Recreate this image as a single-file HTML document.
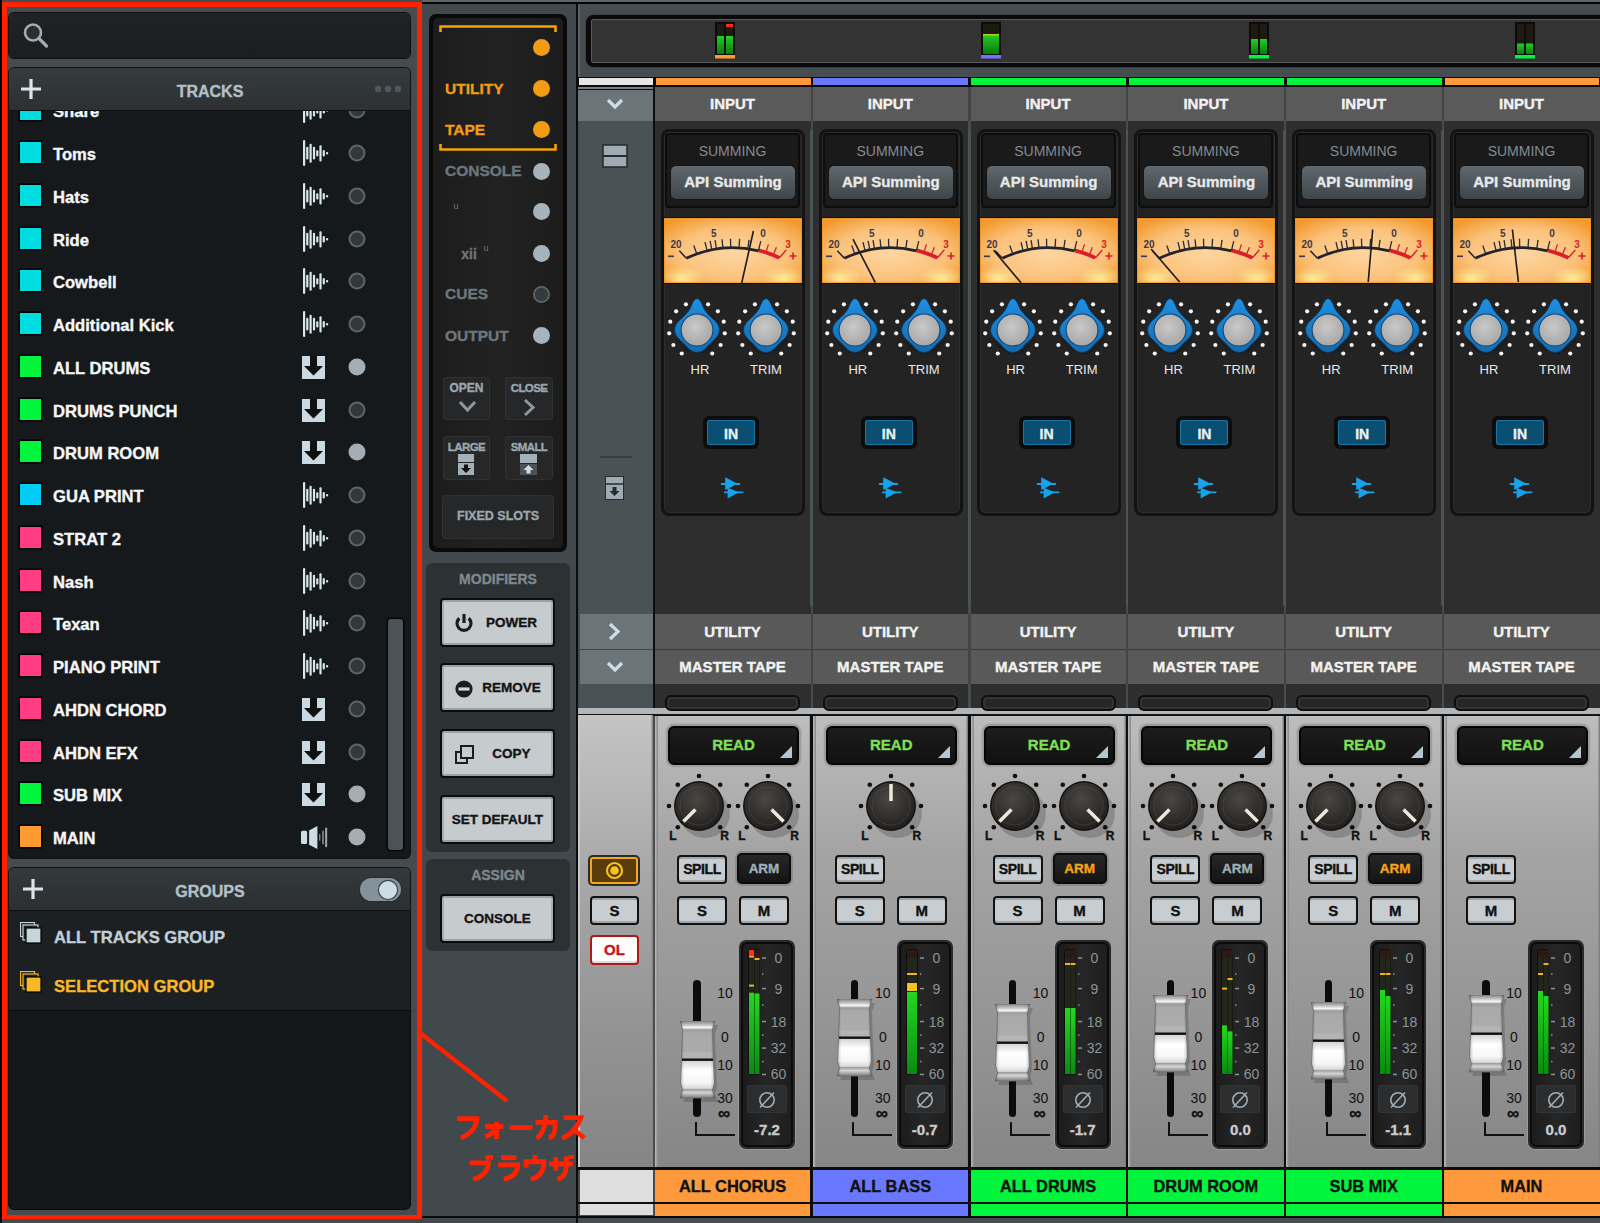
<!DOCTYPE html><html><head><meta charset="utf-8"><style>
*{margin:0;padding:0;box-sizing:border-box}
html,body{width:1600px;height:1223px;overflow:hidden;background:#3d4448;font-family:"Liberation Sans",sans-serif}
.a{position:absolute}
.t{text-align:center;white-space:nowrap}
.b{font-weight:bold}
.t[style*=bold]{-webkit-text-stroke:0.35px currentColor}
</style></head><body>
<div class="a" style="left:0px;top:0px;width:420px;height:1223px;background:#454b4f"></div>
<div class="a" style="left:0px;top:0px;width:2px;height:1223px;background:#000"></div>
<div class="a" style="left:9px;top:13px;width:401px;height:45px;background:linear-gradient(#202326,#1b1e21);border-radius:5px;box-shadow:0 0 0 1px #0d0f10"></div>
<svg class="a" style="left:22px;top:20.5px;" width="28" height="28" viewBox="0 0 28 28"><circle cx="11" cy="11.5" r="8" fill="#2a2e31" stroke="#a3acb2" stroke-width="2.6"/><line x1="17" y1="17.5" x2="24.5" y2="25" stroke="#a3acb2" stroke-width="3.2" stroke-linecap="round"/></svg>
<div class="a" style="left:9px;top:68px;width:401px;height:43px;background:linear-gradient(#363b3e,#2c3033);border-radius:5px 5px 0 0;box-shadow:0 0 0 1px #101214"></div>
<svg class="a" style="left:20px;top:78px;" width="22" height="22" viewBox="0 0 22 22"><path d="M11 1v20M1 11h20" stroke="#dce6ea" stroke-width="3.2"/></svg>
<div class="a t" style="left:150px;top:80.5px;width:120px;height:22px;line-height:22px;font-size:16px;font-weight:bold;color:#b4c0c8">TRACKS</div>
<svg class="a" style="left:372px;top:83px;" width="32" height="12" viewBox="0 0 32 12"><circle cx="6" cy="6" r="3.2" fill="#50585d"/><circle cx="16" cy="6" r="3.2" fill="#50585d"/><circle cx="26" cy="6" r="3.2" fill="#50585d"/></svg>
<div class="a" style="left:9px;top:111px;width:401px;height:747px;background:#16191c;border-radius:0 0 5px 5px;box-shadow:0 0 0 1px #0d0f10;overflow:hidden"></div>
<div class="a" style="left:388px;top:618.5px;width:15px;height:231px;background:#4c5358;border-radius:3px;box-shadow:0 0 0 1.5px #060708"></div>
<div class="a" style="left:9px;top:111px;width:401px;height:747px;overflow:hidden">
<div class="a" style="left:11px;top:-11.75px;width:21px;height:21px;background:#00dde0;box-shadow:0 0 0 1.5px #000"></div>
<div class="a t" style="left:44px;top:-9.75px;width:240px;height:22px;line-height:22px;text-align:left;font-size:16.6px;font-weight:bold;color:#f4f6f7">Share</div>
<svg class="a" style="left:293px;top:-13.75px;" width="27" height="27" viewBox="0 0 27 27"><rect x="1" y="0" width="2.2" height="26" rx="1" fill="#d9e6ea"/><rect x="4.2" y="6.8" width="2.2" height="12.8" rx="1" fill="#d9e6ea"/><rect x="7.5" y="3.7" width="2.2" height="19.0" rx="1" fill="#d9e6ea"/><rect x="10.9" y="6.8" width="2.2" height="12.599999999999998" rx="1" fill="#d9e6ea"/><rect x="14.2" y="10.2" width="2.2" height="6.199999999999999" rx="1" fill="#d9e6ea"/><rect x="17.4" y="5.3" width="2.2" height="16.2" rx="1" fill="#d9e6ea"/><rect x="20.7" y="10" width="2.2" height="6.600000000000001" rx="1" fill="#d9e6ea"/><rect x="24" y="12.1" width="2.2" height="2.5" rx="1" fill="#d9e6ea"/></svg>
<svg class="a" style="left:339px;top:-9.75px;" width="18" height="18" viewBox="0 0 18 18"><circle cx="9" cy="9" r="7.5" fill="#33383b" stroke="#5d6569" stroke-width="2"/></svg>
<div class="a" style="left:11px;top:31.0px;width:21px;height:21px;background:#00dde0;box-shadow:0 0 0 1.5px #000"></div>
<div class="a t" style="left:44px;top:33.0px;width:240px;height:22px;line-height:22px;text-align:left;font-size:16.6px;font-weight:bold;color:#f4f6f7">Toms</div>
<svg class="a" style="left:293px;top:29.0px;" width="27" height="27" viewBox="0 0 27 27"><rect x="1" y="0" width="2.2" height="26" rx="1" fill="#d9e6ea"/><rect x="4.2" y="6.8" width="2.2" height="12.8" rx="1" fill="#d9e6ea"/><rect x="7.5" y="3.7" width="2.2" height="19.0" rx="1" fill="#d9e6ea"/><rect x="10.9" y="6.8" width="2.2" height="12.599999999999998" rx="1" fill="#d9e6ea"/><rect x="14.2" y="10.2" width="2.2" height="6.199999999999999" rx="1" fill="#d9e6ea"/><rect x="17.4" y="5.3" width="2.2" height="16.2" rx="1" fill="#d9e6ea"/><rect x="20.7" y="10" width="2.2" height="6.600000000000001" rx="1" fill="#d9e6ea"/><rect x="24" y="12.1" width="2.2" height="2.5" rx="1" fill="#d9e6ea"/></svg>
<svg class="a" style="left:339px;top:33.0px;" width="18" height="18" viewBox="0 0 18 18"><circle cx="9" cy="9" r="7.5" fill="#33383b" stroke="#5d6569" stroke-width="2"/></svg>
<div class="a" style="left:11px;top:73.75px;width:21px;height:21px;background:#00dde0;box-shadow:0 0 0 1.5px #000"></div>
<div class="a t" style="left:44px;top:75.75px;width:240px;height:22px;line-height:22px;text-align:left;font-size:16.6px;font-weight:bold;color:#f4f6f7">Hats</div>
<svg class="a" style="left:293px;top:71.75px;" width="27" height="27" viewBox="0 0 27 27"><rect x="1" y="0" width="2.2" height="26" rx="1" fill="#d9e6ea"/><rect x="4.2" y="6.8" width="2.2" height="12.8" rx="1" fill="#d9e6ea"/><rect x="7.5" y="3.7" width="2.2" height="19.0" rx="1" fill="#d9e6ea"/><rect x="10.9" y="6.8" width="2.2" height="12.599999999999998" rx="1" fill="#d9e6ea"/><rect x="14.2" y="10.2" width="2.2" height="6.199999999999999" rx="1" fill="#d9e6ea"/><rect x="17.4" y="5.3" width="2.2" height="16.2" rx="1" fill="#d9e6ea"/><rect x="20.7" y="10" width="2.2" height="6.600000000000001" rx="1" fill="#d9e6ea"/><rect x="24" y="12.1" width="2.2" height="2.5" rx="1" fill="#d9e6ea"/></svg>
<svg class="a" style="left:339px;top:75.75px;" width="18" height="18" viewBox="0 0 18 18"><circle cx="9" cy="9" r="7.5" fill="#33383b" stroke="#5d6569" stroke-width="2"/></svg>
<div class="a" style="left:11px;top:116.5px;width:21px;height:21px;background:#00dde0;box-shadow:0 0 0 1.5px #000"></div>
<div class="a t" style="left:44px;top:118.5px;width:240px;height:22px;line-height:22px;text-align:left;font-size:16.6px;font-weight:bold;color:#f4f6f7">Ride</div>
<svg class="a" style="left:293px;top:114.5px;" width="27" height="27" viewBox="0 0 27 27"><rect x="1" y="0" width="2.2" height="26" rx="1" fill="#d9e6ea"/><rect x="4.2" y="6.8" width="2.2" height="12.8" rx="1" fill="#d9e6ea"/><rect x="7.5" y="3.7" width="2.2" height="19.0" rx="1" fill="#d9e6ea"/><rect x="10.9" y="6.8" width="2.2" height="12.599999999999998" rx="1" fill="#d9e6ea"/><rect x="14.2" y="10.2" width="2.2" height="6.199999999999999" rx="1" fill="#d9e6ea"/><rect x="17.4" y="5.3" width="2.2" height="16.2" rx="1" fill="#d9e6ea"/><rect x="20.7" y="10" width="2.2" height="6.600000000000001" rx="1" fill="#d9e6ea"/><rect x="24" y="12.1" width="2.2" height="2.5" rx="1" fill="#d9e6ea"/></svg>
<svg class="a" style="left:339px;top:118.5px;" width="18" height="18" viewBox="0 0 18 18"><circle cx="9" cy="9" r="7.5" fill="#33383b" stroke="#5d6569" stroke-width="2"/></svg>
<div class="a" style="left:11px;top:159.25px;width:21px;height:21px;background:#00dde0;box-shadow:0 0 0 1.5px #000"></div>
<div class="a t" style="left:44px;top:161.25px;width:240px;height:22px;line-height:22px;text-align:left;font-size:16.6px;font-weight:bold;color:#f4f6f7">Cowbell</div>
<svg class="a" style="left:293px;top:157.25px;" width="27" height="27" viewBox="0 0 27 27"><rect x="1" y="0" width="2.2" height="26" rx="1" fill="#d9e6ea"/><rect x="4.2" y="6.8" width="2.2" height="12.8" rx="1" fill="#d9e6ea"/><rect x="7.5" y="3.7" width="2.2" height="19.0" rx="1" fill="#d9e6ea"/><rect x="10.9" y="6.8" width="2.2" height="12.599999999999998" rx="1" fill="#d9e6ea"/><rect x="14.2" y="10.2" width="2.2" height="6.199999999999999" rx="1" fill="#d9e6ea"/><rect x="17.4" y="5.3" width="2.2" height="16.2" rx="1" fill="#d9e6ea"/><rect x="20.7" y="10" width="2.2" height="6.600000000000001" rx="1" fill="#d9e6ea"/><rect x="24" y="12.1" width="2.2" height="2.5" rx="1" fill="#d9e6ea"/></svg>
<svg class="a" style="left:339px;top:161.25px;" width="18" height="18" viewBox="0 0 18 18"><circle cx="9" cy="9" r="7.5" fill="#33383b" stroke="#5d6569" stroke-width="2"/></svg>
<div class="a" style="left:11px;top:202.0px;width:21px;height:21px;background:#00dde0;box-shadow:0 0 0 1.5px #000"></div>
<div class="a t" style="left:44px;top:204.0px;width:240px;height:22px;line-height:22px;text-align:left;font-size:16.6px;font-weight:bold;color:#f4f6f7">Additional Kick</div>
<svg class="a" style="left:293px;top:200.0px;" width="27" height="27" viewBox="0 0 27 27"><rect x="1" y="0" width="2.2" height="26" rx="1" fill="#d9e6ea"/><rect x="4.2" y="6.8" width="2.2" height="12.8" rx="1" fill="#d9e6ea"/><rect x="7.5" y="3.7" width="2.2" height="19.0" rx="1" fill="#d9e6ea"/><rect x="10.9" y="6.8" width="2.2" height="12.599999999999998" rx="1" fill="#d9e6ea"/><rect x="14.2" y="10.2" width="2.2" height="6.199999999999999" rx="1" fill="#d9e6ea"/><rect x="17.4" y="5.3" width="2.2" height="16.2" rx="1" fill="#d9e6ea"/><rect x="20.7" y="10" width="2.2" height="6.600000000000001" rx="1" fill="#d9e6ea"/><rect x="24" y="12.1" width="2.2" height="2.5" rx="1" fill="#d9e6ea"/></svg>
<svg class="a" style="left:339px;top:204.0px;" width="18" height="18" viewBox="0 0 18 18"><circle cx="9" cy="9" r="7.5" fill="#33383b" stroke="#5d6569" stroke-width="2"/></svg>
<div class="a" style="left:11px;top:244.75px;width:21px;height:21px;background:#00f53c;box-shadow:0 0 0 1.5px #000"></div>
<div class="a t" style="left:44px;top:246.75px;width:240px;height:22px;line-height:22px;text-align:left;font-size:16.6px;font-weight:bold;color:#f4f6f7">ALL DRUMS</div>
<svg class="a" style="left:293px;top:244.75px;" width="23" height="23" viewBox="0 0 23 23"><rect x="0" y="0" width="23" height="23" fill="#cbdae2"/><path d="M8 0h7v10h6l-9.5 9.5L2 10h6z" fill="#111"/></svg>
<svg class="a" style="left:339px;top:246.75px;" width="18" height="18" viewBox="0 0 18 18"><circle cx="9" cy="9" r="8.5" fill="#a4adb3"/></svg>
<div class="a" style="left:11px;top:287.5px;width:21px;height:21px;background:#00f53c;box-shadow:0 0 0 1.5px #000"></div>
<div class="a t" style="left:44px;top:289.5px;width:240px;height:22px;line-height:22px;text-align:left;font-size:16.6px;font-weight:bold;color:#f4f6f7">DRUMS PUNCH</div>
<svg class="a" style="left:293px;top:287.5px;" width="23" height="23" viewBox="0 0 23 23"><rect x="0" y="0" width="23" height="23" fill="#cbdae2"/><path d="M8 0h7v10h6l-9.5 9.5L2 10h6z" fill="#111"/></svg>
<svg class="a" style="left:339px;top:289.5px;" width="18" height="18" viewBox="0 0 18 18"><circle cx="9" cy="9" r="7.5" fill="#33383b" stroke="#5d6569" stroke-width="2"/></svg>
<div class="a" style="left:11px;top:330.25px;width:21px;height:21px;background:#00f53c;box-shadow:0 0 0 1.5px #000"></div>
<div class="a t" style="left:44px;top:332.25px;width:240px;height:22px;line-height:22px;text-align:left;font-size:16.6px;font-weight:bold;color:#f4f6f7">DRUM ROOM</div>
<svg class="a" style="left:293px;top:330.25px;" width="23" height="23" viewBox="0 0 23 23"><rect x="0" y="0" width="23" height="23" fill="#cbdae2"/><path d="M8 0h7v10h6l-9.5 9.5L2 10h6z" fill="#111"/></svg>
<svg class="a" style="left:339px;top:332.25px;" width="18" height="18" viewBox="0 0 18 18"><circle cx="9" cy="9" r="8.5" fill="#a4adb3"/></svg>
<div class="a" style="left:11px;top:373.0px;width:21px;height:21px;background:#00ccf5;box-shadow:0 0 0 1.5px #000"></div>
<div class="a t" style="left:44px;top:375.0px;width:240px;height:22px;line-height:22px;text-align:left;font-size:16.6px;font-weight:bold;color:#f4f6f7">GUA PRINT</div>
<svg class="a" style="left:293px;top:371.0px;" width="27" height="27" viewBox="0 0 27 27"><rect x="1" y="0" width="2.2" height="26" rx="1" fill="#d9e6ea"/><rect x="4.2" y="6.8" width="2.2" height="12.8" rx="1" fill="#d9e6ea"/><rect x="7.5" y="3.7" width="2.2" height="19.0" rx="1" fill="#d9e6ea"/><rect x="10.9" y="6.8" width="2.2" height="12.599999999999998" rx="1" fill="#d9e6ea"/><rect x="14.2" y="10.2" width="2.2" height="6.199999999999999" rx="1" fill="#d9e6ea"/><rect x="17.4" y="5.3" width="2.2" height="16.2" rx="1" fill="#d9e6ea"/><rect x="20.7" y="10" width="2.2" height="6.600000000000001" rx="1" fill="#d9e6ea"/><rect x="24" y="12.1" width="2.2" height="2.5" rx="1" fill="#d9e6ea"/></svg>
<svg class="a" style="left:339px;top:375.0px;" width="18" height="18" viewBox="0 0 18 18"><circle cx="9" cy="9" r="7.5" fill="#33383b" stroke="#5d6569" stroke-width="2"/></svg>
<div class="a" style="left:11px;top:415.75px;width:21px;height:21px;background:#ff3d85;box-shadow:0 0 0 1.5px #000"></div>
<div class="a t" style="left:44px;top:417.75px;width:240px;height:22px;line-height:22px;text-align:left;font-size:16.6px;font-weight:bold;color:#f4f6f7">STRAT 2</div>
<svg class="a" style="left:293px;top:413.75px;" width="27" height="27" viewBox="0 0 27 27"><rect x="1" y="0" width="2.2" height="26" rx="1" fill="#d9e6ea"/><rect x="4.2" y="6.8" width="2.2" height="12.8" rx="1" fill="#d9e6ea"/><rect x="7.5" y="3.7" width="2.2" height="19.0" rx="1" fill="#d9e6ea"/><rect x="10.9" y="6.8" width="2.2" height="12.599999999999998" rx="1" fill="#d9e6ea"/><rect x="14.2" y="10.2" width="2.2" height="6.199999999999999" rx="1" fill="#d9e6ea"/><rect x="17.4" y="5.3" width="2.2" height="16.2" rx="1" fill="#d9e6ea"/><rect x="20.7" y="10" width="2.2" height="6.600000000000001" rx="1" fill="#d9e6ea"/><rect x="24" y="12.1" width="2.2" height="2.5" rx="1" fill="#d9e6ea"/></svg>
<svg class="a" style="left:339px;top:417.75px;" width="18" height="18" viewBox="0 0 18 18"><circle cx="9" cy="9" r="7.5" fill="#33383b" stroke="#5d6569" stroke-width="2"/></svg>
<div class="a" style="left:11px;top:458.5px;width:21px;height:21px;background:#ff3d85;box-shadow:0 0 0 1.5px #000"></div>
<div class="a t" style="left:44px;top:460.5px;width:240px;height:22px;line-height:22px;text-align:left;font-size:16.6px;font-weight:bold;color:#f4f6f7">Nash</div>
<svg class="a" style="left:293px;top:456.5px;" width="27" height="27" viewBox="0 0 27 27"><rect x="1" y="0" width="2.2" height="26" rx="1" fill="#d9e6ea"/><rect x="4.2" y="6.8" width="2.2" height="12.8" rx="1" fill="#d9e6ea"/><rect x="7.5" y="3.7" width="2.2" height="19.0" rx="1" fill="#d9e6ea"/><rect x="10.9" y="6.8" width="2.2" height="12.599999999999998" rx="1" fill="#d9e6ea"/><rect x="14.2" y="10.2" width="2.2" height="6.199999999999999" rx="1" fill="#d9e6ea"/><rect x="17.4" y="5.3" width="2.2" height="16.2" rx="1" fill="#d9e6ea"/><rect x="20.7" y="10" width="2.2" height="6.600000000000001" rx="1" fill="#d9e6ea"/><rect x="24" y="12.1" width="2.2" height="2.5" rx="1" fill="#d9e6ea"/></svg>
<svg class="a" style="left:339px;top:460.5px;" width="18" height="18" viewBox="0 0 18 18"><circle cx="9" cy="9" r="7.5" fill="#33383b" stroke="#5d6569" stroke-width="2"/></svg>
<div class="a" style="left:11px;top:501.25px;width:21px;height:21px;background:#ff3d85;box-shadow:0 0 0 1.5px #000"></div>
<div class="a t" style="left:44px;top:503.25px;width:240px;height:22px;line-height:22px;text-align:left;font-size:16.6px;font-weight:bold;color:#f4f6f7">Texan</div>
<svg class="a" style="left:293px;top:499.25px;" width="27" height="27" viewBox="0 0 27 27"><rect x="1" y="0" width="2.2" height="26" rx="1" fill="#d9e6ea"/><rect x="4.2" y="6.8" width="2.2" height="12.8" rx="1" fill="#d9e6ea"/><rect x="7.5" y="3.7" width="2.2" height="19.0" rx="1" fill="#d9e6ea"/><rect x="10.9" y="6.8" width="2.2" height="12.599999999999998" rx="1" fill="#d9e6ea"/><rect x="14.2" y="10.2" width="2.2" height="6.199999999999999" rx="1" fill="#d9e6ea"/><rect x="17.4" y="5.3" width="2.2" height="16.2" rx="1" fill="#d9e6ea"/><rect x="20.7" y="10" width="2.2" height="6.600000000000001" rx="1" fill="#d9e6ea"/><rect x="24" y="12.1" width="2.2" height="2.5" rx="1" fill="#d9e6ea"/></svg>
<svg class="a" style="left:339px;top:503.25px;" width="18" height="18" viewBox="0 0 18 18"><circle cx="9" cy="9" r="7.5" fill="#33383b" stroke="#5d6569" stroke-width="2"/></svg>
<div class="a" style="left:11px;top:544.0px;width:21px;height:21px;background:#ff3d85;box-shadow:0 0 0 1.5px #000"></div>
<div class="a t" style="left:44px;top:546.0px;width:240px;height:22px;line-height:22px;text-align:left;font-size:16.6px;font-weight:bold;color:#f4f6f7">PIANO PRINT</div>
<svg class="a" style="left:293px;top:542.0px;" width="27" height="27" viewBox="0 0 27 27"><rect x="1" y="0" width="2.2" height="26" rx="1" fill="#d9e6ea"/><rect x="4.2" y="6.8" width="2.2" height="12.8" rx="1" fill="#d9e6ea"/><rect x="7.5" y="3.7" width="2.2" height="19.0" rx="1" fill="#d9e6ea"/><rect x="10.9" y="6.8" width="2.2" height="12.599999999999998" rx="1" fill="#d9e6ea"/><rect x="14.2" y="10.2" width="2.2" height="6.199999999999999" rx="1" fill="#d9e6ea"/><rect x="17.4" y="5.3" width="2.2" height="16.2" rx="1" fill="#d9e6ea"/><rect x="20.7" y="10" width="2.2" height="6.600000000000001" rx="1" fill="#d9e6ea"/><rect x="24" y="12.1" width="2.2" height="2.5" rx="1" fill="#d9e6ea"/></svg>
<svg class="a" style="left:339px;top:546.0px;" width="18" height="18" viewBox="0 0 18 18"><circle cx="9" cy="9" r="7.5" fill="#33383b" stroke="#5d6569" stroke-width="2"/></svg>
<div class="a" style="left:11px;top:586.75px;width:21px;height:21px;background:#ff3d85;box-shadow:0 0 0 1.5px #000"></div>
<div class="a t" style="left:44px;top:588.75px;width:240px;height:22px;line-height:22px;text-align:left;font-size:16.6px;font-weight:bold;color:#f4f6f7">AHDN CHORD</div>
<svg class="a" style="left:293px;top:586.75px;" width="23" height="23" viewBox="0 0 23 23"><rect x="0" y="0" width="23" height="23" fill="#cbdae2"/><path d="M8 0h7v10h6l-9.5 9.5L2 10h6z" fill="#111"/></svg>
<svg class="a" style="left:339px;top:588.75px;" width="18" height="18" viewBox="0 0 18 18"><circle cx="9" cy="9" r="7.5" fill="#33383b" stroke="#5d6569" stroke-width="2"/></svg>
<div class="a" style="left:11px;top:629.5px;width:21px;height:21px;background:#ff3d85;box-shadow:0 0 0 1.5px #000"></div>
<div class="a t" style="left:44px;top:631.5px;width:240px;height:22px;line-height:22px;text-align:left;font-size:16.6px;font-weight:bold;color:#f4f6f7">AHDN EFX</div>
<svg class="a" style="left:293px;top:629.5px;" width="23" height="23" viewBox="0 0 23 23"><rect x="0" y="0" width="23" height="23" fill="#cbdae2"/><path d="M8 0h7v10h6l-9.5 9.5L2 10h6z" fill="#111"/></svg>
<svg class="a" style="left:339px;top:631.5px;" width="18" height="18" viewBox="0 0 18 18"><circle cx="9" cy="9" r="7.5" fill="#33383b" stroke="#5d6569" stroke-width="2"/></svg>
<div class="a" style="left:11px;top:672.25px;width:21px;height:21px;background:#00f53c;box-shadow:0 0 0 1.5px #000"></div>
<div class="a t" style="left:44px;top:674.25px;width:240px;height:22px;line-height:22px;text-align:left;font-size:16.6px;font-weight:bold;color:#f4f6f7">SUB MIX</div>
<svg class="a" style="left:293px;top:672.25px;" width="23" height="23" viewBox="0 0 23 23"><rect x="0" y="0" width="23" height="23" fill="#cbdae2"/><path d="M8 0h7v10h6l-9.5 9.5L2 10h6z" fill="#111"/></svg>
<svg class="a" style="left:339px;top:674.25px;" width="18" height="18" viewBox="0 0 18 18"><circle cx="9" cy="9" r="8.5" fill="#a4adb3"/></svg>
<div class="a" style="left:11px;top:715.0px;width:21px;height:21px;background:#ff9a30;box-shadow:0 0 0 1.5px #000"></div>
<div class="a t" style="left:44px;top:717.0px;width:240px;height:22px;line-height:22px;text-align:left;font-size:16.6px;font-weight:bold;color:#f4f6f7">MAIN</div>
<svg class="a" style="left:282px;top:713.0px;" width="38" height="27" viewBox="0 0 38 27"><rect x="10" y="6.7" width="6.1" height="13.2" rx="1.5" fill="#cddde4"/><path d="M18.1 6.4L26.4 1.9V24.9L18.1 20.7Z" fill="#cddde4"/><rect x="28" y="10" width="1.4" height="6.6" fill="#787e82"/><rect x="31" y="6.7" width="2" height="13.6" fill="#6d7378"/><rect x="34.1" y="3.4" width="2.1" height="19.9" rx="1" fill="#9ca2a6"/></svg>
<svg class="a" style="left:339px;top:717.0px;" width="18" height="18" viewBox="0 0 18 18"><circle cx="9" cy="9" r="8.5" fill="#a4adb3"/></svg>
</div>
<div class="a" style="left:9px;top:868px;width:401px;height:43px;background:linear-gradient(#34393c,#2b2f32);border-radius:5px 5px 0 0;box-shadow:0 0 0 1px #101214"></div>
<svg class="a" style="left:22px;top:878px;" width="22" height="22" viewBox="0 0 22 22"><path d="M11 1v20M1 11h20" stroke="#dce6ea" stroke-width="3.2"/></svg>
<div class="a t" style="left:150px;top:881px;width:120px;height:22px;line-height:22px;font-size:16px;font-weight:bold;color:#b4c0c8">GROUPS</div>
<div class="a" style="left:360px;top:878px;width:41px;height:23px;background:#85929a;border-radius:12px;box-shadow:0 0 0 1px #262c30"></div>
<svg class="a" style="left:377px;top:879px;" width="22" height="22" viewBox="0 0 22 22"><circle cx="11" cy="11" r="9.6" fill="#cbdde6" stroke="#3c464b" stroke-width="1.2"/></svg>
<div class="a" style="left:9px;top:911px;width:401px;height:100px;background:#1c2023;box-shadow:0 0 0 1px #0d0f10"></div>
<svg class="a" style="left:20px;top:922px;" width="22" height="22" viewBox="0 0 22 22"><rect x="0.5" y="0.5" width="14" height="14" fill="none" stroke="#c6d4dc" stroke-width="1.2"/><rect x="3" y="3" width="15" height="15" fill="#1c2023" stroke="#c6d4dc" stroke-width="1.2"/><rect x="6" y="6" width="15" height="15" fill="#c6d4dc" stroke="#000" stroke-width="1.2"/></svg>
<div class="a t" style="left:54px;top:927px;width:250px;height:22px;line-height:22px;text-align:left;font-size:16.6px;font-weight:bold;color:#c2ced6">ALL TRACKS GROUP</div>
<svg class="a" style="left:20px;top:971px;" width="22" height="22" viewBox="0 0 22 22"><rect x="0.5" y="0.5" width="14" height="14" fill="none" stroke="#f7b82a" stroke-width="1.2"/><rect x="3" y="3" width="15" height="15" fill="#1c2023" stroke="#f7b82a" stroke-width="1.2"/><rect x="6" y="6" width="15" height="15" fill="#f7b82a" stroke="#000" stroke-width="1.2"/></svg>
<div class="a t" style="left:54px;top:976px;width:250px;height:22px;line-height:22px;text-align:left;font-size:16.6px;font-weight:bold;color:#f7b82a">SELECTION GROUP</div>
<div class="a" style="left:9px;top:1011px;width:401px;height:198px;background:#15181b;border-radius:0 0 5px 5px;box-shadow:0 0 0 1px #0a0b0c"></div>
<div class="a" style="left:422px;top:0px;width:156px;height:1223px;background:#42494c"></div>
<div class="a" style="left:576px;top:0px;width:2px;height:1223px;background:#0b0c0d"></div>
<div class="a" style="left:429px;top:14px;width:138px;height:538px;background:#0a0a0a;border-radius:7px"></div>
<div class="a" style="left:433px;top:18px;width:130px;height:530px;background:linear-gradient(90deg,#1c1c1c,#222 50%,#1c1c1c);border-radius:5px"></div>
<svg class="a" style="left:439px;top:24px;" width="118" height="128" viewBox="0 0 118 128"><path d="M1.5 8V2.5H116.5V8" fill="none" stroke="#f5a300" stroke-width="2.6"/><path d="M1.5 120V125.5H116.5V120" fill="none" stroke="#f5a300" stroke-width="2.6"/></svg>
<svg class="a" style="left:532px;top:38px;" width="19" height="19" viewBox="0 0 19 19"><circle cx="9.5" cy="9.5" r="8.5" fill="#f29b14"/></svg>
<div class="a t" style="left:445px;top:78.7px;width:100px;height:20px;line-height:20px;text-align:left;font-size:15.5px;font-weight:bold;color:#f29b14">UTILITY</div>
<svg class="a" style="left:532px;top:79px;" width="19" height="19" viewBox="0 0 19 19"><circle cx="9.5" cy="9.5" r="8.5" fill="#f29b14"/></svg>
<div class="a t" style="left:445px;top:120px;width:100px;height:20px;line-height:20px;text-align:left;font-size:15.5px;font-weight:bold;color:#f29b14">TAPE</div>
<svg class="a" style="left:532px;top:120px;" width="19" height="19" viewBox="0 0 19 19"><circle cx="9.5" cy="9.5" r="8.5" fill="#f29b14"/></svg>
<div class="a t" style="left:445px;top:161px;width:100px;height:20px;line-height:20px;text-align:left;font-size:15.5px;font-weight:bold;color:#6d777d">CONSOLE</div>
<svg class="a" style="left:532px;top:162px;" width="19" height="19" viewBox="0 0 19 19"><circle cx="9.5" cy="9.5" r="8.5" fill="#a7b3ba"/></svg>
<svg class="a" style="left:532px;top:202px;" width="19" height="19" viewBox="0 0 19 19"><circle cx="9.5" cy="9.5" r="8.5" fill="#a7b3ba"/></svg>
<svg class="a" style="left:532px;top:244px;" width="19" height="19" viewBox="0 0 19 19"><circle cx="9.5" cy="9.5" r="8.5" fill="#a7b3ba"/></svg>
<div class="a t" style="left:445px;top:284.4px;width:100px;height:20px;line-height:20px;text-align:left;font-size:15.5px;font-weight:bold;color:#6d777d">CUES</div>
<svg class="a" style="left:532px;top:285px;" width="19" height="19" viewBox="0 0 19 19"><circle cx="9.5" cy="9.5" r="7.6" fill="#363a3c" stroke="#5f676b" stroke-width="1.6"/></svg>
<div class="a t" style="left:445px;top:325.6px;width:100px;height:20px;line-height:20px;text-align:left;font-size:15.5px;font-weight:bold;color:#6d777d">OUTPUT</div>
<svg class="a" style="left:532px;top:326px;" width="19" height="19" viewBox="0 0 19 19"><circle cx="9.5" cy="9.5" r="8.5" fill="#a7b3ba"/></svg>
<div class="a t" style="left:450px;top:199px;width:12px;height:14px;line-height:14px;font-size:9px;color:#6d777d">u</div>
<div class="a t" style="left:457px;top:245px;width:24px;height:18px;line-height:18px;font-size:14px;font-weight:bold;color:#6d777d">xii</div>
<div class="a t" style="left:480px;top:241px;width:12px;height:14px;line-height:14px;font-size:9px;color:#6d777d">u</div>
<div class="a" style="left:443px;top:377px;width:47px;height:43px;background:#262729;border-radius:4px;box-shadow:inset 0 0 0 1px #2f3133"></div>
<div class="a t" style="left:443px;top:380px;width:47px;height:16px;line-height:16px;font-size:12px;font-weight:bold;color:#9ca7ad;letter-spacing:0px">OPEN</div>
<svg class="a" style="left:458px;top:400px;" width="19" height="13" viewBox="0 0 19 13"><path d="M2 2l7.5 8 7.5-8" fill="none" stroke="#8d989e" stroke-width="3"/></svg>
<div class="a" style="left:505px;top:377px;width:48px;height:43px;background:#262729;border-radius:4px;box-shadow:inset 0 0 0 1px #2f3133"></div>
<div class="a t" style="left:505px;top:380px;width:48px;height:16px;line-height:16px;font-size:11.5px;font-weight:bold;color:#9ca7ad;letter-spacing:-0.6px">CLOSE</div>
<svg class="a" style="left:522px;top:398px;" width="14" height="19" viewBox="0 0 14 19"><path d="M3 2l8 7.5-8 7.5" fill="none" stroke="#8d989e" stroke-width="3"/></svg>
<div class="a" style="left:443px;top:436px;width:47px;height:44px;background:#262729;border-radius:4px;box-shadow:inset 0 0 0 1px #2f3133"></div>
<div class="a t" style="left:443px;top:439px;width:47px;height:16px;line-height:16px;font-size:11.5px;font-weight:bold;color:#9ca7ad;letter-spacing:-0.6px">LARGE</div>
<svg class="a" style="left:458px;top:454px;" width="16" height="21" viewBox="0 0 16 21"><rect x="0" y="0" width="16" height="8" fill="#a4b0b7"/><rect x="0" y="9" width="16" height="12" fill="#a4b0b7"/><path d="M6 10.5h4v3.5h3l-5 5-5-5h3z" fill="#111"/></svg>
<div class="a" style="left:505px;top:436px;width:48px;height:44px;background:#262729;border-radius:4px;box-shadow:inset 0 0 0 1px #2f3133"></div>
<div class="a t" style="left:505px;top:439px;width:48px;height:16px;line-height:16px;font-size:11.5px;font-weight:bold;color:#9ca7ad;letter-spacing:-0.6px">SMALL</div>
<svg class="a" style="left:520px;top:454px;" width="17" height="21" viewBox="0 0 17 21"><rect x="0" y="0" width="17" height="9" fill="#a4b0b7"/><rect x="0" y="10" width="17" height="11" fill="#4b5358"/><path d="M8.5 11l5 5h-3v3.5h-4V16h-3z" fill="#d5dde2"/></svg>
<div class="a" style="left:442px;top:495px;width:112px;height:44px;background:#262729;border-radius:4px;box-shadow:inset 0 0 0 1px #2f3133"></div>
<div class="a t" style="left:442px;top:505px;width:112px;height:22px;line-height:22px;font-size:12.5px;font-weight:bold;color:#9ca7ad">FIXED SLOTS</div>
<div class="a" style="left:426px;top:563px;width:144px;height:289px;background:#2c3134;border-radius:6px"></div>
<div class="a t" style="left:426px;top:569px;width:144px;height:20px;line-height:20px;font-size:14px;font-weight:bold;color:#7f888d">MODIFIERS</div>
<div class="a" style="left:440px;top:598px;width:115px;height:49px;background:#c6cbce;border:2px solid #0c0c0c;border-radius:4px;box-shadow:inset 0 2px 0 #9aa0a3,inset 0 -2px 0 #9aa0a3,inset 2px 0 0 #a8aeb1,inset -2px 0 0 #a8aeb1"></div>
<div class="a t" style="left:468px;top:598px;width:87px;height:49px;line-height:49px;font-size:13.5px;font-weight:bold;color:#141414">POWER</div>
<svg class="a" style="left:454px;top:613px;" width="20" height="20" viewBox="0 0 20 20"><path d="M5.3 5.2A7 7 0 1 0 14.7 5.2" fill="none" stroke="#1c1c1c" stroke-width="3.2"/><rect x="8.4" y="1" width="3.2" height="9" fill="#1c1c1c"/></svg>
<div class="a" style="left:440px;top:663px;width:115px;height:49px;background:#c6cbce;border:2px solid #0c0c0c;border-radius:4px;box-shadow:inset 0 2px 0 #9aa0a3,inset 0 -2px 0 #9aa0a3,inset 2px 0 0 #a8aeb1,inset -2px 0 0 #a8aeb1"></div>
<div class="a t" style="left:468px;top:663px;width:87px;height:49px;line-height:49px;font-size:13.5px;font-weight:bold;color:#141414">REMOVE</div>
<svg class="a" style="left:455px;top:680px;" width="18" height="18" viewBox="0 0 18 18"><circle cx="9" cy="9" r="8.6" fill="#1c1c1c"/><rect x="3.5" y="7.4" width="11" height="3.2" fill="#d0d4d6"/></svg>
<div class="a" style="left:440px;top:729px;width:115px;height:49px;background:#c6cbce;border:2px solid #0c0c0c;border-radius:4px;box-shadow:inset 0 2px 0 #9aa0a3,inset 0 -2px 0 #9aa0a3,inset 2px 0 0 #a8aeb1,inset -2px 0 0 #a8aeb1"></div>
<div class="a t" style="left:468px;top:729px;width:87px;height:49px;line-height:49px;font-size:13.5px;font-weight:bold;color:#141414">COPY</div>
<svg class="a" style="left:455px;top:745px;" width="19" height="19" viewBox="0 0 19 19"><rect x="6" y="1" width="12" height="12" fill="none" stroke="#1c1c1c" stroke-width="2"/><path d="M6 7H1v11h11v-5" fill="none" stroke="#1c1c1c" stroke-width="2"/></svg>
<div class="a" style="left:440px;top:795px;width:115px;height:49px;background:#c6cbce;border:2px solid #0c0c0c;border-radius:4px;box-shadow:inset 0 2px 0 #9aa0a3,inset 0 -2px 0 #9aa0a3,inset 2px 0 0 #a8aeb1,inset -2px 0 0 #a8aeb1"></div>
<div class="a t" style="left:440px;top:795px;width:115px;height:49px;line-height:49px;font-size:13.5px;font-weight:bold;color:#141414">SET DEFAULT</div>
<div class="a" style="left:426px;top:859px;width:144px;height:92px;background:#2c3134;border-radius:6px"></div>
<div class="a t" style="left:426px;top:865px;width:144px;height:20px;line-height:20px;font-size:14px;font-weight:bold;color:#7f888d">ASSIGN</div>
<div class="a" style="left:440px;top:894px;width:115px;height:49px;background:#c6cbce;border:2px solid #0c0c0c;border-radius:4px;box-shadow:inset 0 2px 0 #9aa0a3,inset 0 -2px 0 #9aa0a3,inset 2px 0 0 #a8aeb1,inset -2px 0 0 #a8aeb1"></div>
<div class="a t" style="left:440px;top:894px;width:115px;height:49px;line-height:49px;font-size:13.5px;font-weight:bold;color:#141414">CONSOLE</div>
<div class="a" style="left:578px;top:0px;width:1022px;height:1223px;background:#454d51"></div>
<div class="a" style="left:422px;top:0px;width:1178px;height:2px;background:#5c6468"></div>
<div class="a" style="left:422px;top:2px;width:1178px;height:2px;background:#050505"></div>
<div class="a" style="left:578px;top:4px;width:2px;height:74px;background:#5a6266"></div>
<div class="a" style="left:586px;top:14.5px;width:1030px;height:52px;background:#0a0a0a;border-radius:8px;box-shadow:0 0 0 1px #3a4044"></div>
<div class="a" style="left:591px;top:18.5px;width:1030px;height:44px;background:#333;border:1px solid #5a5a5a;border-radius:2px"></div>
<svg width="0" height="0" style="position:absolute"><defs><linearGradient id="mg" x1="0" y1="0" x2="0" y2="1"><stop offset="0" stop-color="#22d022"/><stop offset="1" stop-color="#0a7a10"/></linearGradient><linearGradient id="bg" x1="0" y1="0" x2="0" y2="1"><stop offset="0" stop-color="#23d81f"/><stop offset="1" stop-color="#0a8a12"/></linearGradient><radialGradient id="vug" cx="0.5" cy="0.55" r="0.65"><stop offset="0" stop-color="#fdd6a0"/><stop offset="0.6" stop-color="#fbc27c"/><stop offset="1" stop-color="#f29a2e"/></radialGradient><radialGradient id="vuy" cx="0.5" cy="0.5" r="0.5"><stop offset="0" stop-color="#fff3a0" stop-opacity="0.9"/><stop offset="1" stop-color="#fff3a0" stop-opacity="0"/></radialGradient><radialGradient id="kg" cx="0.45" cy="0.4" r="0.6"><stop offset="0" stop-color="#c9c9c9"/><stop offset="1" stop-color="#a8a8a8"/></radialGradient><linearGradient id="kb" x1="0" y1="0" x2="0" y2="1"><stop offset="0" stop-color="#1f8fe0"/><stop offset="1" stop-color="#136bb0"/></linearGradient><radialGradient id="pk" cx="0.45" cy="0.35" r="0.7"><stop offset="0" stop-color="#4a4744"/><stop offset="0.7" stop-color="#2c2a28"/><stop offset="1" stop-color="#1e1c1b"/></radialGradient><linearGradient id="fc" x1="0" y1="0" x2="0" y2="1"><stop offset="0" stop-color="#8a8a8a"/><stop offset="0.04" stop-color="#b4b4b4"/><stop offset="0.085" stop-color="#f6f6f6"/><stop offset="0.115" stop-color="#9c9c9c"/><stop offset="0.16" stop-color="#a9a9a9"/><stop offset="0.40" stop-color="#acacac"/><stop offset="0.42" stop-color="#b6b6b6"/><stop offset="0.49" stop-color="#b2b2b2"/><stop offset="0.52" stop-color="#d4d4d4"/><stop offset="0.64" stop-color="#ffffff"/><stop offset="0.80" stop-color="#f6f6f6"/><stop offset="0.875" stop-color="#dadada"/><stop offset="0.885" stop-color="#9a9a9a"/><stop offset="0.93" stop-color="#d4d4d4"/><stop offset="1" stop-color="#7a7a7a"/></linearGradient><linearGradient id="fcx" x1="0" y1="0" x2="1" y2="0"><stop offset="0" stop-color="#000" stop-opacity="0.25"/><stop offset="0.12" stop-color="#000" stop-opacity="0"/><stop offset="0.88" stop-color="#000" stop-opacity="0"/><stop offset="1" stop-color="#000" stop-opacity="0.25"/></linearGradient></defs></svg>
<svg class="a" style="left:715px;top:22px;" width="20" height="37" viewBox="0 0 20 37"><rect x="0" y="0" width="20" height="33" fill="#0c0c0c"/><rect x="2" y="2" width="7" height="30" fill="#1e1a12"/><rect x="11" y="2" width="7" height="30" fill="#1e1a12"/><rect x="2" y="14" width="7" height="18" fill="url(#mg)"/><rect x="11" y="14" width="7" height="18" fill="url(#mg)"/><rect x="11" y="2" width="7" height="3" fill="#ff2a1a"/><rect x="0" y="33" width="20" height="3.5" fill="#ff9a30"/></svg>
<svg class="a" style="left:981px;top:22px;" width="20" height="37" viewBox="0 0 20 37"><rect x="0" y="0" width="20" height="33" fill="#0c0c0c"/><rect x="2" y="2" width="16" height="30" fill="#1e1a12"/><rect x="2" y="12" width="16" height="20" fill="url(#mg)"/><rect x="2" y="12" width="16" height="1.5" fill="#b8d020"/><rect x="0" y="33" width="20" height="3.5" fill="#6a78ff"/></svg>
<svg class="a" style="left:1249px;top:22px;" width="20" height="37" viewBox="0 0 20 37"><rect x="0" y="0" width="20" height="33" fill="#0c0c0c"/><rect x="2" y="2" width="7" height="30" fill="#1e1a12"/><rect x="11" y="2" width="7" height="30" fill="#1e1a12"/><rect x="2" y="17" width="7" height="15" fill="url(#mg)"/><rect x="11" y="17" width="7" height="15" fill="url(#mg)"/><rect x="0" y="33" width="20" height="3.5" fill="#00f53c"/></svg>
<svg class="a" style="left:1515px;top:22px;" width="20" height="37" viewBox="0 0 20 37"><rect x="0" y="0" width="20" height="33" fill="#0c0c0c"/><rect x="2" y="2" width="7" height="30" fill="#1e1a12"/><rect x="11" y="2" width="7" height="30" fill="#1e1a12"/><rect x="2" y="21.5" width="7" height="10.5" fill="url(#mg)"/><rect x="11" y="21.5" width="7" height="10.5" fill="url(#mg)"/><rect x="0" y="33" width="20" height="3.5" fill="#00f53c"/></svg>
<div class="a" style="left:578px;top:77px;width:1022px;height:9.5px;background:#0c0c0c"></div>
<div class="a" style="left:579px;top:78px;width:73.5px;height:6.5px;background:#e6e6e6"></div>
<div class="a" style="left:578px;top:86.5px;width:75px;height:2px;background:#7b8286"></div>
<div class="a" style="left:578px;top:88.5px;width:75px;height:1px;background:#0c0c0c"></div>
<div class="a" style="left:578px;top:89.5px;width:75px;height:31.5px;background:#6b7479"></div>
<svg class="a" style="left:606px;top:98px;" width="18" height="12" viewBox="0 0 18 12"><path d="M2 2l7 7 7-7" fill="none" stroke="#cddde5" stroke-width="3.2"/></svg>
<div class="a" style="left:580px;top:121px;width:73px;height:493px;background:#495356"></div>
<svg class="a" style="left:602px;top:144px;" width="26" height="24" viewBox="0 0 26 24"><rect x="1" y="1" width="24" height="22" fill="#9eabb2" stroke="#252b2e" stroke-width="1.5"/><line x1="1" y1="12" x2="25" y2="12" stroke="#252b2e" stroke-width="2"/></svg>
<div class="a" style="left:600px;top:456px;width:32px;height:2px;background:#373d40"></div>
<svg class="a" style="left:605px;top:476px;" width="19" height="24" viewBox="0 0 19 24"><rect x="0.5" y="0.5" width="18" height="23" fill="#9eabb2" stroke="#252b2e" stroke-width="1"/><line x1="0" y1="8" x2="19" y2="8" stroke="#252b2e" stroke-width="1.5"/><path d="M7.5 11h4v4h3l-5 5-5-5h3z" fill="#252b2e"/></svg>
<div class="a" style="left:580px;top:614px;width:73px;height:35px;background:#6b7479"></div>
<svg class="a" style="left:608px;top:622px;" width="13" height="19" viewBox="0 0 13 19"><path d="M2 2l8 7.5-8 7.5" fill="none" stroke="#cddde5" stroke-width="3.2"/></svg>
<div class="a" style="left:580px;top:650px;width:73px;height:34px;background:#6b7479"></div>
<div class="a" style="left:580px;top:649px;width:73px;height:1px;background:#3f474b"></div>
<svg class="a" style="left:606px;top:661px;" width="18" height="12" viewBox="0 0 18 12"><path d="M2 2l7 7 7-7" fill="none" stroke="#cddde5" stroke-width="3.2"/></svg>
<div class="a" style="left:580px;top:684px;width:73px;height:24px;background:#495356"></div>
<div class="a" style="left:653px;top:78px;width:2px;height:637px;background:#0e0e0e"></div>
<div class="a" style="left:578px;top:707.5px;width:1022px;height:6.5px;background:#b2b6b8"></div>
<div class="a" style="left:578px;top:714px;width:1022px;height:2px;background:#111"></div>
<div class="a" style="left:578px;top:715px;width:75px;height:452px;background:linear-gradient(#c4c4c4,#a8a8a8 35%,#939393 70%,#858585);box-shadow:inset 2px 0 0 #c8c8c8,inset -1.5px 0 0 #8a8a8a"></div>
<div class="a" style="left:590px;top:857px;width:48px;height:27px;background:#5a3c0c;border:2px solid #f2a818;border-radius:3px;box-shadow:0 0 0 2px #2a2a2a"></div>
<svg class="a" style="left:604px;top:860px;" width="21" height="21" viewBox="0 0 21 21"><circle cx="10.5" cy="10.5" r="7.5" fill="none" stroke="#f7c21a" stroke-width="2.2"/><circle cx="10.5" cy="10.5" r="4.3" fill="#f7c21a"/></svg>
<div class="a" style="left:590px;top:896px;width:49px;height:29px;background:#c7cdd0;border:2px solid #111;border-radius:4px;box-shadow:inset 0 2px 0 #a0a6a9,inset 0 -2px 0 #a0a6a9"></div>
<div class="a t" style="left:590px;top:896px;width:49px;height:29px;line-height:29px;font-size:15px;font-weight:bold;color:#111">S</div>
<div class="a" style="left:590px;top:935px;width:49px;height:30px;background:#fdfdfd;border:2px solid #b01818;border-radius:4px;box-shadow:inset 0 -2px 0 #ddd"></div>
<div class="a t" style="left:590px;top:935px;width:49px;height:30px;line-height:30px;font-size:15px;font-weight:bold;color:#c8141a">OL</div>
<div class="a" style="left:580px;top:1169px;width:73px;height:33px;background:#dedede"></div>
<div class="a" style="left:580px;top:1204px;width:73px;height:11px;background:#dedede"></div>
<div class="a" style="left:578px;top:1167px;width:1022px;height:2.5px;background:#0d0d0d"></div>
<div class="a" style="left:578px;top:1202px;width:1022px;height:2px;background:#0d0d0d"></div>
<div class="a" style="left:578px;top:1215.5px;width:1022px;height:8px;background:#454d51"></div>
<div class="a" style="left:655.5px;top:78px;width:155.0px;height:6.5px;background:#ff9a3c"></div>
<div class="a" style="left:655.0px;top:87px;width:155.5px;height:34px;background:#5a5a5a"></div>
<div class="a t" style="left:655.0px;top:94px;width:155px;height:20px;line-height:20px;font-size:15px;font-weight:bold;color:#f2f2f2">INPUT</div>
<div class="a" style="left:655.0px;top:121px;width:155.5px;height:493px;background:#2e2e2e"></div>
<div class="a" style="left:810.5px;top:87px;width:2.3px;height:34px;background:#444"></div>
<div class="a" style="left:810.0px;top:130px;width:4px;height:476px;background:#4d5458;border-radius:2px"></div>
<div class="a" style="left:810.5px;top:614px;width:2.3px;height:70px;background:#444"></div>
<div class="a" style="left:661.0px;top:129px;width:144px;height:387px;background:#232323;border:3px solid #131313;border-radius:8px;box-shadow:inset 0 0 0 1px #2c2c2c"></div>
<div class="a" style="left:665.0px;top:133px;width:135px;height:75px;background:#1a1a1a;border:2px solid #0c0c0c;border-radius:4px"></div>
<div class="a t" style="left:665.0px;top:141px;width:135px;height:20px;line-height:20px;font-size:14px;color:#838b90">SUMMING</div>
<div class="a" style="left:671.0px;top:166px;width:124px;height:33px;background:linear-gradient(#61686d,#3f464a);border-radius:5px;box-shadow:0 0 0 1px #151515"></div>
<div class="a t" style="left:671.0px;top:171px;width:124px;height:22px;line-height:22px;font-size:15px;font-weight:bold;color:#e6e9eb">API Summing</div>
<div class="a" style="left:663.0px;top:217px;width:140px;height:67px;background:#111"></div>
<svg class="a" style="left:664.0px;top:218px;" width="138" height="65" viewBox="0 0 138 65"><rect width="138" height="65" fill="url(#vug)"/><ellipse cx="18" cy="60" rx="22" ry="12" fill="url(#vuy)"/><ellipse cx="120" cy="60" rx="22" ry="12" fill="url(#vuy)"/><rect width="138" height="65" fill="none" stroke="#e88a20" stroke-width="1.5" opacity="0.7"/><path d="M22.35 40.33A106.6 106.6 0 0 1 94.54 32.87" fill="none" stroke="#23232e" stroke-width="2.8"/><path d="M94.66 32.38A107.1 107.1 0 0 1 115.36 39.88" fill="none" stroke="#d8202a" stroke-width="3.8"/><line x1="32.82" y1="35.94" x2="29.78" y2="27.47" stroke="#2a2a36" stroke-width="1.3"/><line x1="43.14" y1="32.82" x2="40.98" y2="24.09" stroke="#2a2a36" stroke-width="1.3"/><line x1="47.86" y1="31.77" x2="46.10" y2="22.94" stroke="#2a2a36" stroke-width="1.3"/><line x1="52.44" y1="30.95" x2="51.06" y2="22.06" stroke="#2a2a36" stroke-width="1.3"/><line x1="58.90" y1="30.16" x2="58.07" y2="21.19" stroke="#2a2a36" stroke-width="1.3"/><line x1="66.70" y1="29.72" x2="66.53" y2="20.72" stroke="#2a2a36" stroke-width="1.3"/><line x1="75.07" y1="29.89" x2="75.61" y2="20.90" stroke="#2a2a36" stroke-width="1.3"/><line x1="83.77" y1="30.76" x2="85.04" y2="21.85" stroke="#2a2a36" stroke-width="1.3"/><line x1="94.36" y1="32.82" x2="96.76" y2="23.11" stroke="#2a2a36" stroke-width="1.3"/><line x1="101.69" y1="34.92" x2="104.47" y2="26.36" stroke="#d8202a" stroke-width="1.3"/><line x1="109.03" y1="37.60" x2="112.43" y2="29.27" stroke="#d8202a" stroke-width="1.3"/><line x1="22.35" y1="40.33" x2="15.35" y2="32.83" stroke="#23232e" stroke-width="1.5"/><line x1="115.36" y1="39.88" x2="122.36" y2="31.88" stroke="#d8202a" stroke-width="1.5"/><text x="12" y="29.5" font-size="10" font-family="Liberation Sans" font-weight="bold" fill="#3a3a4a" text-anchor="middle">20</text><text x="49.7" y="19" font-size="10" font-family="Liberation Sans" font-weight="bold" fill="#3a3a4a" text-anchor="middle">5</text><text x="99" y="19" font-size="10" font-family="Liberation Sans" font-weight="bold" fill="#3a3a4a" text-anchor="middle">0</text><text x="124" y="29.5" font-size="10" font-family="Liberation Sans" font-weight="bold" fill="#d8202a" text-anchor="middle">3</text><rect x="4" y="37.5" width="6" height="1.6" fill="#3a3a4a"/><path d="M125.5 38h7M129 34.5v7" stroke="#d8202a" stroke-width="1.6"/><line x1="77.7" y1="65" x2="89.4" y2="13" stroke="#1a1a1a" stroke-width="1.6"/></svg>
<svg class="a" style="left:665.0px;top:298px;" width="64" height="64" viewBox="0 0 64 64"><circle cx="43.08" cy="6.28" r="2.1" fill="#f4f4f4"/><circle cx="20.92" cy="6.28" r="2.1" fill="#f4f4f4"/><circle cx="52.87" cy="13.34" r="2.1" fill="#f4f4f4"/><circle cx="11.13" cy="13.34" r="2.1" fill="#f4f4f4"/><circle cx="58.72" cy="23.63" r="2.1" fill="#f4f4f4"/><circle cx="5.28" cy="23.63" r="2.1" fill="#f4f4f4"/><circle cx="59.80" cy="35.36" r="2.1" fill="#f4f4f4"/><circle cx="4.20" cy="35.36" r="2.1" fill="#f4f4f4"/><circle cx="55.64" cy="47.00" r="2.1" fill="#f4f4f4"/><circle cx="8.36" cy="47.00" r="2.1" fill="#f4f4f4"/><circle cx="47.25" cy="55.48" r="2.1" fill="#f4f4f4"/><circle cx="16.75" cy="55.48" r="2.1" fill="#f4f4f4"/><circle cx="33" cy="34" r="22" fill="#1a1a1a" opacity="0.6"/><path d="M32.00 0.70L33.61 1.25L35.08 2.73L36.31 4.79L37.32 6.98L38.17 8.98L38.94 10.65L39.68 11.98L40.43 13.07L41.17 14.01L41.90 14.86L42.61 15.67L43.30 16.44L43.99 17.20L44.67 17.93L45.36 18.64L46.07 19.33L46.80 20.01L47.55 20.70L48.32 21.40L49.10 22.12L49.89 22.89L50.66 23.69L51.40 24.55L52.09 25.47L52.72 26.45L53.26 27.48L53.70 28.56L54.03 29.68L54.23 30.83L54.30 32.00L54.23 33.17L54.03 34.32L53.70 35.44L53.26 36.52L52.72 37.55L52.09 38.53L51.40 39.45L50.66 40.31L49.89 41.11L49.10 41.88L48.32 42.60L47.55 43.30L46.80 43.99L46.07 44.67L45.36 45.36L44.67 46.07L43.99 46.80L43.30 47.55L42.60 48.32L41.88 49.10L41.11 49.89L40.31 50.66L39.45 51.40L38.53 52.09L37.55 52.72L36.52 53.26L35.44 53.70L34.32 54.03L33.17 54.23L32.00 54.30L30.83 54.23L29.68 54.03L28.56 53.70L27.48 53.26L26.45 52.72L25.47 52.09L24.55 51.40L23.69 50.66L22.89 49.89L22.13 49.10L21.40 48.32L20.70 47.55L20.01 46.80L19.33 46.07L18.64 45.36L17.93 44.67L17.20 43.99L16.45 43.30L15.68 42.60L14.90 41.88L14.11 41.11L13.34 40.31L12.60 39.45L11.91 38.53L11.28 37.55L10.74 36.52L10.30 35.44L9.97 34.32L9.77 33.17L9.70 32.00L9.77 30.83L9.97 29.68L10.30 28.56L10.74 27.48L11.28 26.45L11.91 25.47L12.60 24.55L13.34 23.69L14.11 22.89L14.90 22.12L15.68 21.40L16.45 20.70L17.20 20.01L17.93 19.33L18.64 18.64L19.33 17.93L20.01 17.20L20.70 16.44L21.39 15.67L22.10 14.86L22.83 14.01L23.57 13.07L24.32 11.98L25.06 10.65L25.83 8.98L26.68 6.98L27.69 4.79L28.92 2.73L30.39 1.25Z" fill="url(#kb)" stroke="#0a3f70" stroke-width="0.8"/><circle cx="32" cy="32" r="16.4" fill="#0c3f6e"/><circle cx="32" cy="32" r="15.4" fill="url(#kg)"/></svg>
<svg class="a" style="left:734.0px;top:298px;" width="64" height="64" viewBox="0 0 64 64"><circle cx="43.08" cy="6.28" r="2.1" fill="#f4f4f4"/><circle cx="20.92" cy="6.28" r="2.1" fill="#f4f4f4"/><circle cx="52.87" cy="13.34" r="2.1" fill="#f4f4f4"/><circle cx="11.13" cy="13.34" r="2.1" fill="#f4f4f4"/><circle cx="58.72" cy="23.63" r="2.1" fill="#f4f4f4"/><circle cx="5.28" cy="23.63" r="2.1" fill="#f4f4f4"/><circle cx="59.80" cy="35.36" r="2.1" fill="#f4f4f4"/><circle cx="4.20" cy="35.36" r="2.1" fill="#f4f4f4"/><circle cx="55.64" cy="47.00" r="2.1" fill="#f4f4f4"/><circle cx="8.36" cy="47.00" r="2.1" fill="#f4f4f4"/><circle cx="47.25" cy="55.48" r="2.1" fill="#f4f4f4"/><circle cx="16.75" cy="55.48" r="2.1" fill="#f4f4f4"/><circle cx="33" cy="34" r="22" fill="#1a1a1a" opacity="0.6"/><path d="M32.00 0.70L33.61 1.25L35.08 2.73L36.31 4.79L37.32 6.98L38.17 8.98L38.94 10.65L39.68 11.98L40.43 13.07L41.17 14.01L41.90 14.86L42.61 15.67L43.30 16.44L43.99 17.20L44.67 17.93L45.36 18.64L46.07 19.33L46.80 20.01L47.55 20.70L48.32 21.40L49.10 22.12L49.89 22.89L50.66 23.69L51.40 24.55L52.09 25.47L52.72 26.45L53.26 27.48L53.70 28.56L54.03 29.68L54.23 30.83L54.30 32.00L54.23 33.17L54.03 34.32L53.70 35.44L53.26 36.52L52.72 37.55L52.09 38.53L51.40 39.45L50.66 40.31L49.89 41.11L49.10 41.88L48.32 42.60L47.55 43.30L46.80 43.99L46.07 44.67L45.36 45.36L44.67 46.07L43.99 46.80L43.30 47.55L42.60 48.32L41.88 49.10L41.11 49.89L40.31 50.66L39.45 51.40L38.53 52.09L37.55 52.72L36.52 53.26L35.44 53.70L34.32 54.03L33.17 54.23L32.00 54.30L30.83 54.23L29.68 54.03L28.56 53.70L27.48 53.26L26.45 52.72L25.47 52.09L24.55 51.40L23.69 50.66L22.89 49.89L22.13 49.10L21.40 48.32L20.70 47.55L20.01 46.80L19.33 46.07L18.64 45.36L17.93 44.67L17.20 43.99L16.45 43.30L15.68 42.60L14.90 41.88L14.11 41.11L13.34 40.31L12.60 39.45L11.91 38.53L11.28 37.55L10.74 36.52L10.30 35.44L9.97 34.32L9.77 33.17L9.70 32.00L9.77 30.83L9.97 29.68L10.30 28.56L10.74 27.48L11.28 26.45L11.91 25.47L12.60 24.55L13.34 23.69L14.11 22.89L14.90 22.12L15.68 21.40L16.45 20.70L17.20 20.01L17.93 19.33L18.64 18.64L19.33 17.93L20.01 17.20L20.70 16.44L21.39 15.67L22.10 14.86L22.83 14.01L23.57 13.07L24.32 11.98L25.06 10.65L25.83 8.98L26.68 6.98L27.69 4.79L28.92 2.73L30.39 1.25Z" fill="url(#kb)" stroke="#0a3f70" stroke-width="0.8"/><circle cx="32" cy="32" r="16.4" fill="#0c3f6e"/><circle cx="32" cy="32" r="15.4" fill="url(#kg)"/></svg>
<div class="a t" style="left:680.0px;top:361px;width:40px;height:18px;line-height:18px;font-size:13px;color:#e8e8e8">HR</div>
<div class="a t" style="left:746.0px;top:361px;width:40px;height:18px;line-height:18px;font-size:13px;color:#e8e8e8">TRIM</div>
<div class="a" style="left:703.0px;top:416px;width:56px;height:33px;background:#0c0c0c;border-radius:6px"></div>
<div class="a" style="left:707.0px;top:420px;width:48px;height:25px;background:#0a4e71;border-radius:3px;box-shadow:inset 0 0 0 1px #1a76a6"></div>
<div class="a t" style="left:707.0px;top:421.5px;width:48px;height:25px;line-height:25px;font-size:14px;font-weight:bold;color:#eaf2f6">IN</div>
<svg class="a" style="left:720.0px;top:474px;" width="26" height="27" viewBox="0 0 26 27"><path d="M5.2 3.2L17.6 9.7L5.2 16Z" fill="#17a2ea"/><path d="M1.6 10H19.3" stroke="#17a2ea" stroke-width="1.8" stroke-linecap="round"/><path d="M7.6 13.8L19 18.3L7.6 24.6Z" fill="#17a2ea"/><path d="M4.8 18.3H22.7" stroke="#17a2ea" stroke-width="1.8" stroke-linecap="round"/></svg>
<div class="a" style="left:655.0px;top:614px;width:155.5px;height:35px;background:#595959"></div>
<div class="a t" style="left:655.0px;top:621px;width:155px;height:22px;line-height:22px;font-size:15px;font-weight:bold;color:#f2f2f2">UTILITY</div>
<div class="a" style="left:655.0px;top:649px;width:155.5px;height:1px;background:#3a3a3a"></div>
<div class="a" style="left:655.0px;top:650px;width:155.5px;height:34px;background:#595959"></div>
<div class="a t" style="left:655.0px;top:656px;width:155px;height:22px;line-height:22px;font-size:15px;font-weight:bold;color:#f2f2f2">MASTER TAPE</div>
<div class="a" style="left:655.0px;top:684px;width:155.5px;height:24px;background:#2e2e2e"></div>
<div class="a" style="left:665.0px;top:695px;width:135px;height:16px;background:#262626;border:2px solid #0e0e0e;border-radius:6px;box-shadow:inset 0 0 0 2px #333"></div>
<div class="a" style="left:655.0px;top:715.5px;width:155.5px;height:451.5px;background:linear-gradient(#bdbdbd,#a4a4a4 30%,#969696 65%,#868686);box-shadow:inset 1.5px 0 0 #b4b4b4,inset 3px 0 0 #8f8f8f,inset -1.5px 0 0 #808080"></div>
<div class="a" style="left:810.3px;top:715.5px;width:2.7px;height:452px;background:#0d0d0d"></div>
<div class="a" style="left:666.0px;top:724px;width:135px;height:43px;background:#9c9c9c;border-radius:8px;box-shadow:0 0 0 1px #b0b0b0"></div>
<div class="a" style="left:668.0px;top:726px;width:131px;height:39px;background:linear-gradient(#1c1c1c,#111);border:2px solid #050505;border-radius:6px"></div>
<div class="a t" style="left:668.0px;top:734px;width:131px;height:22px;line-height:22px;font-size:15px;font-weight:bold;color:#7ddf55">READ</div>
<svg class="a" style="left:779.0px;top:745px;" width="14" height="14" viewBox="0 0 14 14"><path d="M1 13L13 1V13Z" fill="#b4c6d0"/></svg>
<svg class="a" style="left:664.3px;top:770.7px;" width="70" height="70" viewBox="0 0 70 70"><circle cx="35.00" cy="5.00" r="2.3" fill="#111"/><circle cx="56.21" cy="13.79" r="2.3" fill="#111"/><circle cx="65.00" cy="35.00" r="2.3" fill="#111"/><circle cx="56.21" cy="56.21" r="2.3" fill="#111"/><circle cx="13.79" cy="13.79" r="2.3" fill="#111"/><circle cx="5.00" cy="35.00" r="2.3" fill="#111"/><circle cx="13.79" cy="56.21" r="2.3" fill="#111"/><ellipse cx="41" cy="43" rx="25" ry="24" fill="#000" opacity="0.18"/><circle cx="35" cy="35" r="25" fill="#141312"/><circle cx="35" cy="35" r="23.5" fill="url(#pk)"/><circle cx="35" cy="35" r="19" fill="none" stroke="#55524e" stroke-width="0.8" opacity="0.6"/><line x1="31.46" y1="38.54" x2="19.44" y2="50.56" stroke="#ece8dc" stroke-width="3.5"/></svg>
<svg class="a" style="left:733.3px;top:770.7px;" width="70" height="70" viewBox="0 0 70 70"><circle cx="35.00" cy="5.00" r="2.3" fill="#111"/><circle cx="56.21" cy="13.79" r="2.3" fill="#111"/><circle cx="65.00" cy="35.00" r="2.3" fill="#111"/><circle cx="56.21" cy="56.21" r="2.3" fill="#111"/><circle cx="13.79" cy="13.79" r="2.3" fill="#111"/><circle cx="5.00" cy="35.00" r="2.3" fill="#111"/><circle cx="13.79" cy="56.21" r="2.3" fill="#111"/><ellipse cx="41" cy="43" rx="25" ry="24" fill="#000" opacity="0.18"/><circle cx="35" cy="35" r="25" fill="#141312"/><circle cx="35" cy="35" r="23.5" fill="url(#pk)"/><circle cx="35" cy="35" r="19" fill="none" stroke="#55524e" stroke-width="0.8" opacity="0.6"/><line x1="38.54" y1="38.54" x2="50.56" y2="50.56" stroke="#ece8dc" stroke-width="3.5"/></svg>
<div class="a t" style="left:667.0px;top:828px;width:12px;height:16px;line-height:16px;font-size:12px;font-weight:bold;color:#111">L</div>
<div class="a t" style="left:718.5px;top:828px;width:12px;height:16px;line-height:16px;font-size:12px;font-weight:bold;color:#111">R</div>
<div class="a t" style="left:736.0px;top:828px;width:12px;height:16px;line-height:16px;font-size:12px;font-weight:bold;color:#111">L</div>
<div class="a t" style="left:788.5px;top:828px;width:12px;height:16px;line-height:16px;font-size:12px;font-weight:bold;color:#111">R</div>
<div class="a" style="left:677.0px;top:855px;width:50px;height:29px;background:#c7cdd0;border:2px solid #111;border-radius:4px;box-shadow:inset 0 2px 0 #a0a6a9,inset 0 -2px 0 #a0a6a9"></div>
<div class="a t" style="left:677.0px;top:855px;width:50px;height:29px;line-height:29px;font-size:14px;letter-spacing:-0.4px;font-weight:bold;color:#111">SPILL</div>
<div class="a" style="left:737.0px;top:853px;width:54px;height:31px;background:#0b0b0b;border-radius:5px;box-shadow:0 0 0 2px #8a8a8a"></div>
<div class="a" style="left:739.0px;top:855px;width:50px;height:27px;background:linear-gradient(#262626,#151515);border-radius:3px"></div>
<div class="a t" style="left:739.0px;top:855px;width:50px;height:27px;line-height:27px;font-size:13.5px;font-weight:bold;color:#9fb0b8">ARM</div>
<div class="a" style="left:677.0px;top:896px;width:50px;height:29px;background:#c7cdd0;border:2px solid #111;border-radius:4px;box-shadow:inset 0 2px 0 #a0a6a9,inset 0 -2px 0 #a0a6a9"></div>
<div class="a t" style="left:677.0px;top:896px;width:50px;height:29px;line-height:29px;font-size:15px;font-weight:bold;color:#111">S</div>
<div class="a" style="left:739.0px;top:896px;width:50px;height:29px;background:#c7cdd0;border:2px solid #111;border-radius:4px;box-shadow:inset 0 2px 0 #a0a6a9,inset 0 -2px 0 #a0a6a9"></div>
<div class="a t" style="left:739.0px;top:896px;width:50px;height:29px;line-height:29px;font-size:15px;font-weight:bold;color:#111">M</div>
<div class="a" style="left:693.3px;top:980px;width:7.4px;height:137px;background:#0c0c0c;border-radius:4px"></div>
<div class="a t" style="left:711.0px;top:983.7px;width:28px;height:18px;line-height:18px;font-size:14px;color:#111">10</div>
<div class="a t" style="left:711.0px;top:1027.6px;width:28px;height:18px;line-height:18px;font-size:14px;color:#111">0</div>
<div class="a t" style="left:711.0px;top:1056.3px;width:28px;height:18px;line-height:18px;font-size:14px;color:#111">10</div>
<div class="a t" style="left:711.0px;top:1088.6px;width:28px;height:18px;line-height:18px;font-size:14px;color:#111">30</div>
<div class="a t" style="left:710.0px;top:1105px;width:28px;height:18px;line-height:18px;font-size:17px;font-weight:bold;color:#111">&#8734;</div>
<div class="a" style="left:694.5px;top:1121.5px;width:2px;height:14.5px;background:#111"></div>
<div class="a" style="left:694.5px;top:1134px;width:40px;height:2px;background:#111"></div>
<svg class="a" style="left:679.5px;top:1020.5px;" width="40" height="82" viewBox="0 0 40 82"><path d="M3 4H38L35 13Q36 44 37 66L35 73L38 81H3L6 73L4 66Q5 44 6 13Z" fill="#000" opacity="0.16"/><path d="M0 0H35L32.5 8.5Q33.5 40 34.5 62L32.5 69L35 77H0L2.5 69L0.5 62Q1.5 40 2.5 8.5Z" fill="url(#fc)" stroke="#707070" stroke-width="0.8"/><path d="M0 0H35L32.5 8.5Q33.5 40 34.5 62L32.5 69L35 77H0L2.5 69L0.5 62Q1.5 40 2.5 8.5Z" fill="url(#fcx)"/><rect x="2" y="37.5" width="31" height="2.4" fill="#111"/></svg>
<div class="a" style="left:739.0px;top:940px;width:56px;height:209px;background:#2a2a2a;border-radius:7px;box-shadow:0 0 0 1px #9a9a9a"></div>
<div class="a" style="left:741.0px;top:942px;width:52px;height:205px;background:linear-gradient(90deg,#1c1c1c,#262626 50%,#1e1e1e);border:2px solid #0b0b0b;border-radius:6px"></div>
<svg class="a" style="left:739.0px;top:940px;" width="56" height="209" viewBox="0 0 56 209"><rect x="9" y="9" width="12" height="126" rx="3" fill="#0e0e0e"/><rect x="10" y="10" width="5" height="124" fill="#23261a"/><rect x="10" y="10" width="5" height="8" fill="#2e1a14"/><rect x="10" y="52.7" width="5" height="81.3" fill="url(#bg)"/><rect x="10" y="44.6" width="5" height="2" fill="#f5b020"/><rect x="15.5" y="10" width="5" height="124" fill="#23261a"/><rect x="15.5" y="10" width="5" height="8" fill="#2e1a14"/><rect x="15.5" y="53.5" width="5" height="80.5" fill="url(#bg)"/><rect x="15.5" y="18" width="5" height="2" fill="#f5b020"/><rect x="10" y="10" width="5" height="6" fill="#ff3020"/><rect x="10" y="16" width="5" height="1.5" fill="#ffb020"/><rect x="23" y="17.3" width="4" height="1.5" fill="#8a9296"/><text x="39.5" y="23" font-size="14" font-family="Liberation Sans" fill="#8c9498" text-anchor="middle">0</text><rect x="23" y="47.8" width="4" height="1.5" fill="#8a9296"/><text x="39.5" y="53.5" font-size="14" font-family="Liberation Sans" fill="#8c9498" text-anchor="middle">9</text><rect x="23" y="80.8" width="4" height="1.5" fill="#8a9296"/><text x="39.5" y="86.5" font-size="14" font-family="Liberation Sans" fill="#8c9498" text-anchor="middle">18</text><rect x="23" y="107.3" width="4" height="1.5" fill="#8a9296"/><text x="39.5" y="113" font-size="14" font-family="Liberation Sans" fill="#8c9498" text-anchor="middle">32</text><rect x="23" y="133.70000000000002" width="4" height="1.5" fill="#8a9296"/><text x="39.5" y="139.4" font-size="14" font-family="Liberation Sans" fill="#8c9498" text-anchor="middle">60</text><rect x="23" y="33.3" width="1.5" height="1.5" fill="#8a9296"/><rect x="23" y="64.3" width="1.5" height="1.5" fill="#8a9296"/><rect x="23" y="94.3" width="1.5" height="1.5" fill="#8a9296"/><rect x="23" y="120.8" width="1.5" height="1.5" fill="#8a9296"/></svg>
<div class="a" style="left:747.0px;top:1085px;width:40px;height:28px;background:#2b2d2f;border-radius:3px;box-shadow:inset 0 0 0 1px #323436"></div>
<svg class="a" style="left:756.0px;top:1089px;" width="22" height="22" viewBox="0 0 22 22"><circle cx="11" cy="11" r="7.2" fill="none" stroke="#a5adb2" stroke-width="1.6"/><line x1="4" y1="18.5" x2="18" y2="3.5" stroke="#a5adb2" stroke-width="1.6"/></svg>
<div class="a t" style="left:739.0px;top:1120px;width:56px;height:20px;line-height:20px;font-size:15px;font-weight:bold;color:#c9cbcd">-7.2</div>
<div class="a" style="left:655.0px;top:1169.5px;width:155.5px;height:32.5px;background:#ff9a3c"></div>
<div class="a t" style="left:655.0px;top:1175px;width:155px;height:22px;line-height:22px;font-size:16.4px;font-weight:bold;color:#111">ALL CHORUS</div>
<div class="a" style="left:655.0px;top:1204px;width:155.5px;height:11.5px;background:#ff9a3c"></div>
<div class="a" style="left:810.3px;top:1167px;width:2.7px;height:49px;background:#0d0d0d"></div>
<div class="a" style="left:813.3px;top:78px;width:155.0px;height:6.5px;background:#6a78ff"></div>
<div class="a" style="left:812.8px;top:87px;width:155.5px;height:34px;background:#5a5a5a"></div>
<div class="a t" style="left:812.8px;top:94px;width:155px;height:20px;line-height:20px;font-size:15px;font-weight:bold;color:#f2f2f2">INPUT</div>
<div class="a" style="left:812.8px;top:121px;width:155.5px;height:493px;background:#2e2e2e"></div>
<div class="a" style="left:968.3px;top:87px;width:2.3px;height:34px;background:#444"></div>
<div class="a" style="left:967.8px;top:130px;width:4px;height:476px;background:#4d5458;border-radius:2px"></div>
<div class="a" style="left:968.3px;top:614px;width:2.3px;height:70px;background:#444"></div>
<div class="a" style="left:818.8px;top:129px;width:144px;height:387px;background:#232323;border:3px solid #131313;border-radius:8px;box-shadow:inset 0 0 0 1px #2c2c2c"></div>
<div class="a" style="left:822.8px;top:133px;width:135px;height:75px;background:#1a1a1a;border:2px solid #0c0c0c;border-radius:4px"></div>
<div class="a t" style="left:822.8px;top:141px;width:135px;height:20px;line-height:20px;font-size:14px;color:#838b90">SUMMING</div>
<div class="a" style="left:828.8px;top:166px;width:124px;height:33px;background:linear-gradient(#61686d,#3f464a);border-radius:5px;box-shadow:0 0 0 1px #151515"></div>
<div class="a t" style="left:828.8px;top:171px;width:124px;height:22px;line-height:22px;font-size:15px;font-weight:bold;color:#e6e9eb">API Summing</div>
<div class="a" style="left:820.8px;top:217px;width:140px;height:67px;background:#111"></div>
<svg class="a" style="left:821.8px;top:218px;" width="138" height="65" viewBox="0 0 138 65"><rect width="138" height="65" fill="url(#vug)"/><ellipse cx="18" cy="60" rx="22" ry="12" fill="url(#vuy)"/><ellipse cx="120" cy="60" rx="22" ry="12" fill="url(#vuy)"/><rect width="138" height="65" fill="none" stroke="#e88a20" stroke-width="1.5" opacity="0.7"/><path d="M22.35 40.33A106.6 106.6 0 0 1 94.54 32.87" fill="none" stroke="#23232e" stroke-width="2.8"/><path d="M94.66 32.38A107.1 107.1 0 0 1 115.36 39.88" fill="none" stroke="#d8202a" stroke-width="3.8"/><line x1="32.82" y1="35.94" x2="29.78" y2="27.47" stroke="#2a2a36" stroke-width="1.3"/><line x1="43.14" y1="32.82" x2="40.98" y2="24.09" stroke="#2a2a36" stroke-width="1.3"/><line x1="47.86" y1="31.77" x2="46.10" y2="22.94" stroke="#2a2a36" stroke-width="1.3"/><line x1="52.44" y1="30.95" x2="51.06" y2="22.06" stroke="#2a2a36" stroke-width="1.3"/><line x1="58.90" y1="30.16" x2="58.07" y2="21.19" stroke="#2a2a36" stroke-width="1.3"/><line x1="66.70" y1="29.72" x2="66.53" y2="20.72" stroke="#2a2a36" stroke-width="1.3"/><line x1="75.07" y1="29.89" x2="75.61" y2="20.90" stroke="#2a2a36" stroke-width="1.3"/><line x1="83.77" y1="30.76" x2="85.04" y2="21.85" stroke="#2a2a36" stroke-width="1.3"/><line x1="94.36" y1="32.82" x2="96.76" y2="23.11" stroke="#2a2a36" stroke-width="1.3"/><line x1="101.69" y1="34.92" x2="104.47" y2="26.36" stroke="#d8202a" stroke-width="1.3"/><line x1="109.03" y1="37.60" x2="112.43" y2="29.27" stroke="#d8202a" stroke-width="1.3"/><line x1="22.35" y1="40.33" x2="15.35" y2="32.83" stroke="#23232e" stroke-width="1.5"/><line x1="115.36" y1="39.88" x2="122.36" y2="31.88" stroke="#d8202a" stroke-width="1.5"/><text x="12" y="29.5" font-size="10" font-family="Liberation Sans" font-weight="bold" fill="#3a3a4a" text-anchor="middle">20</text><text x="49.7" y="19" font-size="10" font-family="Liberation Sans" font-weight="bold" fill="#3a3a4a" text-anchor="middle">5</text><text x="99" y="19" font-size="10" font-family="Liberation Sans" font-weight="bold" fill="#3a3a4a" text-anchor="middle">0</text><text x="124" y="29.5" font-size="10" font-family="Liberation Sans" font-weight="bold" fill="#d8202a" text-anchor="middle">3</text><rect x="4" y="37.5" width="6" height="1.6" fill="#3a3a4a"/><path d="M125.5 38h7M129 34.5v7" stroke="#d8202a" stroke-width="1.6"/><line x1="53.2" y1="64.4" x2="31" y2="21.2" stroke="#1a1a1a" stroke-width="1.6"/></svg>
<svg class="a" style="left:822.8px;top:298px;" width="64" height="64" viewBox="0 0 64 64"><circle cx="43.08" cy="6.28" r="2.1" fill="#f4f4f4"/><circle cx="20.92" cy="6.28" r="2.1" fill="#f4f4f4"/><circle cx="52.87" cy="13.34" r="2.1" fill="#f4f4f4"/><circle cx="11.13" cy="13.34" r="2.1" fill="#f4f4f4"/><circle cx="58.72" cy="23.63" r="2.1" fill="#f4f4f4"/><circle cx="5.28" cy="23.63" r="2.1" fill="#f4f4f4"/><circle cx="59.80" cy="35.36" r="2.1" fill="#f4f4f4"/><circle cx="4.20" cy="35.36" r="2.1" fill="#f4f4f4"/><circle cx="55.64" cy="47.00" r="2.1" fill="#f4f4f4"/><circle cx="8.36" cy="47.00" r="2.1" fill="#f4f4f4"/><circle cx="47.25" cy="55.48" r="2.1" fill="#f4f4f4"/><circle cx="16.75" cy="55.48" r="2.1" fill="#f4f4f4"/><circle cx="33" cy="34" r="22" fill="#1a1a1a" opacity="0.6"/><path d="M32.00 0.70L33.61 1.25L35.08 2.73L36.31 4.79L37.32 6.98L38.17 8.98L38.94 10.65L39.68 11.98L40.43 13.07L41.17 14.01L41.90 14.86L42.61 15.67L43.30 16.44L43.99 17.20L44.67 17.93L45.36 18.64L46.07 19.33L46.80 20.01L47.55 20.70L48.32 21.40L49.10 22.12L49.89 22.89L50.66 23.69L51.40 24.55L52.09 25.47L52.72 26.45L53.26 27.48L53.70 28.56L54.03 29.68L54.23 30.83L54.30 32.00L54.23 33.17L54.03 34.32L53.70 35.44L53.26 36.52L52.72 37.55L52.09 38.53L51.40 39.45L50.66 40.31L49.89 41.11L49.10 41.88L48.32 42.60L47.55 43.30L46.80 43.99L46.07 44.67L45.36 45.36L44.67 46.07L43.99 46.80L43.30 47.55L42.60 48.32L41.88 49.10L41.11 49.89L40.31 50.66L39.45 51.40L38.53 52.09L37.55 52.72L36.52 53.26L35.44 53.70L34.32 54.03L33.17 54.23L32.00 54.30L30.83 54.23L29.68 54.03L28.56 53.70L27.48 53.26L26.45 52.72L25.47 52.09L24.55 51.40L23.69 50.66L22.89 49.89L22.13 49.10L21.40 48.32L20.70 47.55L20.01 46.80L19.33 46.07L18.64 45.36L17.93 44.67L17.20 43.99L16.45 43.30L15.68 42.60L14.90 41.88L14.11 41.11L13.34 40.31L12.60 39.45L11.91 38.53L11.28 37.55L10.74 36.52L10.30 35.44L9.97 34.32L9.77 33.17L9.70 32.00L9.77 30.83L9.97 29.68L10.30 28.56L10.74 27.48L11.28 26.45L11.91 25.47L12.60 24.55L13.34 23.69L14.11 22.89L14.90 22.12L15.68 21.40L16.45 20.70L17.20 20.01L17.93 19.33L18.64 18.64L19.33 17.93L20.01 17.20L20.70 16.44L21.39 15.67L22.10 14.86L22.83 14.01L23.57 13.07L24.32 11.98L25.06 10.65L25.83 8.98L26.68 6.98L27.69 4.79L28.92 2.73L30.39 1.25Z" fill="url(#kb)" stroke="#0a3f70" stroke-width="0.8"/><circle cx="32" cy="32" r="16.4" fill="#0c3f6e"/><circle cx="32" cy="32" r="15.4" fill="url(#kg)"/></svg>
<svg class="a" style="left:891.8px;top:298px;" width="64" height="64" viewBox="0 0 64 64"><circle cx="43.08" cy="6.28" r="2.1" fill="#f4f4f4"/><circle cx="20.92" cy="6.28" r="2.1" fill="#f4f4f4"/><circle cx="52.87" cy="13.34" r="2.1" fill="#f4f4f4"/><circle cx="11.13" cy="13.34" r="2.1" fill="#f4f4f4"/><circle cx="58.72" cy="23.63" r="2.1" fill="#f4f4f4"/><circle cx="5.28" cy="23.63" r="2.1" fill="#f4f4f4"/><circle cx="59.80" cy="35.36" r="2.1" fill="#f4f4f4"/><circle cx="4.20" cy="35.36" r="2.1" fill="#f4f4f4"/><circle cx="55.64" cy="47.00" r="2.1" fill="#f4f4f4"/><circle cx="8.36" cy="47.00" r="2.1" fill="#f4f4f4"/><circle cx="47.25" cy="55.48" r="2.1" fill="#f4f4f4"/><circle cx="16.75" cy="55.48" r="2.1" fill="#f4f4f4"/><circle cx="33" cy="34" r="22" fill="#1a1a1a" opacity="0.6"/><path d="M32.00 0.70L33.61 1.25L35.08 2.73L36.31 4.79L37.32 6.98L38.17 8.98L38.94 10.65L39.68 11.98L40.43 13.07L41.17 14.01L41.90 14.86L42.61 15.67L43.30 16.44L43.99 17.20L44.67 17.93L45.36 18.64L46.07 19.33L46.80 20.01L47.55 20.70L48.32 21.40L49.10 22.12L49.89 22.89L50.66 23.69L51.40 24.55L52.09 25.47L52.72 26.45L53.26 27.48L53.70 28.56L54.03 29.68L54.23 30.83L54.30 32.00L54.23 33.17L54.03 34.32L53.70 35.44L53.26 36.52L52.72 37.55L52.09 38.53L51.40 39.45L50.66 40.31L49.89 41.11L49.10 41.88L48.32 42.60L47.55 43.30L46.80 43.99L46.07 44.67L45.36 45.36L44.67 46.07L43.99 46.80L43.30 47.55L42.60 48.32L41.88 49.10L41.11 49.89L40.31 50.66L39.45 51.40L38.53 52.09L37.55 52.72L36.52 53.26L35.44 53.70L34.32 54.03L33.17 54.23L32.00 54.30L30.83 54.23L29.68 54.03L28.56 53.70L27.48 53.26L26.45 52.72L25.47 52.09L24.55 51.40L23.69 50.66L22.89 49.89L22.13 49.10L21.40 48.32L20.70 47.55L20.01 46.80L19.33 46.07L18.64 45.36L17.93 44.67L17.20 43.99L16.45 43.30L15.68 42.60L14.90 41.88L14.11 41.11L13.34 40.31L12.60 39.45L11.91 38.53L11.28 37.55L10.74 36.52L10.30 35.44L9.97 34.32L9.77 33.17L9.70 32.00L9.77 30.83L9.97 29.68L10.30 28.56L10.74 27.48L11.28 26.45L11.91 25.47L12.60 24.55L13.34 23.69L14.11 22.89L14.90 22.12L15.68 21.40L16.45 20.70L17.20 20.01L17.93 19.33L18.64 18.64L19.33 17.93L20.01 17.20L20.70 16.44L21.39 15.67L22.10 14.86L22.83 14.01L23.57 13.07L24.32 11.98L25.06 10.65L25.83 8.98L26.68 6.98L27.69 4.79L28.92 2.73L30.39 1.25Z" fill="url(#kb)" stroke="#0a3f70" stroke-width="0.8"/><circle cx="32" cy="32" r="16.4" fill="#0c3f6e"/><circle cx="32" cy="32" r="15.4" fill="url(#kg)"/></svg>
<div class="a t" style="left:837.8px;top:361px;width:40px;height:18px;line-height:18px;font-size:13px;color:#e8e8e8">HR</div>
<div class="a t" style="left:903.8px;top:361px;width:40px;height:18px;line-height:18px;font-size:13px;color:#e8e8e8">TRIM</div>
<div class="a" style="left:860.8px;top:416px;width:56px;height:33px;background:#0c0c0c;border-radius:6px"></div>
<div class="a" style="left:864.8px;top:420px;width:48px;height:25px;background:#0a4e71;border-radius:3px;box-shadow:inset 0 0 0 1px #1a76a6"></div>
<div class="a t" style="left:864.8px;top:421.5px;width:48px;height:25px;line-height:25px;font-size:14px;font-weight:bold;color:#eaf2f6">IN</div>
<svg class="a" style="left:877.8px;top:474px;" width="26" height="27" viewBox="0 0 26 27"><path d="M5.2 3.2L17.6 9.7L5.2 16Z" fill="#17a2ea"/><path d="M1.6 10H19.3" stroke="#17a2ea" stroke-width="1.8" stroke-linecap="round"/><path d="M7.6 13.8L19 18.3L7.6 24.6Z" fill="#17a2ea"/><path d="M4.8 18.3H22.7" stroke="#17a2ea" stroke-width="1.8" stroke-linecap="round"/></svg>
<div class="a" style="left:812.8px;top:614px;width:155.5px;height:35px;background:#595959"></div>
<div class="a t" style="left:812.8px;top:621px;width:155px;height:22px;line-height:22px;font-size:15px;font-weight:bold;color:#f2f2f2">UTILITY</div>
<div class="a" style="left:812.8px;top:649px;width:155.5px;height:1px;background:#3a3a3a"></div>
<div class="a" style="left:812.8px;top:650px;width:155.5px;height:34px;background:#595959"></div>
<div class="a t" style="left:812.8px;top:656px;width:155px;height:22px;line-height:22px;font-size:15px;font-weight:bold;color:#f2f2f2">MASTER TAPE</div>
<div class="a" style="left:812.8px;top:684px;width:155.5px;height:24px;background:#2e2e2e"></div>
<div class="a" style="left:822.8px;top:695px;width:135px;height:16px;background:#262626;border:2px solid #0e0e0e;border-radius:6px;box-shadow:inset 0 0 0 2px #333"></div>
<div class="a" style="left:812.8px;top:715.5px;width:155.5px;height:451.5px;background:linear-gradient(#bdbdbd,#a4a4a4 30%,#969696 65%,#868686);box-shadow:inset 1.5px 0 0 #b4b4b4,inset 3px 0 0 #8f8f8f,inset -1.5px 0 0 #808080"></div>
<div class="a" style="left:968.0999999999999px;top:715.5px;width:2.7px;height:452px;background:#0d0d0d"></div>
<div class="a" style="left:823.8px;top:724px;width:135px;height:43px;background:#9c9c9c;border-radius:8px;box-shadow:0 0 0 1px #b0b0b0"></div>
<div class="a" style="left:825.8px;top:726px;width:131px;height:39px;background:linear-gradient(#1c1c1c,#111);border:2px solid #050505;border-radius:6px"></div>
<div class="a t" style="left:825.8px;top:734px;width:131px;height:22px;line-height:22px;font-size:15px;font-weight:bold;color:#7ddf55">READ</div>
<svg class="a" style="left:936.8px;top:745px;" width="14" height="14" viewBox="0 0 14 14"><path d="M1 13L13 1V13Z" fill="#b4c6d0"/></svg>
<svg class="a" style="left:855.8px;top:770.7px;" width="70" height="70" viewBox="0 0 70 70"><circle cx="35.00" cy="5.00" r="2.3" fill="#111"/><circle cx="56.21" cy="13.79" r="2.3" fill="#111"/><circle cx="65.00" cy="35.00" r="2.3" fill="#111"/><circle cx="56.21" cy="56.21" r="2.3" fill="#111"/><circle cx="13.79" cy="13.79" r="2.3" fill="#111"/><circle cx="5.00" cy="35.00" r="2.3" fill="#111"/><circle cx="13.79" cy="56.21" r="2.3" fill="#111"/><ellipse cx="41" cy="43" rx="25" ry="24" fill="#000" opacity="0.18"/><circle cx="35" cy="35" r="25" fill="#141312"/><circle cx="35" cy="35" r="23.5" fill="url(#pk)"/><circle cx="35" cy="35" r="19" fill="none" stroke="#55524e" stroke-width="0.8" opacity="0.6"/><line x1="35.00" y1="30.00" x2="35.00" y2="13.00" stroke="#ece8dc" stroke-width="3.5"/></svg>
<div class="a t" style="left:858.8px;top:828px;width:12px;height:16px;line-height:16px;font-size:12px;font-weight:bold;color:#111">L</div>
<div class="a t" style="left:910.8px;top:828px;width:12px;height:16px;line-height:16px;font-size:12px;font-weight:bold;color:#111">R</div>
<div class="a" style="left:834.8px;top:855px;width:50px;height:29px;background:#c7cdd0;border:2px solid #111;border-radius:4px;box-shadow:inset 0 2px 0 #a0a6a9,inset 0 -2px 0 #a0a6a9"></div>
<div class="a t" style="left:834.8px;top:855px;width:50px;height:29px;line-height:29px;font-size:14px;letter-spacing:-0.4px;font-weight:bold;color:#111">SPILL</div>
<div class="a" style="left:834.8px;top:896px;width:50px;height:29px;background:#c7cdd0;border:2px solid #111;border-radius:4px;box-shadow:inset 0 2px 0 #a0a6a9,inset 0 -2px 0 #a0a6a9"></div>
<div class="a t" style="left:834.8px;top:896px;width:50px;height:29px;line-height:29px;font-size:15px;font-weight:bold;color:#111">S</div>
<div class="a" style="left:896.8px;top:896px;width:50px;height:29px;background:#c7cdd0;border:2px solid #111;border-radius:4px;box-shadow:inset 0 2px 0 #a0a6a9,inset 0 -2px 0 #a0a6a9"></div>
<div class="a t" style="left:896.8px;top:896px;width:50px;height:29px;line-height:29px;font-size:15px;font-weight:bold;color:#111">M</div>
<div class="a" style="left:851.0999999999999px;top:980px;width:7.4px;height:137px;background:#0c0c0c;border-radius:4px"></div>
<div class="a t" style="left:868.8px;top:983.7px;width:28px;height:18px;line-height:18px;font-size:14px;color:#111">10</div>
<div class="a t" style="left:868.8px;top:1027.6px;width:28px;height:18px;line-height:18px;font-size:14px;color:#111">0</div>
<div class="a t" style="left:868.8px;top:1056.3px;width:28px;height:18px;line-height:18px;font-size:14px;color:#111">10</div>
<div class="a t" style="left:868.8px;top:1088.6px;width:28px;height:18px;line-height:18px;font-size:14px;color:#111">30</div>
<div class="a t" style="left:867.8px;top:1105px;width:28px;height:18px;line-height:18px;font-size:17px;font-weight:bold;color:#111">&#8734;</div>
<div class="a" style="left:852.3px;top:1121.5px;width:2px;height:14.5px;background:#111"></div>
<div class="a" style="left:852.3px;top:1134px;width:40px;height:2px;background:#111"></div>
<svg class="a" style="left:837.3px;top:999px;" width="40" height="82" viewBox="0 0 40 82"><path d="M3 4H38L35 13Q36 44 37 66L35 73L38 81H3L6 73L4 66Q5 44 6 13Z" fill="#000" opacity="0.16"/><path d="M0 0H35L32.5 8.5Q33.5 40 34.5 62L32.5 69L35 77H0L2.5 69L0.5 62Q1.5 40 2.5 8.5Z" fill="url(#fc)" stroke="#707070" stroke-width="0.8"/><path d="M0 0H35L32.5 8.5Q33.5 40 34.5 62L32.5 69L35 77H0L2.5 69L0.5 62Q1.5 40 2.5 8.5Z" fill="url(#fcx)"/><rect x="2" y="37.5" width="31" height="2.4" fill="#111"/></svg>
<div class="a" style="left:896.8px;top:940px;width:56px;height:209px;background:#2a2a2a;border-radius:7px;box-shadow:0 0 0 1px #9a9a9a"></div>
<div class="a" style="left:898.8px;top:942px;width:52px;height:205px;background:linear-gradient(90deg,#1c1c1c,#262626 50%,#1e1e1e);border:2px solid #0b0b0b;border-radius:6px"></div>
<svg class="a" style="left:896.8px;top:940px;" width="56" height="209" viewBox="0 0 56 209"><rect x="9" y="9" width="12" height="126" rx="3" fill="#0e0e0e"/><rect x="10" y="10" width="10" height="124" fill="#23261a"/><rect x="10" y="10" width="10" height="8" fill="#2e1a14"/><rect x="10" y="52" width="10" height="82" fill="url(#bg)"/><rect x="10" y="43" width="10" height="8" fill="#f5c020"/><rect x="10" y="33" width="10" height="2" fill="#f5b020"/><rect x="23" y="17.3" width="4" height="1.5" fill="#8a9296"/><text x="39.5" y="23" font-size="14" font-family="Liberation Sans" fill="#8c9498" text-anchor="middle">0</text><rect x="23" y="47.8" width="4" height="1.5" fill="#8a9296"/><text x="39.5" y="53.5" font-size="14" font-family="Liberation Sans" fill="#8c9498" text-anchor="middle">9</text><rect x="23" y="80.8" width="4" height="1.5" fill="#8a9296"/><text x="39.5" y="86.5" font-size="14" font-family="Liberation Sans" fill="#8c9498" text-anchor="middle">18</text><rect x="23" y="107.3" width="4" height="1.5" fill="#8a9296"/><text x="39.5" y="113" font-size="14" font-family="Liberation Sans" fill="#8c9498" text-anchor="middle">32</text><rect x="23" y="133.70000000000002" width="4" height="1.5" fill="#8a9296"/><text x="39.5" y="139.4" font-size="14" font-family="Liberation Sans" fill="#8c9498" text-anchor="middle">60</text><rect x="23" y="33.3" width="1.5" height="1.5" fill="#8a9296"/><rect x="23" y="64.3" width="1.5" height="1.5" fill="#8a9296"/><rect x="23" y="94.3" width="1.5" height="1.5" fill="#8a9296"/><rect x="23" y="120.8" width="1.5" height="1.5" fill="#8a9296"/></svg>
<div class="a" style="left:904.8px;top:1085px;width:40px;height:28px;background:#2b2d2f;border-radius:3px;box-shadow:inset 0 0 0 1px #323436"></div>
<svg class="a" style="left:913.8px;top:1089px;" width="22" height="22" viewBox="0 0 22 22"><circle cx="11" cy="11" r="7.2" fill="none" stroke="#a5adb2" stroke-width="1.6"/><line x1="4" y1="18.5" x2="18" y2="3.5" stroke="#a5adb2" stroke-width="1.6"/></svg>
<div class="a t" style="left:896.8px;top:1120px;width:56px;height:20px;line-height:20px;font-size:15px;font-weight:bold;color:#c9cbcd">-0.7</div>
<div class="a" style="left:812.8px;top:1169.5px;width:155.5px;height:32.5px;background:#6a78ff"></div>
<div class="a t" style="left:812.8px;top:1175px;width:155px;height:22px;line-height:22px;font-size:16.4px;font-weight:bold;color:#111">ALL BASS</div>
<div class="a" style="left:812.8px;top:1204px;width:155.5px;height:11.5px;background:#6a78ff"></div>
<div class="a" style="left:968.0999999999999px;top:1167px;width:2.7px;height:49px;background:#0d0d0d"></div>
<div class="a" style="left:971.1px;top:78px;width:155.0px;height:6.5px;background:#00f53c"></div>
<div class="a" style="left:970.6px;top:87px;width:155.5px;height:34px;background:#5a5a5a"></div>
<div class="a t" style="left:970.6px;top:94px;width:155px;height:20px;line-height:20px;font-size:15px;font-weight:bold;color:#f2f2f2">INPUT</div>
<div class="a" style="left:970.6px;top:121px;width:155.5px;height:493px;background:#2e2e2e"></div>
<div class="a" style="left:1126.1px;top:87px;width:2.3px;height:34px;background:#444"></div>
<div class="a" style="left:1125.6px;top:130px;width:4px;height:476px;background:#4d5458;border-radius:2px"></div>
<div class="a" style="left:1126.1px;top:614px;width:2.3px;height:70px;background:#444"></div>
<div class="a" style="left:976.6px;top:129px;width:144px;height:387px;background:#232323;border:3px solid #131313;border-radius:8px;box-shadow:inset 0 0 0 1px #2c2c2c"></div>
<div class="a" style="left:980.6px;top:133px;width:135px;height:75px;background:#1a1a1a;border:2px solid #0c0c0c;border-radius:4px"></div>
<div class="a t" style="left:980.6px;top:141px;width:135px;height:20px;line-height:20px;font-size:14px;color:#838b90">SUMMING</div>
<div class="a" style="left:986.6px;top:166px;width:124px;height:33px;background:linear-gradient(#61686d,#3f464a);border-radius:5px;box-shadow:0 0 0 1px #151515"></div>
<div class="a t" style="left:986.6px;top:171px;width:124px;height:22px;line-height:22px;font-size:15px;font-weight:bold;color:#e6e9eb">API Summing</div>
<div class="a" style="left:978.6px;top:217px;width:140px;height:67px;background:#111"></div>
<svg class="a" style="left:979.6px;top:218px;" width="138" height="65" viewBox="0 0 138 65"><rect width="138" height="65" fill="url(#vug)"/><ellipse cx="18" cy="60" rx="22" ry="12" fill="url(#vuy)"/><ellipse cx="120" cy="60" rx="22" ry="12" fill="url(#vuy)"/><rect width="138" height="65" fill="none" stroke="#e88a20" stroke-width="1.5" opacity="0.7"/><path d="M22.35 40.33A106.6 106.6 0 0 1 94.54 32.87" fill="none" stroke="#23232e" stroke-width="2.8"/><path d="M94.66 32.38A107.1 107.1 0 0 1 115.36 39.88" fill="none" stroke="#d8202a" stroke-width="3.8"/><line x1="32.82" y1="35.94" x2="29.78" y2="27.47" stroke="#2a2a36" stroke-width="1.3"/><line x1="43.14" y1="32.82" x2="40.98" y2="24.09" stroke="#2a2a36" stroke-width="1.3"/><line x1="47.86" y1="31.77" x2="46.10" y2="22.94" stroke="#2a2a36" stroke-width="1.3"/><line x1="52.44" y1="30.95" x2="51.06" y2="22.06" stroke="#2a2a36" stroke-width="1.3"/><line x1="58.90" y1="30.16" x2="58.07" y2="21.19" stroke="#2a2a36" stroke-width="1.3"/><line x1="66.70" y1="29.72" x2="66.53" y2="20.72" stroke="#2a2a36" stroke-width="1.3"/><line x1="75.07" y1="29.89" x2="75.61" y2="20.90" stroke="#2a2a36" stroke-width="1.3"/><line x1="83.77" y1="30.76" x2="85.04" y2="21.85" stroke="#2a2a36" stroke-width="1.3"/><line x1="94.36" y1="32.82" x2="96.76" y2="23.11" stroke="#2a2a36" stroke-width="1.3"/><line x1="101.69" y1="34.92" x2="104.47" y2="26.36" stroke="#d8202a" stroke-width="1.3"/><line x1="109.03" y1="37.60" x2="112.43" y2="29.27" stroke="#d8202a" stroke-width="1.3"/><line x1="22.35" y1="40.33" x2="15.35" y2="32.83" stroke="#23232e" stroke-width="1.5"/><line x1="115.36" y1="39.88" x2="122.36" y2="31.88" stroke="#d8202a" stroke-width="1.5"/><text x="12" y="29.5" font-size="10" font-family="Liberation Sans" font-weight="bold" fill="#3a3a4a" text-anchor="middle">20</text><text x="49.7" y="19" font-size="10" font-family="Liberation Sans" font-weight="bold" fill="#3a3a4a" text-anchor="middle">5</text><text x="99" y="19" font-size="10" font-family="Liberation Sans" font-weight="bold" fill="#3a3a4a" text-anchor="middle">0</text><text x="124" y="29.5" font-size="10" font-family="Liberation Sans" font-weight="bold" fill="#d8202a" text-anchor="middle">3</text><rect x="4" y="37.5" width="6" height="1.6" fill="#3a3a4a"/><path d="M125.5 38h7M129 34.5v7" stroke="#d8202a" stroke-width="1.6"/><line x1="41.2" y1="65" x2="13.6" y2="32.2" stroke="#1a1a1a" stroke-width="1.6"/></svg>
<svg class="a" style="left:980.6px;top:298px;" width="64" height="64" viewBox="0 0 64 64"><circle cx="43.08" cy="6.28" r="2.1" fill="#f4f4f4"/><circle cx="20.92" cy="6.28" r="2.1" fill="#f4f4f4"/><circle cx="52.87" cy="13.34" r="2.1" fill="#f4f4f4"/><circle cx="11.13" cy="13.34" r="2.1" fill="#f4f4f4"/><circle cx="58.72" cy="23.63" r="2.1" fill="#f4f4f4"/><circle cx="5.28" cy="23.63" r="2.1" fill="#f4f4f4"/><circle cx="59.80" cy="35.36" r="2.1" fill="#f4f4f4"/><circle cx="4.20" cy="35.36" r="2.1" fill="#f4f4f4"/><circle cx="55.64" cy="47.00" r="2.1" fill="#f4f4f4"/><circle cx="8.36" cy="47.00" r="2.1" fill="#f4f4f4"/><circle cx="47.25" cy="55.48" r="2.1" fill="#f4f4f4"/><circle cx="16.75" cy="55.48" r="2.1" fill="#f4f4f4"/><circle cx="33" cy="34" r="22" fill="#1a1a1a" opacity="0.6"/><path d="M32.00 0.70L33.61 1.25L35.08 2.73L36.31 4.79L37.32 6.98L38.17 8.98L38.94 10.65L39.68 11.98L40.43 13.07L41.17 14.01L41.90 14.86L42.61 15.67L43.30 16.44L43.99 17.20L44.67 17.93L45.36 18.64L46.07 19.33L46.80 20.01L47.55 20.70L48.32 21.40L49.10 22.12L49.89 22.89L50.66 23.69L51.40 24.55L52.09 25.47L52.72 26.45L53.26 27.48L53.70 28.56L54.03 29.68L54.23 30.83L54.30 32.00L54.23 33.17L54.03 34.32L53.70 35.44L53.26 36.52L52.72 37.55L52.09 38.53L51.40 39.45L50.66 40.31L49.89 41.11L49.10 41.88L48.32 42.60L47.55 43.30L46.80 43.99L46.07 44.67L45.36 45.36L44.67 46.07L43.99 46.80L43.30 47.55L42.60 48.32L41.88 49.10L41.11 49.89L40.31 50.66L39.45 51.40L38.53 52.09L37.55 52.72L36.52 53.26L35.44 53.70L34.32 54.03L33.17 54.23L32.00 54.30L30.83 54.23L29.68 54.03L28.56 53.70L27.48 53.26L26.45 52.72L25.47 52.09L24.55 51.40L23.69 50.66L22.89 49.89L22.13 49.10L21.40 48.32L20.70 47.55L20.01 46.80L19.33 46.07L18.64 45.36L17.93 44.67L17.20 43.99L16.45 43.30L15.68 42.60L14.90 41.88L14.11 41.11L13.34 40.31L12.60 39.45L11.91 38.53L11.28 37.55L10.74 36.52L10.30 35.44L9.97 34.32L9.77 33.17L9.70 32.00L9.77 30.83L9.97 29.68L10.30 28.56L10.74 27.48L11.28 26.45L11.91 25.47L12.60 24.55L13.34 23.69L14.11 22.89L14.90 22.12L15.68 21.40L16.45 20.70L17.20 20.01L17.93 19.33L18.64 18.64L19.33 17.93L20.01 17.20L20.70 16.44L21.39 15.67L22.10 14.86L22.83 14.01L23.57 13.07L24.32 11.98L25.06 10.65L25.83 8.98L26.68 6.98L27.69 4.79L28.92 2.73L30.39 1.25Z" fill="url(#kb)" stroke="#0a3f70" stroke-width="0.8"/><circle cx="32" cy="32" r="16.4" fill="#0c3f6e"/><circle cx="32" cy="32" r="15.4" fill="url(#kg)"/></svg>
<svg class="a" style="left:1049.6px;top:298px;" width="64" height="64" viewBox="0 0 64 64"><circle cx="43.08" cy="6.28" r="2.1" fill="#f4f4f4"/><circle cx="20.92" cy="6.28" r="2.1" fill="#f4f4f4"/><circle cx="52.87" cy="13.34" r="2.1" fill="#f4f4f4"/><circle cx="11.13" cy="13.34" r="2.1" fill="#f4f4f4"/><circle cx="58.72" cy="23.63" r="2.1" fill="#f4f4f4"/><circle cx="5.28" cy="23.63" r="2.1" fill="#f4f4f4"/><circle cx="59.80" cy="35.36" r="2.1" fill="#f4f4f4"/><circle cx="4.20" cy="35.36" r="2.1" fill="#f4f4f4"/><circle cx="55.64" cy="47.00" r="2.1" fill="#f4f4f4"/><circle cx="8.36" cy="47.00" r="2.1" fill="#f4f4f4"/><circle cx="47.25" cy="55.48" r="2.1" fill="#f4f4f4"/><circle cx="16.75" cy="55.48" r="2.1" fill="#f4f4f4"/><circle cx="33" cy="34" r="22" fill="#1a1a1a" opacity="0.6"/><path d="M32.00 0.70L33.61 1.25L35.08 2.73L36.31 4.79L37.32 6.98L38.17 8.98L38.94 10.65L39.68 11.98L40.43 13.07L41.17 14.01L41.90 14.86L42.61 15.67L43.30 16.44L43.99 17.20L44.67 17.93L45.36 18.64L46.07 19.33L46.80 20.01L47.55 20.70L48.32 21.40L49.10 22.12L49.89 22.89L50.66 23.69L51.40 24.55L52.09 25.47L52.72 26.45L53.26 27.48L53.70 28.56L54.03 29.68L54.23 30.83L54.30 32.00L54.23 33.17L54.03 34.32L53.70 35.44L53.26 36.52L52.72 37.55L52.09 38.53L51.40 39.45L50.66 40.31L49.89 41.11L49.10 41.88L48.32 42.60L47.55 43.30L46.80 43.99L46.07 44.67L45.36 45.36L44.67 46.07L43.99 46.80L43.30 47.55L42.60 48.32L41.88 49.10L41.11 49.89L40.31 50.66L39.45 51.40L38.53 52.09L37.55 52.72L36.52 53.26L35.44 53.70L34.32 54.03L33.17 54.23L32.00 54.30L30.83 54.23L29.68 54.03L28.56 53.70L27.48 53.26L26.45 52.72L25.47 52.09L24.55 51.40L23.69 50.66L22.89 49.89L22.13 49.10L21.40 48.32L20.70 47.55L20.01 46.80L19.33 46.07L18.64 45.36L17.93 44.67L17.20 43.99L16.45 43.30L15.68 42.60L14.90 41.88L14.11 41.11L13.34 40.31L12.60 39.45L11.91 38.53L11.28 37.55L10.74 36.52L10.30 35.44L9.97 34.32L9.77 33.17L9.70 32.00L9.77 30.83L9.97 29.68L10.30 28.56L10.74 27.48L11.28 26.45L11.91 25.47L12.60 24.55L13.34 23.69L14.11 22.89L14.90 22.12L15.68 21.40L16.45 20.70L17.20 20.01L17.93 19.33L18.64 18.64L19.33 17.93L20.01 17.20L20.70 16.44L21.39 15.67L22.10 14.86L22.83 14.01L23.57 13.07L24.32 11.98L25.06 10.65L25.83 8.98L26.68 6.98L27.69 4.79L28.92 2.73L30.39 1.25Z" fill="url(#kb)" stroke="#0a3f70" stroke-width="0.8"/><circle cx="32" cy="32" r="16.4" fill="#0c3f6e"/><circle cx="32" cy="32" r="15.4" fill="url(#kg)"/></svg>
<div class="a t" style="left:995.6px;top:361px;width:40px;height:18px;line-height:18px;font-size:13px;color:#e8e8e8">HR</div>
<div class="a t" style="left:1061.6px;top:361px;width:40px;height:18px;line-height:18px;font-size:13px;color:#e8e8e8">TRIM</div>
<div class="a" style="left:1018.6px;top:416px;width:56px;height:33px;background:#0c0c0c;border-radius:6px"></div>
<div class="a" style="left:1022.6px;top:420px;width:48px;height:25px;background:#0a4e71;border-radius:3px;box-shadow:inset 0 0 0 1px #1a76a6"></div>
<div class="a t" style="left:1022.6px;top:421.5px;width:48px;height:25px;line-height:25px;font-size:14px;font-weight:bold;color:#eaf2f6">IN</div>
<svg class="a" style="left:1035.6px;top:474px;" width="26" height="27" viewBox="0 0 26 27"><path d="M5.2 3.2L17.6 9.7L5.2 16Z" fill="#17a2ea"/><path d="M1.6 10H19.3" stroke="#17a2ea" stroke-width="1.8" stroke-linecap="round"/><path d="M7.6 13.8L19 18.3L7.6 24.6Z" fill="#17a2ea"/><path d="M4.8 18.3H22.7" stroke="#17a2ea" stroke-width="1.8" stroke-linecap="round"/></svg>
<div class="a" style="left:970.6px;top:614px;width:155.5px;height:35px;background:#595959"></div>
<div class="a t" style="left:970.6px;top:621px;width:155px;height:22px;line-height:22px;font-size:15px;font-weight:bold;color:#f2f2f2">UTILITY</div>
<div class="a" style="left:970.6px;top:649px;width:155.5px;height:1px;background:#3a3a3a"></div>
<div class="a" style="left:970.6px;top:650px;width:155.5px;height:34px;background:#595959"></div>
<div class="a t" style="left:970.6px;top:656px;width:155px;height:22px;line-height:22px;font-size:15px;font-weight:bold;color:#f2f2f2">MASTER TAPE</div>
<div class="a" style="left:970.6px;top:684px;width:155.5px;height:24px;background:#2e2e2e"></div>
<div class="a" style="left:980.6px;top:695px;width:135px;height:16px;background:#262626;border:2px solid #0e0e0e;border-radius:6px;box-shadow:inset 0 0 0 2px #333"></div>
<div class="a" style="left:970.6px;top:715.5px;width:155.5px;height:451.5px;background:linear-gradient(#bdbdbd,#a4a4a4 30%,#969696 65%,#868686);box-shadow:inset 1.5px 0 0 #b4b4b4,inset 3px 0 0 #8f8f8f,inset -1.5px 0 0 #808080"></div>
<div class="a" style="left:1125.9px;top:715.5px;width:2.7px;height:452px;background:#0d0d0d"></div>
<div class="a" style="left:981.6px;top:724px;width:135px;height:43px;background:#9c9c9c;border-radius:8px;box-shadow:0 0 0 1px #b0b0b0"></div>
<div class="a" style="left:983.6px;top:726px;width:131px;height:39px;background:linear-gradient(#1c1c1c,#111);border:2px solid #050505;border-radius:6px"></div>
<div class="a t" style="left:983.6px;top:734px;width:131px;height:22px;line-height:22px;font-size:15px;font-weight:bold;color:#7ddf55">READ</div>
<svg class="a" style="left:1094.6px;top:745px;" width="14" height="14" viewBox="0 0 14 14"><path d="M1 13L13 1V13Z" fill="#b4c6d0"/></svg>
<svg class="a" style="left:979.9px;top:770.7px;" width="70" height="70" viewBox="0 0 70 70"><circle cx="35.00" cy="5.00" r="2.3" fill="#111"/><circle cx="56.21" cy="13.79" r="2.3" fill="#111"/><circle cx="65.00" cy="35.00" r="2.3" fill="#111"/><circle cx="56.21" cy="56.21" r="2.3" fill="#111"/><circle cx="13.79" cy="13.79" r="2.3" fill="#111"/><circle cx="5.00" cy="35.00" r="2.3" fill="#111"/><circle cx="13.79" cy="56.21" r="2.3" fill="#111"/><ellipse cx="41" cy="43" rx="25" ry="24" fill="#000" opacity="0.18"/><circle cx="35" cy="35" r="25" fill="#141312"/><circle cx="35" cy="35" r="23.5" fill="url(#pk)"/><circle cx="35" cy="35" r="19" fill="none" stroke="#55524e" stroke-width="0.8" opacity="0.6"/><line x1="31.46" y1="38.54" x2="19.44" y2="50.56" stroke="#ece8dc" stroke-width="3.5"/></svg>
<svg class="a" style="left:1048.9px;top:770.7px;" width="70" height="70" viewBox="0 0 70 70"><circle cx="35.00" cy="5.00" r="2.3" fill="#111"/><circle cx="56.21" cy="13.79" r="2.3" fill="#111"/><circle cx="65.00" cy="35.00" r="2.3" fill="#111"/><circle cx="56.21" cy="56.21" r="2.3" fill="#111"/><circle cx="13.79" cy="13.79" r="2.3" fill="#111"/><circle cx="5.00" cy="35.00" r="2.3" fill="#111"/><circle cx="13.79" cy="56.21" r="2.3" fill="#111"/><ellipse cx="41" cy="43" rx="25" ry="24" fill="#000" opacity="0.18"/><circle cx="35" cy="35" r="25" fill="#141312"/><circle cx="35" cy="35" r="23.5" fill="url(#pk)"/><circle cx="35" cy="35" r="19" fill="none" stroke="#55524e" stroke-width="0.8" opacity="0.6"/><line x1="38.54" y1="38.54" x2="50.56" y2="50.56" stroke="#ece8dc" stroke-width="3.5"/></svg>
<div class="a t" style="left:982.6px;top:828px;width:12px;height:16px;line-height:16px;font-size:12px;font-weight:bold;color:#111">L</div>
<div class="a t" style="left:1034.1px;top:828px;width:12px;height:16px;line-height:16px;font-size:12px;font-weight:bold;color:#111">R</div>
<div class="a t" style="left:1051.6px;top:828px;width:12px;height:16px;line-height:16px;font-size:12px;font-weight:bold;color:#111">L</div>
<div class="a t" style="left:1104.1px;top:828px;width:12px;height:16px;line-height:16px;font-size:12px;font-weight:bold;color:#111">R</div>
<div class="a" style="left:992.6px;top:855px;width:50px;height:29px;background:#c7cdd0;border:2px solid #111;border-radius:4px;box-shadow:inset 0 2px 0 #a0a6a9,inset 0 -2px 0 #a0a6a9"></div>
<div class="a t" style="left:992.6px;top:855px;width:50px;height:29px;line-height:29px;font-size:14px;letter-spacing:-0.4px;font-weight:bold;color:#111">SPILL</div>
<div class="a" style="left:1052.6px;top:853px;width:54px;height:31px;background:#0b0b0b;border-radius:5px;box-shadow:0 0 0 2px #8a8a8a"></div>
<div class="a" style="left:1054.6px;top:855px;width:50px;height:27px;background:linear-gradient(#262626,#151515);border-radius:3px"></div>
<div class="a t" style="left:1054.6px;top:855px;width:50px;height:27px;line-height:27px;font-size:13.5px;font-weight:bold;color:#f5a31a">ARM</div>
<div class="a" style="left:992.6px;top:896px;width:50px;height:29px;background:#c7cdd0;border:2px solid #111;border-radius:4px;box-shadow:inset 0 2px 0 #a0a6a9,inset 0 -2px 0 #a0a6a9"></div>
<div class="a t" style="left:992.6px;top:896px;width:50px;height:29px;line-height:29px;font-size:15px;font-weight:bold;color:#111">S</div>
<div class="a" style="left:1054.6px;top:896px;width:50px;height:29px;background:#c7cdd0;border:2px solid #111;border-radius:4px;box-shadow:inset 0 2px 0 #a0a6a9,inset 0 -2px 0 #a0a6a9"></div>
<div class="a t" style="left:1054.6px;top:896px;width:50px;height:29px;line-height:29px;font-size:15px;font-weight:bold;color:#111">M</div>
<div class="a" style="left:1008.9px;top:980px;width:7.4px;height:137px;background:#0c0c0c;border-radius:4px"></div>
<div class="a t" style="left:1026.6px;top:983.7px;width:28px;height:18px;line-height:18px;font-size:14px;color:#111">10</div>
<div class="a t" style="left:1026.6px;top:1027.6px;width:28px;height:18px;line-height:18px;font-size:14px;color:#111">0</div>
<div class="a t" style="left:1026.6px;top:1056.3px;width:28px;height:18px;line-height:18px;font-size:14px;color:#111">10</div>
<div class="a t" style="left:1026.6px;top:1088.6px;width:28px;height:18px;line-height:18px;font-size:14px;color:#111">30</div>
<div class="a t" style="left:1025.6px;top:1105px;width:28px;height:18px;line-height:18px;font-size:17px;font-weight:bold;color:#111">&#8734;</div>
<div class="a" style="left:1010.1px;top:1121.5px;width:2px;height:14.5px;background:#111"></div>
<div class="a" style="left:1010.1px;top:1134px;width:40px;height:2px;background:#111"></div>
<svg class="a" style="left:995.1px;top:1004px;" width="40" height="82" viewBox="0 0 40 82"><path d="M3 4H38L35 13Q36 44 37 66L35 73L38 81H3L6 73L4 66Q5 44 6 13Z" fill="#000" opacity="0.16"/><path d="M0 0H35L32.5 8.5Q33.5 40 34.5 62L32.5 69L35 77H0L2.5 69L0.5 62Q1.5 40 2.5 8.5Z" fill="url(#fc)" stroke="#707070" stroke-width="0.8"/><path d="M0 0H35L32.5 8.5Q33.5 40 34.5 62L32.5 69L35 77H0L2.5 69L0.5 62Q1.5 40 2.5 8.5Z" fill="url(#fcx)"/><rect x="2" y="37.5" width="31" height="2.4" fill="#111"/></svg>
<div class="a" style="left:1054.6px;top:940px;width:56px;height:209px;background:#2a2a2a;border-radius:7px;box-shadow:0 0 0 1px #9a9a9a"></div>
<div class="a" style="left:1056.6px;top:942px;width:52px;height:205px;background:linear-gradient(90deg,#1c1c1c,#262626 50%,#1e1e1e);border:2px solid #0b0b0b;border-radius:6px"></div>
<svg class="a" style="left:1054.6px;top:940px;" width="56" height="209" viewBox="0 0 56 209"><rect x="9" y="9" width="12" height="126" rx="3" fill="#0e0e0e"/><rect x="10" y="10" width="5" height="124" fill="#23261a"/><rect x="10" y="10" width="5" height="8" fill="#2e1a14"/><rect x="10" y="68" width="5" height="66" fill="url(#bg)"/><rect x="10" y="23" width="5" height="2" fill="#f5b020"/><rect x="15.5" y="10" width="5" height="124" fill="#23261a"/><rect x="15.5" y="10" width="5" height="8" fill="#2e1a14"/><rect x="15.5" y="68" width="5" height="66" fill="url(#bg)"/><rect x="15.5" y="23" width="5" height="2" fill="#f5b020"/><rect x="23" y="17.3" width="4" height="1.5" fill="#8a9296"/><text x="39.5" y="23" font-size="14" font-family="Liberation Sans" fill="#8c9498" text-anchor="middle">0</text><rect x="23" y="47.8" width="4" height="1.5" fill="#8a9296"/><text x="39.5" y="53.5" font-size="14" font-family="Liberation Sans" fill="#8c9498" text-anchor="middle">9</text><rect x="23" y="80.8" width="4" height="1.5" fill="#8a9296"/><text x="39.5" y="86.5" font-size="14" font-family="Liberation Sans" fill="#8c9498" text-anchor="middle">18</text><rect x="23" y="107.3" width="4" height="1.5" fill="#8a9296"/><text x="39.5" y="113" font-size="14" font-family="Liberation Sans" fill="#8c9498" text-anchor="middle">32</text><rect x="23" y="133.70000000000002" width="4" height="1.5" fill="#8a9296"/><text x="39.5" y="139.4" font-size="14" font-family="Liberation Sans" fill="#8c9498" text-anchor="middle">60</text><rect x="23" y="33.3" width="1.5" height="1.5" fill="#8a9296"/><rect x="23" y="64.3" width="1.5" height="1.5" fill="#8a9296"/><rect x="23" y="94.3" width="1.5" height="1.5" fill="#8a9296"/><rect x="23" y="120.8" width="1.5" height="1.5" fill="#8a9296"/></svg>
<div class="a" style="left:1062.6px;top:1085px;width:40px;height:28px;background:#2b2d2f;border-radius:3px;box-shadow:inset 0 0 0 1px #323436"></div>
<svg class="a" style="left:1071.6px;top:1089px;" width="22" height="22" viewBox="0 0 22 22"><circle cx="11" cy="11" r="7.2" fill="none" stroke="#a5adb2" stroke-width="1.6"/><line x1="4" y1="18.5" x2="18" y2="3.5" stroke="#a5adb2" stroke-width="1.6"/></svg>
<div class="a t" style="left:1054.6px;top:1120px;width:56px;height:20px;line-height:20px;font-size:15px;font-weight:bold;color:#c9cbcd">-1.7</div>
<div class="a" style="left:970.6px;top:1169.5px;width:155.5px;height:32.5px;background:#00f53c"></div>
<div class="a t" style="left:970.6px;top:1175px;width:155px;height:22px;line-height:22px;font-size:16.4px;font-weight:bold;color:#111">ALL DRUMS</div>
<div class="a" style="left:970.6px;top:1204px;width:155.5px;height:11.5px;background:#00f53c"></div>
<div class="a" style="left:1125.9px;top:1167px;width:2.7px;height:49px;background:#0d0d0d"></div>
<div class="a" style="left:1128.9px;top:78px;width:155.0px;height:6.5px;background:#00f53c"></div>
<div class="a" style="left:1128.4px;top:87px;width:155.5px;height:34px;background:#5a5a5a"></div>
<div class="a t" style="left:1128.4px;top:94px;width:155px;height:20px;line-height:20px;font-size:15px;font-weight:bold;color:#f2f2f2">INPUT</div>
<div class="a" style="left:1128.4px;top:121px;width:155.5px;height:493px;background:#2e2e2e"></div>
<div class="a" style="left:1283.9px;top:87px;width:2.3px;height:34px;background:#444"></div>
<div class="a" style="left:1283.4px;top:130px;width:4px;height:476px;background:#4d5458;border-radius:2px"></div>
<div class="a" style="left:1283.9px;top:614px;width:2.3px;height:70px;background:#444"></div>
<div class="a" style="left:1134.4px;top:129px;width:144px;height:387px;background:#232323;border:3px solid #131313;border-radius:8px;box-shadow:inset 0 0 0 1px #2c2c2c"></div>
<div class="a" style="left:1138.4px;top:133px;width:135px;height:75px;background:#1a1a1a;border:2px solid #0c0c0c;border-radius:4px"></div>
<div class="a t" style="left:1138.4px;top:141px;width:135px;height:20px;line-height:20px;font-size:14px;color:#838b90">SUMMING</div>
<div class="a" style="left:1144.4px;top:166px;width:124px;height:33px;background:linear-gradient(#61686d,#3f464a);border-radius:5px;box-shadow:0 0 0 1px #151515"></div>
<div class="a t" style="left:1144.4px;top:171px;width:124px;height:22px;line-height:22px;font-size:15px;font-weight:bold;color:#e6e9eb">API Summing</div>
<div class="a" style="left:1136.4px;top:217px;width:140px;height:67px;background:#111"></div>
<svg class="a" style="left:1137.4px;top:218px;" width="138" height="65" viewBox="0 0 138 65"><rect width="138" height="65" fill="url(#vug)"/><ellipse cx="18" cy="60" rx="22" ry="12" fill="url(#vuy)"/><ellipse cx="120" cy="60" rx="22" ry="12" fill="url(#vuy)"/><rect width="138" height="65" fill="none" stroke="#e88a20" stroke-width="1.5" opacity="0.7"/><path d="M22.35 40.33A106.6 106.6 0 0 1 94.54 32.87" fill="none" stroke="#23232e" stroke-width="2.8"/><path d="M94.66 32.38A107.1 107.1 0 0 1 115.36 39.88" fill="none" stroke="#d8202a" stroke-width="3.8"/><line x1="32.82" y1="35.94" x2="29.78" y2="27.47" stroke="#2a2a36" stroke-width="1.3"/><line x1="43.14" y1="32.82" x2="40.98" y2="24.09" stroke="#2a2a36" stroke-width="1.3"/><line x1="47.86" y1="31.77" x2="46.10" y2="22.94" stroke="#2a2a36" stroke-width="1.3"/><line x1="52.44" y1="30.95" x2="51.06" y2="22.06" stroke="#2a2a36" stroke-width="1.3"/><line x1="58.90" y1="30.16" x2="58.07" y2="21.19" stroke="#2a2a36" stroke-width="1.3"/><line x1="66.70" y1="29.72" x2="66.53" y2="20.72" stroke="#2a2a36" stroke-width="1.3"/><line x1="75.07" y1="29.89" x2="75.61" y2="20.90" stroke="#2a2a36" stroke-width="1.3"/><line x1="83.77" y1="30.76" x2="85.04" y2="21.85" stroke="#2a2a36" stroke-width="1.3"/><line x1="94.36" y1="32.82" x2="96.76" y2="23.11" stroke="#2a2a36" stroke-width="1.3"/><line x1="101.69" y1="34.92" x2="104.47" y2="26.36" stroke="#d8202a" stroke-width="1.3"/><line x1="109.03" y1="37.60" x2="112.43" y2="29.27" stroke="#d8202a" stroke-width="1.3"/><line x1="22.35" y1="40.33" x2="15.35" y2="32.83" stroke="#23232e" stroke-width="1.5"/><line x1="115.36" y1="39.88" x2="122.36" y2="31.88" stroke="#d8202a" stroke-width="1.5"/><text x="12" y="29.5" font-size="10" font-family="Liberation Sans" font-weight="bold" fill="#3a3a4a" text-anchor="middle">20</text><text x="49.7" y="19" font-size="10" font-family="Liberation Sans" font-weight="bold" fill="#3a3a4a" text-anchor="middle">5</text><text x="99" y="19" font-size="10" font-family="Liberation Sans" font-weight="bold" fill="#3a3a4a" text-anchor="middle">0</text><text x="124" y="29.5" font-size="10" font-family="Liberation Sans" font-weight="bold" fill="#d8202a" text-anchor="middle">3</text><rect x="4" y="37.5" width="6" height="1.6" fill="#3a3a4a"/><path d="M125.5 38h7M129 34.5v7" stroke="#d8202a" stroke-width="1.6"/><line x1="42.6" y1="64" x2="14.1" y2="31" stroke="#1a1a1a" stroke-width="1.6"/></svg>
<svg class="a" style="left:1138.4px;top:298px;" width="64" height="64" viewBox="0 0 64 64"><circle cx="43.08" cy="6.28" r="2.1" fill="#f4f4f4"/><circle cx="20.92" cy="6.28" r="2.1" fill="#f4f4f4"/><circle cx="52.87" cy="13.34" r="2.1" fill="#f4f4f4"/><circle cx="11.13" cy="13.34" r="2.1" fill="#f4f4f4"/><circle cx="58.72" cy="23.63" r="2.1" fill="#f4f4f4"/><circle cx="5.28" cy="23.63" r="2.1" fill="#f4f4f4"/><circle cx="59.80" cy="35.36" r="2.1" fill="#f4f4f4"/><circle cx="4.20" cy="35.36" r="2.1" fill="#f4f4f4"/><circle cx="55.64" cy="47.00" r="2.1" fill="#f4f4f4"/><circle cx="8.36" cy="47.00" r="2.1" fill="#f4f4f4"/><circle cx="47.25" cy="55.48" r="2.1" fill="#f4f4f4"/><circle cx="16.75" cy="55.48" r="2.1" fill="#f4f4f4"/><circle cx="33" cy="34" r="22" fill="#1a1a1a" opacity="0.6"/><path d="M32.00 0.70L33.61 1.25L35.08 2.73L36.31 4.79L37.32 6.98L38.17 8.98L38.94 10.65L39.68 11.98L40.43 13.07L41.17 14.01L41.90 14.86L42.61 15.67L43.30 16.44L43.99 17.20L44.67 17.93L45.36 18.64L46.07 19.33L46.80 20.01L47.55 20.70L48.32 21.40L49.10 22.12L49.89 22.89L50.66 23.69L51.40 24.55L52.09 25.47L52.72 26.45L53.26 27.48L53.70 28.56L54.03 29.68L54.23 30.83L54.30 32.00L54.23 33.17L54.03 34.32L53.70 35.44L53.26 36.52L52.72 37.55L52.09 38.53L51.40 39.45L50.66 40.31L49.89 41.11L49.10 41.88L48.32 42.60L47.55 43.30L46.80 43.99L46.07 44.67L45.36 45.36L44.67 46.07L43.99 46.80L43.30 47.55L42.60 48.32L41.88 49.10L41.11 49.89L40.31 50.66L39.45 51.40L38.53 52.09L37.55 52.72L36.52 53.26L35.44 53.70L34.32 54.03L33.17 54.23L32.00 54.30L30.83 54.23L29.68 54.03L28.56 53.70L27.48 53.26L26.45 52.72L25.47 52.09L24.55 51.40L23.69 50.66L22.89 49.89L22.13 49.10L21.40 48.32L20.70 47.55L20.01 46.80L19.33 46.07L18.64 45.36L17.93 44.67L17.20 43.99L16.45 43.30L15.68 42.60L14.90 41.88L14.11 41.11L13.34 40.31L12.60 39.45L11.91 38.53L11.28 37.55L10.74 36.52L10.30 35.44L9.97 34.32L9.77 33.17L9.70 32.00L9.77 30.83L9.97 29.68L10.30 28.56L10.74 27.48L11.28 26.45L11.91 25.47L12.60 24.55L13.34 23.69L14.11 22.89L14.90 22.12L15.68 21.40L16.45 20.70L17.20 20.01L17.93 19.33L18.64 18.64L19.33 17.93L20.01 17.20L20.70 16.44L21.39 15.67L22.10 14.86L22.83 14.01L23.57 13.07L24.32 11.98L25.06 10.65L25.83 8.98L26.68 6.98L27.69 4.79L28.92 2.73L30.39 1.25Z" fill="url(#kb)" stroke="#0a3f70" stroke-width="0.8"/><circle cx="32" cy="32" r="16.4" fill="#0c3f6e"/><circle cx="32" cy="32" r="15.4" fill="url(#kg)"/></svg>
<svg class="a" style="left:1207.4px;top:298px;" width="64" height="64" viewBox="0 0 64 64"><circle cx="43.08" cy="6.28" r="2.1" fill="#f4f4f4"/><circle cx="20.92" cy="6.28" r="2.1" fill="#f4f4f4"/><circle cx="52.87" cy="13.34" r="2.1" fill="#f4f4f4"/><circle cx="11.13" cy="13.34" r="2.1" fill="#f4f4f4"/><circle cx="58.72" cy="23.63" r="2.1" fill="#f4f4f4"/><circle cx="5.28" cy="23.63" r="2.1" fill="#f4f4f4"/><circle cx="59.80" cy="35.36" r="2.1" fill="#f4f4f4"/><circle cx="4.20" cy="35.36" r="2.1" fill="#f4f4f4"/><circle cx="55.64" cy="47.00" r="2.1" fill="#f4f4f4"/><circle cx="8.36" cy="47.00" r="2.1" fill="#f4f4f4"/><circle cx="47.25" cy="55.48" r="2.1" fill="#f4f4f4"/><circle cx="16.75" cy="55.48" r="2.1" fill="#f4f4f4"/><circle cx="33" cy="34" r="22" fill="#1a1a1a" opacity="0.6"/><path d="M32.00 0.70L33.61 1.25L35.08 2.73L36.31 4.79L37.32 6.98L38.17 8.98L38.94 10.65L39.68 11.98L40.43 13.07L41.17 14.01L41.90 14.86L42.61 15.67L43.30 16.44L43.99 17.20L44.67 17.93L45.36 18.64L46.07 19.33L46.80 20.01L47.55 20.70L48.32 21.40L49.10 22.12L49.89 22.89L50.66 23.69L51.40 24.55L52.09 25.47L52.72 26.45L53.26 27.48L53.70 28.56L54.03 29.68L54.23 30.83L54.30 32.00L54.23 33.17L54.03 34.32L53.70 35.44L53.26 36.52L52.72 37.55L52.09 38.53L51.40 39.45L50.66 40.31L49.89 41.11L49.10 41.88L48.32 42.60L47.55 43.30L46.80 43.99L46.07 44.67L45.36 45.36L44.67 46.07L43.99 46.80L43.30 47.55L42.60 48.32L41.88 49.10L41.11 49.89L40.31 50.66L39.45 51.40L38.53 52.09L37.55 52.72L36.52 53.26L35.44 53.70L34.32 54.03L33.17 54.23L32.00 54.30L30.83 54.23L29.68 54.03L28.56 53.70L27.48 53.26L26.45 52.72L25.47 52.09L24.55 51.40L23.69 50.66L22.89 49.89L22.13 49.10L21.40 48.32L20.70 47.55L20.01 46.80L19.33 46.07L18.64 45.36L17.93 44.67L17.20 43.99L16.45 43.30L15.68 42.60L14.90 41.88L14.11 41.11L13.34 40.31L12.60 39.45L11.91 38.53L11.28 37.55L10.74 36.52L10.30 35.44L9.97 34.32L9.77 33.17L9.70 32.00L9.77 30.83L9.97 29.68L10.30 28.56L10.74 27.48L11.28 26.45L11.91 25.47L12.60 24.55L13.34 23.69L14.11 22.89L14.90 22.12L15.68 21.40L16.45 20.70L17.20 20.01L17.93 19.33L18.64 18.64L19.33 17.93L20.01 17.20L20.70 16.44L21.39 15.67L22.10 14.86L22.83 14.01L23.57 13.07L24.32 11.98L25.06 10.65L25.83 8.98L26.68 6.98L27.69 4.79L28.92 2.73L30.39 1.25Z" fill="url(#kb)" stroke="#0a3f70" stroke-width="0.8"/><circle cx="32" cy="32" r="16.4" fill="#0c3f6e"/><circle cx="32" cy="32" r="15.4" fill="url(#kg)"/></svg>
<div class="a t" style="left:1153.4px;top:361px;width:40px;height:18px;line-height:18px;font-size:13px;color:#e8e8e8">HR</div>
<div class="a t" style="left:1219.4px;top:361px;width:40px;height:18px;line-height:18px;font-size:13px;color:#e8e8e8">TRIM</div>
<div class="a" style="left:1176.4px;top:416px;width:56px;height:33px;background:#0c0c0c;border-radius:6px"></div>
<div class="a" style="left:1180.4px;top:420px;width:48px;height:25px;background:#0a4e71;border-radius:3px;box-shadow:inset 0 0 0 1px #1a76a6"></div>
<div class="a t" style="left:1180.4px;top:421.5px;width:48px;height:25px;line-height:25px;font-size:14px;font-weight:bold;color:#eaf2f6">IN</div>
<svg class="a" style="left:1193.4px;top:474px;" width="26" height="27" viewBox="0 0 26 27"><path d="M5.2 3.2L17.6 9.7L5.2 16Z" fill="#17a2ea"/><path d="M1.6 10H19.3" stroke="#17a2ea" stroke-width="1.8" stroke-linecap="round"/><path d="M7.6 13.8L19 18.3L7.6 24.6Z" fill="#17a2ea"/><path d="M4.8 18.3H22.7" stroke="#17a2ea" stroke-width="1.8" stroke-linecap="round"/></svg>
<div class="a" style="left:1128.4px;top:614px;width:155.5px;height:35px;background:#595959"></div>
<div class="a t" style="left:1128.4px;top:621px;width:155px;height:22px;line-height:22px;font-size:15px;font-weight:bold;color:#f2f2f2">UTILITY</div>
<div class="a" style="left:1128.4px;top:649px;width:155.5px;height:1px;background:#3a3a3a"></div>
<div class="a" style="left:1128.4px;top:650px;width:155.5px;height:34px;background:#595959"></div>
<div class="a t" style="left:1128.4px;top:656px;width:155px;height:22px;line-height:22px;font-size:15px;font-weight:bold;color:#f2f2f2">MASTER TAPE</div>
<div class="a" style="left:1128.4px;top:684px;width:155.5px;height:24px;background:#2e2e2e"></div>
<div class="a" style="left:1138.4px;top:695px;width:135px;height:16px;background:#262626;border:2px solid #0e0e0e;border-radius:6px;box-shadow:inset 0 0 0 2px #333"></div>
<div class="a" style="left:1128.4px;top:715.5px;width:155.5px;height:451.5px;background:linear-gradient(#bdbdbd,#a4a4a4 30%,#969696 65%,#868686);box-shadow:inset 1.5px 0 0 #b4b4b4,inset 3px 0 0 #8f8f8f,inset -1.5px 0 0 #808080"></div>
<div class="a" style="left:1283.7px;top:715.5px;width:2.7px;height:452px;background:#0d0d0d"></div>
<div class="a" style="left:1139.4px;top:724px;width:135px;height:43px;background:#9c9c9c;border-radius:8px;box-shadow:0 0 0 1px #b0b0b0"></div>
<div class="a" style="left:1141.4px;top:726px;width:131px;height:39px;background:linear-gradient(#1c1c1c,#111);border:2px solid #050505;border-radius:6px"></div>
<div class="a t" style="left:1141.4px;top:734px;width:131px;height:22px;line-height:22px;font-size:15px;font-weight:bold;color:#7ddf55">READ</div>
<svg class="a" style="left:1252.4px;top:745px;" width="14" height="14" viewBox="0 0 14 14"><path d="M1 13L13 1V13Z" fill="#b4c6d0"/></svg>
<svg class="a" style="left:1137.7px;top:770.7px;" width="70" height="70" viewBox="0 0 70 70"><circle cx="35.00" cy="5.00" r="2.3" fill="#111"/><circle cx="56.21" cy="13.79" r="2.3" fill="#111"/><circle cx="65.00" cy="35.00" r="2.3" fill="#111"/><circle cx="56.21" cy="56.21" r="2.3" fill="#111"/><circle cx="13.79" cy="13.79" r="2.3" fill="#111"/><circle cx="5.00" cy="35.00" r="2.3" fill="#111"/><circle cx="13.79" cy="56.21" r="2.3" fill="#111"/><ellipse cx="41" cy="43" rx="25" ry="24" fill="#000" opacity="0.18"/><circle cx="35" cy="35" r="25" fill="#141312"/><circle cx="35" cy="35" r="23.5" fill="url(#pk)"/><circle cx="35" cy="35" r="19" fill="none" stroke="#55524e" stroke-width="0.8" opacity="0.6"/><line x1="31.46" y1="38.54" x2="19.44" y2="50.56" stroke="#ece8dc" stroke-width="3.5"/></svg>
<svg class="a" style="left:1206.7px;top:770.7px;" width="70" height="70" viewBox="0 0 70 70"><circle cx="35.00" cy="5.00" r="2.3" fill="#111"/><circle cx="56.21" cy="13.79" r="2.3" fill="#111"/><circle cx="65.00" cy="35.00" r="2.3" fill="#111"/><circle cx="56.21" cy="56.21" r="2.3" fill="#111"/><circle cx="13.79" cy="13.79" r="2.3" fill="#111"/><circle cx="5.00" cy="35.00" r="2.3" fill="#111"/><circle cx="13.79" cy="56.21" r="2.3" fill="#111"/><ellipse cx="41" cy="43" rx="25" ry="24" fill="#000" opacity="0.18"/><circle cx="35" cy="35" r="25" fill="#141312"/><circle cx="35" cy="35" r="23.5" fill="url(#pk)"/><circle cx="35" cy="35" r="19" fill="none" stroke="#55524e" stroke-width="0.8" opacity="0.6"/><line x1="38.54" y1="38.54" x2="50.56" y2="50.56" stroke="#ece8dc" stroke-width="3.5"/></svg>
<div class="a t" style="left:1140.4px;top:828px;width:12px;height:16px;line-height:16px;font-size:12px;font-weight:bold;color:#111">L</div>
<div class="a t" style="left:1191.9px;top:828px;width:12px;height:16px;line-height:16px;font-size:12px;font-weight:bold;color:#111">R</div>
<div class="a t" style="left:1209.4px;top:828px;width:12px;height:16px;line-height:16px;font-size:12px;font-weight:bold;color:#111">L</div>
<div class="a t" style="left:1261.9px;top:828px;width:12px;height:16px;line-height:16px;font-size:12px;font-weight:bold;color:#111">R</div>
<div class="a" style="left:1150.4px;top:855px;width:50px;height:29px;background:#c7cdd0;border:2px solid #111;border-radius:4px;box-shadow:inset 0 2px 0 #a0a6a9,inset 0 -2px 0 #a0a6a9"></div>
<div class="a t" style="left:1150.4px;top:855px;width:50px;height:29px;line-height:29px;font-size:14px;letter-spacing:-0.4px;font-weight:bold;color:#111">SPILL</div>
<div class="a" style="left:1210.4px;top:853px;width:54px;height:31px;background:#0b0b0b;border-radius:5px;box-shadow:0 0 0 2px #8a8a8a"></div>
<div class="a" style="left:1212.4px;top:855px;width:50px;height:27px;background:linear-gradient(#262626,#151515);border-radius:3px"></div>
<div class="a t" style="left:1212.4px;top:855px;width:50px;height:27px;line-height:27px;font-size:13.5px;font-weight:bold;color:#9fb0b8">ARM</div>
<div class="a" style="left:1150.4px;top:896px;width:50px;height:29px;background:#c7cdd0;border:2px solid #111;border-radius:4px;box-shadow:inset 0 2px 0 #a0a6a9,inset 0 -2px 0 #a0a6a9"></div>
<div class="a t" style="left:1150.4px;top:896px;width:50px;height:29px;line-height:29px;font-size:15px;font-weight:bold;color:#111">S</div>
<div class="a" style="left:1212.4px;top:896px;width:50px;height:29px;background:#c7cdd0;border:2px solid #111;border-radius:4px;box-shadow:inset 0 2px 0 #a0a6a9,inset 0 -2px 0 #a0a6a9"></div>
<div class="a t" style="left:1212.4px;top:896px;width:50px;height:29px;line-height:29px;font-size:15px;font-weight:bold;color:#111">M</div>
<div class="a" style="left:1166.7px;top:980px;width:7.4px;height:137px;background:#0c0c0c;border-radius:4px"></div>
<div class="a t" style="left:1184.4px;top:983.7px;width:28px;height:18px;line-height:18px;font-size:14px;color:#111">10</div>
<div class="a t" style="left:1184.4px;top:1027.6px;width:28px;height:18px;line-height:18px;font-size:14px;color:#111">0</div>
<div class="a t" style="left:1184.4px;top:1056.3px;width:28px;height:18px;line-height:18px;font-size:14px;color:#111">10</div>
<div class="a t" style="left:1184.4px;top:1088.6px;width:28px;height:18px;line-height:18px;font-size:14px;color:#111">30</div>
<div class="a t" style="left:1183.4px;top:1105px;width:28px;height:18px;line-height:18px;font-size:17px;font-weight:bold;color:#111">&#8734;</div>
<div class="a" style="left:1167.9px;top:1121.5px;width:2px;height:14.5px;background:#111"></div>
<div class="a" style="left:1167.9px;top:1134px;width:40px;height:2px;background:#111"></div>
<svg class="a" style="left:1152.9px;top:995.4px;" width="40" height="82" viewBox="0 0 40 82"><path d="M3 4H38L35 13Q36 44 37 66L35 73L38 81H3L6 73L4 66Q5 44 6 13Z" fill="#000" opacity="0.16"/><path d="M0 0H35L32.5 8.5Q33.5 40 34.5 62L32.5 69L35 77H0L2.5 69L0.5 62Q1.5 40 2.5 8.5Z" fill="url(#fc)" stroke="#707070" stroke-width="0.8"/><path d="M0 0H35L32.5 8.5Q33.5 40 34.5 62L32.5 69L35 77H0L2.5 69L0.5 62Q1.5 40 2.5 8.5Z" fill="url(#fcx)"/><rect x="2" y="37.5" width="31" height="2.4" fill="#111"/></svg>
<div class="a" style="left:1212.4px;top:940px;width:56px;height:209px;background:#2a2a2a;border-radius:7px;box-shadow:0 0 0 1px #9a9a9a"></div>
<div class="a" style="left:1214.4px;top:942px;width:52px;height:205px;background:linear-gradient(90deg,#1c1c1c,#262626 50%,#1e1e1e);border:2px solid #0b0b0b;border-radius:6px"></div>
<svg class="a" style="left:1212.4px;top:940px;" width="56" height="209" viewBox="0 0 56 209"><rect x="9" y="9" width="12" height="126" rx="3" fill="#0e0e0e"/><rect x="10" y="10" width="5" height="124" fill="#23261a"/><rect x="10" y="10" width="5" height="8" fill="#2e1a14"/><rect x="10" y="85.4" width="5" height="48.599999999999994" fill="url(#bg)"/><rect x="10" y="47.6" width="5" height="2" fill="#f5b020"/><rect x="15.5" y="10" width="5" height="124" fill="#23261a"/><rect x="15.5" y="10" width="5" height="8" fill="#2e1a14"/><rect x="15.5" y="91.4" width="5" height="42.599999999999994" fill="url(#bg)"/><rect x="15.5" y="38" width="5" height="2" fill="#f5b020"/><rect x="23" y="17.3" width="4" height="1.5" fill="#8a9296"/><text x="39.5" y="23" font-size="14" font-family="Liberation Sans" fill="#8c9498" text-anchor="middle">0</text><rect x="23" y="47.8" width="4" height="1.5" fill="#8a9296"/><text x="39.5" y="53.5" font-size="14" font-family="Liberation Sans" fill="#8c9498" text-anchor="middle">9</text><rect x="23" y="80.8" width="4" height="1.5" fill="#8a9296"/><text x="39.5" y="86.5" font-size="14" font-family="Liberation Sans" fill="#8c9498" text-anchor="middle">18</text><rect x="23" y="107.3" width="4" height="1.5" fill="#8a9296"/><text x="39.5" y="113" font-size="14" font-family="Liberation Sans" fill="#8c9498" text-anchor="middle">32</text><rect x="23" y="133.70000000000002" width="4" height="1.5" fill="#8a9296"/><text x="39.5" y="139.4" font-size="14" font-family="Liberation Sans" fill="#8c9498" text-anchor="middle">60</text><rect x="23" y="33.3" width="1.5" height="1.5" fill="#8a9296"/><rect x="23" y="64.3" width="1.5" height="1.5" fill="#8a9296"/><rect x="23" y="94.3" width="1.5" height="1.5" fill="#8a9296"/><rect x="23" y="120.8" width="1.5" height="1.5" fill="#8a9296"/></svg>
<div class="a" style="left:1220.4px;top:1085px;width:40px;height:28px;background:#2b2d2f;border-radius:3px;box-shadow:inset 0 0 0 1px #323436"></div>
<svg class="a" style="left:1229.4px;top:1089px;" width="22" height="22" viewBox="0 0 22 22"><circle cx="11" cy="11" r="7.2" fill="none" stroke="#a5adb2" stroke-width="1.6"/><line x1="4" y1="18.5" x2="18" y2="3.5" stroke="#a5adb2" stroke-width="1.6"/></svg>
<div class="a t" style="left:1212.4px;top:1120px;width:56px;height:20px;line-height:20px;font-size:15px;font-weight:bold;color:#c9cbcd">0.0</div>
<div class="a" style="left:1128.4px;top:1169.5px;width:155.5px;height:32.5px;background:#00f53c"></div>
<div class="a t" style="left:1128.4px;top:1175px;width:155px;height:22px;line-height:22px;font-size:16.4px;font-weight:bold;color:#111">DRUM ROOM</div>
<div class="a" style="left:1128.4px;top:1204px;width:155.5px;height:11.5px;background:#00f53c"></div>
<div class="a" style="left:1283.7px;top:1167px;width:2.7px;height:49px;background:#0d0d0d"></div>
<div class="a" style="left:1286.7px;top:78px;width:155.0px;height:6.5px;background:#00f53c"></div>
<div class="a" style="left:1286.2px;top:87px;width:155.5px;height:34px;background:#5a5a5a"></div>
<div class="a t" style="left:1286.2px;top:94px;width:155px;height:20px;line-height:20px;font-size:15px;font-weight:bold;color:#f2f2f2">INPUT</div>
<div class="a" style="left:1286.2px;top:121px;width:155.5px;height:493px;background:#2e2e2e"></div>
<div class="a" style="left:1441.7px;top:87px;width:2.3px;height:34px;background:#444"></div>
<div class="a" style="left:1441.2px;top:130px;width:4px;height:476px;background:#4d5458;border-radius:2px"></div>
<div class="a" style="left:1441.7px;top:614px;width:2.3px;height:70px;background:#444"></div>
<div class="a" style="left:1292.2px;top:129px;width:144px;height:387px;background:#232323;border:3px solid #131313;border-radius:8px;box-shadow:inset 0 0 0 1px #2c2c2c"></div>
<div class="a" style="left:1296.2px;top:133px;width:135px;height:75px;background:#1a1a1a;border:2px solid #0c0c0c;border-radius:4px"></div>
<div class="a t" style="left:1296.2px;top:141px;width:135px;height:20px;line-height:20px;font-size:14px;color:#838b90">SUMMING</div>
<div class="a" style="left:1302.2px;top:166px;width:124px;height:33px;background:linear-gradient(#61686d,#3f464a);border-radius:5px;box-shadow:0 0 0 1px #151515"></div>
<div class="a t" style="left:1302.2px;top:171px;width:124px;height:22px;line-height:22px;font-size:15px;font-weight:bold;color:#e6e9eb">API Summing</div>
<div class="a" style="left:1294.2px;top:217px;width:140px;height:67px;background:#111"></div>
<svg class="a" style="left:1295.2px;top:218px;" width="138" height="65" viewBox="0 0 138 65"><rect width="138" height="65" fill="url(#vug)"/><ellipse cx="18" cy="60" rx="22" ry="12" fill="url(#vuy)"/><ellipse cx="120" cy="60" rx="22" ry="12" fill="url(#vuy)"/><rect width="138" height="65" fill="none" stroke="#e88a20" stroke-width="1.5" opacity="0.7"/><path d="M22.35 40.33A106.6 106.6 0 0 1 94.54 32.87" fill="none" stroke="#23232e" stroke-width="2.8"/><path d="M94.66 32.38A107.1 107.1 0 0 1 115.36 39.88" fill="none" stroke="#d8202a" stroke-width="3.8"/><line x1="32.82" y1="35.94" x2="29.78" y2="27.47" stroke="#2a2a36" stroke-width="1.3"/><line x1="43.14" y1="32.82" x2="40.98" y2="24.09" stroke="#2a2a36" stroke-width="1.3"/><line x1="47.86" y1="31.77" x2="46.10" y2="22.94" stroke="#2a2a36" stroke-width="1.3"/><line x1="52.44" y1="30.95" x2="51.06" y2="22.06" stroke="#2a2a36" stroke-width="1.3"/><line x1="58.90" y1="30.16" x2="58.07" y2="21.19" stroke="#2a2a36" stroke-width="1.3"/><line x1="66.70" y1="29.72" x2="66.53" y2="20.72" stroke="#2a2a36" stroke-width="1.3"/><line x1="75.07" y1="29.89" x2="75.61" y2="20.90" stroke="#2a2a36" stroke-width="1.3"/><line x1="83.77" y1="30.76" x2="85.04" y2="21.85" stroke="#2a2a36" stroke-width="1.3"/><line x1="94.36" y1="32.82" x2="96.76" y2="23.11" stroke="#2a2a36" stroke-width="1.3"/><line x1="101.69" y1="34.92" x2="104.47" y2="26.36" stroke="#d8202a" stroke-width="1.3"/><line x1="109.03" y1="37.60" x2="112.43" y2="29.27" stroke="#d8202a" stroke-width="1.3"/><line x1="22.35" y1="40.33" x2="15.35" y2="32.83" stroke="#23232e" stroke-width="1.5"/><line x1="115.36" y1="39.88" x2="122.36" y2="31.88" stroke="#d8202a" stroke-width="1.5"/><text x="12" y="29.5" font-size="10" font-family="Liberation Sans" font-weight="bold" fill="#3a3a4a" text-anchor="middle">20</text><text x="49.7" y="19" font-size="10" font-family="Liberation Sans" font-weight="bold" fill="#3a3a4a" text-anchor="middle">5</text><text x="99" y="19" font-size="10" font-family="Liberation Sans" font-weight="bold" fill="#3a3a4a" text-anchor="middle">0</text><text x="124" y="29.5" font-size="10" font-family="Liberation Sans" font-weight="bold" fill="#d8202a" text-anchor="middle">3</text><rect x="4" y="37.5" width="6" height="1.6" fill="#3a3a4a"/><path d="M125.5 38h7M129 34.5v7" stroke="#d8202a" stroke-width="1.6"/><line x1="73.2" y1="64" x2="77.7" y2="11.5" stroke="#1a1a1a" stroke-width="1.6"/></svg>
<svg class="a" style="left:1296.2px;top:298px;" width="64" height="64" viewBox="0 0 64 64"><circle cx="43.08" cy="6.28" r="2.1" fill="#f4f4f4"/><circle cx="20.92" cy="6.28" r="2.1" fill="#f4f4f4"/><circle cx="52.87" cy="13.34" r="2.1" fill="#f4f4f4"/><circle cx="11.13" cy="13.34" r="2.1" fill="#f4f4f4"/><circle cx="58.72" cy="23.63" r="2.1" fill="#f4f4f4"/><circle cx="5.28" cy="23.63" r="2.1" fill="#f4f4f4"/><circle cx="59.80" cy="35.36" r="2.1" fill="#f4f4f4"/><circle cx="4.20" cy="35.36" r="2.1" fill="#f4f4f4"/><circle cx="55.64" cy="47.00" r="2.1" fill="#f4f4f4"/><circle cx="8.36" cy="47.00" r="2.1" fill="#f4f4f4"/><circle cx="47.25" cy="55.48" r="2.1" fill="#f4f4f4"/><circle cx="16.75" cy="55.48" r="2.1" fill="#f4f4f4"/><circle cx="33" cy="34" r="22" fill="#1a1a1a" opacity="0.6"/><path d="M32.00 0.70L33.61 1.25L35.08 2.73L36.31 4.79L37.32 6.98L38.17 8.98L38.94 10.65L39.68 11.98L40.43 13.07L41.17 14.01L41.90 14.86L42.61 15.67L43.30 16.44L43.99 17.20L44.67 17.93L45.36 18.64L46.07 19.33L46.80 20.01L47.55 20.70L48.32 21.40L49.10 22.12L49.89 22.89L50.66 23.69L51.40 24.55L52.09 25.47L52.72 26.45L53.26 27.48L53.70 28.56L54.03 29.68L54.23 30.83L54.30 32.00L54.23 33.17L54.03 34.32L53.70 35.44L53.26 36.52L52.72 37.55L52.09 38.53L51.40 39.45L50.66 40.31L49.89 41.11L49.10 41.88L48.32 42.60L47.55 43.30L46.80 43.99L46.07 44.67L45.36 45.36L44.67 46.07L43.99 46.80L43.30 47.55L42.60 48.32L41.88 49.10L41.11 49.89L40.31 50.66L39.45 51.40L38.53 52.09L37.55 52.72L36.52 53.26L35.44 53.70L34.32 54.03L33.17 54.23L32.00 54.30L30.83 54.23L29.68 54.03L28.56 53.70L27.48 53.26L26.45 52.72L25.47 52.09L24.55 51.40L23.69 50.66L22.89 49.89L22.13 49.10L21.40 48.32L20.70 47.55L20.01 46.80L19.33 46.07L18.64 45.36L17.93 44.67L17.20 43.99L16.45 43.30L15.68 42.60L14.90 41.88L14.11 41.11L13.34 40.31L12.60 39.45L11.91 38.53L11.28 37.55L10.74 36.52L10.30 35.44L9.97 34.32L9.77 33.17L9.70 32.00L9.77 30.83L9.97 29.68L10.30 28.56L10.74 27.48L11.28 26.45L11.91 25.47L12.60 24.55L13.34 23.69L14.11 22.89L14.90 22.12L15.68 21.40L16.45 20.70L17.20 20.01L17.93 19.33L18.64 18.64L19.33 17.93L20.01 17.20L20.70 16.44L21.39 15.67L22.10 14.86L22.83 14.01L23.57 13.07L24.32 11.98L25.06 10.65L25.83 8.98L26.68 6.98L27.69 4.79L28.92 2.73L30.39 1.25Z" fill="url(#kb)" stroke="#0a3f70" stroke-width="0.8"/><circle cx="32" cy="32" r="16.4" fill="#0c3f6e"/><circle cx="32" cy="32" r="15.4" fill="url(#kg)"/></svg>
<svg class="a" style="left:1365.2px;top:298px;" width="64" height="64" viewBox="0 0 64 64"><circle cx="43.08" cy="6.28" r="2.1" fill="#f4f4f4"/><circle cx="20.92" cy="6.28" r="2.1" fill="#f4f4f4"/><circle cx="52.87" cy="13.34" r="2.1" fill="#f4f4f4"/><circle cx="11.13" cy="13.34" r="2.1" fill="#f4f4f4"/><circle cx="58.72" cy="23.63" r="2.1" fill="#f4f4f4"/><circle cx="5.28" cy="23.63" r="2.1" fill="#f4f4f4"/><circle cx="59.80" cy="35.36" r="2.1" fill="#f4f4f4"/><circle cx="4.20" cy="35.36" r="2.1" fill="#f4f4f4"/><circle cx="55.64" cy="47.00" r="2.1" fill="#f4f4f4"/><circle cx="8.36" cy="47.00" r="2.1" fill="#f4f4f4"/><circle cx="47.25" cy="55.48" r="2.1" fill="#f4f4f4"/><circle cx="16.75" cy="55.48" r="2.1" fill="#f4f4f4"/><circle cx="33" cy="34" r="22" fill="#1a1a1a" opacity="0.6"/><path d="M32.00 0.70L33.61 1.25L35.08 2.73L36.31 4.79L37.32 6.98L38.17 8.98L38.94 10.65L39.68 11.98L40.43 13.07L41.17 14.01L41.90 14.86L42.61 15.67L43.30 16.44L43.99 17.20L44.67 17.93L45.36 18.64L46.07 19.33L46.80 20.01L47.55 20.70L48.32 21.40L49.10 22.12L49.89 22.89L50.66 23.69L51.40 24.55L52.09 25.47L52.72 26.45L53.26 27.48L53.70 28.56L54.03 29.68L54.23 30.83L54.30 32.00L54.23 33.17L54.03 34.32L53.70 35.44L53.26 36.52L52.72 37.55L52.09 38.53L51.40 39.45L50.66 40.31L49.89 41.11L49.10 41.88L48.32 42.60L47.55 43.30L46.80 43.99L46.07 44.67L45.36 45.36L44.67 46.07L43.99 46.80L43.30 47.55L42.60 48.32L41.88 49.10L41.11 49.89L40.31 50.66L39.45 51.40L38.53 52.09L37.55 52.72L36.52 53.26L35.44 53.70L34.32 54.03L33.17 54.23L32.00 54.30L30.83 54.23L29.68 54.03L28.56 53.70L27.48 53.26L26.45 52.72L25.47 52.09L24.55 51.40L23.69 50.66L22.89 49.89L22.13 49.10L21.40 48.32L20.70 47.55L20.01 46.80L19.33 46.07L18.64 45.36L17.93 44.67L17.20 43.99L16.45 43.30L15.68 42.60L14.90 41.88L14.11 41.11L13.34 40.31L12.60 39.45L11.91 38.53L11.28 37.55L10.74 36.52L10.30 35.44L9.97 34.32L9.77 33.17L9.70 32.00L9.77 30.83L9.97 29.68L10.30 28.56L10.74 27.48L11.28 26.45L11.91 25.47L12.60 24.55L13.34 23.69L14.11 22.89L14.90 22.12L15.68 21.40L16.45 20.70L17.20 20.01L17.93 19.33L18.64 18.64L19.33 17.93L20.01 17.20L20.70 16.44L21.39 15.67L22.10 14.86L22.83 14.01L23.57 13.07L24.32 11.98L25.06 10.65L25.83 8.98L26.68 6.98L27.69 4.79L28.92 2.73L30.39 1.25Z" fill="url(#kb)" stroke="#0a3f70" stroke-width="0.8"/><circle cx="32" cy="32" r="16.4" fill="#0c3f6e"/><circle cx="32" cy="32" r="15.4" fill="url(#kg)"/></svg>
<div class="a t" style="left:1311.2px;top:361px;width:40px;height:18px;line-height:18px;font-size:13px;color:#e8e8e8">HR</div>
<div class="a t" style="left:1377.2px;top:361px;width:40px;height:18px;line-height:18px;font-size:13px;color:#e8e8e8">TRIM</div>
<div class="a" style="left:1334.2px;top:416px;width:56px;height:33px;background:#0c0c0c;border-radius:6px"></div>
<div class="a" style="left:1338.2px;top:420px;width:48px;height:25px;background:#0a4e71;border-radius:3px;box-shadow:inset 0 0 0 1px #1a76a6"></div>
<div class="a t" style="left:1338.2px;top:421.5px;width:48px;height:25px;line-height:25px;font-size:14px;font-weight:bold;color:#eaf2f6">IN</div>
<svg class="a" style="left:1351.2px;top:474px;" width="26" height="27" viewBox="0 0 26 27"><path d="M5.2 3.2L17.6 9.7L5.2 16Z" fill="#17a2ea"/><path d="M1.6 10H19.3" stroke="#17a2ea" stroke-width="1.8" stroke-linecap="round"/><path d="M7.6 13.8L19 18.3L7.6 24.6Z" fill="#17a2ea"/><path d="M4.8 18.3H22.7" stroke="#17a2ea" stroke-width="1.8" stroke-linecap="round"/></svg>
<div class="a" style="left:1286.2px;top:614px;width:155.5px;height:35px;background:#595959"></div>
<div class="a t" style="left:1286.2px;top:621px;width:155px;height:22px;line-height:22px;font-size:15px;font-weight:bold;color:#f2f2f2">UTILITY</div>
<div class="a" style="left:1286.2px;top:649px;width:155.5px;height:1px;background:#3a3a3a"></div>
<div class="a" style="left:1286.2px;top:650px;width:155.5px;height:34px;background:#595959"></div>
<div class="a t" style="left:1286.2px;top:656px;width:155px;height:22px;line-height:22px;font-size:15px;font-weight:bold;color:#f2f2f2">MASTER TAPE</div>
<div class="a" style="left:1286.2px;top:684px;width:155.5px;height:24px;background:#2e2e2e"></div>
<div class="a" style="left:1296.2px;top:695px;width:135px;height:16px;background:#262626;border:2px solid #0e0e0e;border-radius:6px;box-shadow:inset 0 0 0 2px #333"></div>
<div class="a" style="left:1286.2px;top:715.5px;width:155.5px;height:451.5px;background:linear-gradient(#bdbdbd,#a4a4a4 30%,#969696 65%,#868686);box-shadow:inset 1.5px 0 0 #b4b4b4,inset 3px 0 0 #8f8f8f,inset -1.5px 0 0 #808080"></div>
<div class="a" style="left:1441.5px;top:715.5px;width:2.7px;height:452px;background:#0d0d0d"></div>
<div class="a" style="left:1297.2px;top:724px;width:135px;height:43px;background:#9c9c9c;border-radius:8px;box-shadow:0 0 0 1px #b0b0b0"></div>
<div class="a" style="left:1299.2px;top:726px;width:131px;height:39px;background:linear-gradient(#1c1c1c,#111);border:2px solid #050505;border-radius:6px"></div>
<div class="a t" style="left:1299.2px;top:734px;width:131px;height:22px;line-height:22px;font-size:15px;font-weight:bold;color:#7ddf55">READ</div>
<svg class="a" style="left:1410.2px;top:745px;" width="14" height="14" viewBox="0 0 14 14"><path d="M1 13L13 1V13Z" fill="#b4c6d0"/></svg>
<svg class="a" style="left:1295.5px;top:770.7px;" width="70" height="70" viewBox="0 0 70 70"><circle cx="35.00" cy="5.00" r="2.3" fill="#111"/><circle cx="56.21" cy="13.79" r="2.3" fill="#111"/><circle cx="65.00" cy="35.00" r="2.3" fill="#111"/><circle cx="56.21" cy="56.21" r="2.3" fill="#111"/><circle cx="13.79" cy="13.79" r="2.3" fill="#111"/><circle cx="5.00" cy="35.00" r="2.3" fill="#111"/><circle cx="13.79" cy="56.21" r="2.3" fill="#111"/><ellipse cx="41" cy="43" rx="25" ry="24" fill="#000" opacity="0.18"/><circle cx="35" cy="35" r="25" fill="#141312"/><circle cx="35" cy="35" r="23.5" fill="url(#pk)"/><circle cx="35" cy="35" r="19" fill="none" stroke="#55524e" stroke-width="0.8" opacity="0.6"/><line x1="31.46" y1="38.54" x2="19.44" y2="50.56" stroke="#ece8dc" stroke-width="3.5"/></svg>
<svg class="a" style="left:1364.5px;top:770.7px;" width="70" height="70" viewBox="0 0 70 70"><circle cx="35.00" cy="5.00" r="2.3" fill="#111"/><circle cx="56.21" cy="13.79" r="2.3" fill="#111"/><circle cx="65.00" cy="35.00" r="2.3" fill="#111"/><circle cx="56.21" cy="56.21" r="2.3" fill="#111"/><circle cx="13.79" cy="13.79" r="2.3" fill="#111"/><circle cx="5.00" cy="35.00" r="2.3" fill="#111"/><circle cx="13.79" cy="56.21" r="2.3" fill="#111"/><ellipse cx="41" cy="43" rx="25" ry="24" fill="#000" opacity="0.18"/><circle cx="35" cy="35" r="25" fill="#141312"/><circle cx="35" cy="35" r="23.5" fill="url(#pk)"/><circle cx="35" cy="35" r="19" fill="none" stroke="#55524e" stroke-width="0.8" opacity="0.6"/><line x1="38.54" y1="38.54" x2="50.56" y2="50.56" stroke="#ece8dc" stroke-width="3.5"/></svg>
<div class="a t" style="left:1298.2px;top:828px;width:12px;height:16px;line-height:16px;font-size:12px;font-weight:bold;color:#111">L</div>
<div class="a t" style="left:1349.7px;top:828px;width:12px;height:16px;line-height:16px;font-size:12px;font-weight:bold;color:#111">R</div>
<div class="a t" style="left:1367.2px;top:828px;width:12px;height:16px;line-height:16px;font-size:12px;font-weight:bold;color:#111">L</div>
<div class="a t" style="left:1419.7px;top:828px;width:12px;height:16px;line-height:16px;font-size:12px;font-weight:bold;color:#111">R</div>
<div class="a" style="left:1308.2px;top:855px;width:50px;height:29px;background:#c7cdd0;border:2px solid #111;border-radius:4px;box-shadow:inset 0 2px 0 #a0a6a9,inset 0 -2px 0 #a0a6a9"></div>
<div class="a t" style="left:1308.2px;top:855px;width:50px;height:29px;line-height:29px;font-size:14px;letter-spacing:-0.4px;font-weight:bold;color:#111">SPILL</div>
<div class="a" style="left:1368.2px;top:853px;width:54px;height:31px;background:#0b0b0b;border-radius:5px;box-shadow:0 0 0 2px #8a8a8a"></div>
<div class="a" style="left:1370.2px;top:855px;width:50px;height:27px;background:linear-gradient(#262626,#151515);border-radius:3px"></div>
<div class="a t" style="left:1370.2px;top:855px;width:50px;height:27px;line-height:27px;font-size:13.5px;font-weight:bold;color:#f5a31a">ARM</div>
<div class="a" style="left:1308.2px;top:896px;width:50px;height:29px;background:#c7cdd0;border:2px solid #111;border-radius:4px;box-shadow:inset 0 2px 0 #a0a6a9,inset 0 -2px 0 #a0a6a9"></div>
<div class="a t" style="left:1308.2px;top:896px;width:50px;height:29px;line-height:29px;font-size:15px;font-weight:bold;color:#111">S</div>
<div class="a" style="left:1370.2px;top:896px;width:50px;height:29px;background:#c7cdd0;border:2px solid #111;border-radius:4px;box-shadow:inset 0 2px 0 #a0a6a9,inset 0 -2px 0 #a0a6a9"></div>
<div class="a t" style="left:1370.2px;top:896px;width:50px;height:29px;line-height:29px;font-size:15px;font-weight:bold;color:#111">M</div>
<div class="a" style="left:1324.5px;top:980px;width:7.4px;height:137px;background:#0c0c0c;border-radius:4px"></div>
<div class="a t" style="left:1342.2px;top:983.7px;width:28px;height:18px;line-height:18px;font-size:14px;color:#111">10</div>
<div class="a t" style="left:1342.2px;top:1027.6px;width:28px;height:18px;line-height:18px;font-size:14px;color:#111">0</div>
<div class="a t" style="left:1342.2px;top:1056.3px;width:28px;height:18px;line-height:18px;font-size:14px;color:#111">10</div>
<div class="a t" style="left:1342.2px;top:1088.6px;width:28px;height:18px;line-height:18px;font-size:14px;color:#111">30</div>
<div class="a t" style="left:1341.2px;top:1105px;width:28px;height:18px;line-height:18px;font-size:17px;font-weight:bold;color:#111">&#8734;</div>
<div class="a" style="left:1325.7px;top:1121.5px;width:2px;height:14.5px;background:#111"></div>
<div class="a" style="left:1325.7px;top:1134px;width:40px;height:2px;background:#111"></div>
<svg class="a" style="left:1310.7px;top:1002px;" width="40" height="82" viewBox="0 0 40 82"><path d="M3 4H38L35 13Q36 44 37 66L35 73L38 81H3L6 73L4 66Q5 44 6 13Z" fill="#000" opacity="0.16"/><path d="M0 0H35L32.5 8.5Q33.5 40 34.5 62L32.5 69L35 77H0L2.5 69L0.5 62Q1.5 40 2.5 8.5Z" fill="url(#fc)" stroke="#707070" stroke-width="0.8"/><path d="M0 0H35L32.5 8.5Q33.5 40 34.5 62L32.5 69L35 77H0L2.5 69L0.5 62Q1.5 40 2.5 8.5Z" fill="url(#fcx)"/><rect x="2" y="37.5" width="31" height="2.4" fill="#111"/></svg>
<div class="a" style="left:1370.2px;top:940px;width:56px;height:209px;background:#2a2a2a;border-radius:7px;box-shadow:0 0 0 1px #9a9a9a"></div>
<div class="a" style="left:1372.2px;top:942px;width:52px;height:205px;background:linear-gradient(90deg,#1c1c1c,#262626 50%,#1e1e1e);border:2px solid #0b0b0b;border-radius:6px"></div>
<svg class="a" style="left:1370.2px;top:940px;" width="56" height="209" viewBox="0 0 56 209"><rect x="9" y="9" width="12" height="126" rx="3" fill="#0e0e0e"/><rect x="10" y="10" width="5" height="124" fill="#23261a"/><rect x="10" y="10" width="5" height="8" fill="#2e1a14"/><rect x="10" y="50" width="5" height="84" fill="url(#bg)"/><rect x="10" y="33" width="5" height="2" fill="#f5b020"/><rect x="15.5" y="10" width="5" height="124" fill="#23261a"/><rect x="15.5" y="10" width="5" height="8" fill="#2e1a14"/><rect x="15.5" y="56" width="5" height="78" fill="url(#bg)"/><rect x="15.5" y="33" width="5" height="2" fill="#f5b020"/><rect x="23" y="17.3" width="4" height="1.5" fill="#8a9296"/><text x="39.5" y="23" font-size="14" font-family="Liberation Sans" fill="#8c9498" text-anchor="middle">0</text><rect x="23" y="47.8" width="4" height="1.5" fill="#8a9296"/><text x="39.5" y="53.5" font-size="14" font-family="Liberation Sans" fill="#8c9498" text-anchor="middle">9</text><rect x="23" y="80.8" width="4" height="1.5" fill="#8a9296"/><text x="39.5" y="86.5" font-size="14" font-family="Liberation Sans" fill="#8c9498" text-anchor="middle">18</text><rect x="23" y="107.3" width="4" height="1.5" fill="#8a9296"/><text x="39.5" y="113" font-size="14" font-family="Liberation Sans" fill="#8c9498" text-anchor="middle">32</text><rect x="23" y="133.70000000000002" width="4" height="1.5" fill="#8a9296"/><text x="39.5" y="139.4" font-size="14" font-family="Liberation Sans" fill="#8c9498" text-anchor="middle">60</text><rect x="23" y="33.3" width="1.5" height="1.5" fill="#8a9296"/><rect x="23" y="64.3" width="1.5" height="1.5" fill="#8a9296"/><rect x="23" y="94.3" width="1.5" height="1.5" fill="#8a9296"/><rect x="23" y="120.8" width="1.5" height="1.5" fill="#8a9296"/></svg>
<div class="a" style="left:1378.2px;top:1085px;width:40px;height:28px;background:#2b2d2f;border-radius:3px;box-shadow:inset 0 0 0 1px #323436"></div>
<svg class="a" style="left:1387.2px;top:1089px;" width="22" height="22" viewBox="0 0 22 22"><circle cx="11" cy="11" r="7.2" fill="none" stroke="#a5adb2" stroke-width="1.6"/><line x1="4" y1="18.5" x2="18" y2="3.5" stroke="#a5adb2" stroke-width="1.6"/></svg>
<div class="a t" style="left:1370.2px;top:1120px;width:56px;height:20px;line-height:20px;font-size:15px;font-weight:bold;color:#c9cbcd">-1.1</div>
<div class="a" style="left:1286.2px;top:1169.5px;width:155.5px;height:32.5px;background:#00f53c"></div>
<div class="a t" style="left:1286.2px;top:1175px;width:155px;height:22px;line-height:22px;font-size:16.4px;font-weight:bold;color:#111">SUB MIX</div>
<div class="a" style="left:1286.2px;top:1204px;width:155.5px;height:11.5px;background:#00f53c"></div>
<div class="a" style="left:1441.5px;top:1167px;width:2.7px;height:49px;background:#0d0d0d"></div>
<div class="a" style="left:1444.5px;top:78px;width:154.0px;height:6.5px;background:#ff9a3c"></div>
<div class="a" style="left:1444.0px;top:87px;width:156.0px;height:34px;background:#5a5a5a"></div>
<div class="a t" style="left:1444.0px;top:94px;width:155px;height:20px;line-height:20px;font-size:15px;font-weight:bold;color:#f2f2f2">INPUT</div>
<div class="a" style="left:1444.0px;top:121px;width:156.0px;height:493px;background:#2e2e2e"></div>
<div class="a" style="left:1450.0px;top:129px;width:144px;height:387px;background:#232323;border:3px solid #131313;border-radius:8px;box-shadow:inset 0 0 0 1px #2c2c2c"></div>
<div class="a" style="left:1454.0px;top:133px;width:135px;height:75px;background:#1a1a1a;border:2px solid #0c0c0c;border-radius:4px"></div>
<div class="a t" style="left:1454.0px;top:141px;width:135px;height:20px;line-height:20px;font-size:14px;color:#838b90">SUMMING</div>
<div class="a" style="left:1460.0px;top:166px;width:124px;height:33px;background:linear-gradient(#61686d,#3f464a);border-radius:5px;box-shadow:0 0 0 1px #151515"></div>
<div class="a t" style="left:1460.0px;top:171px;width:124px;height:22px;line-height:22px;font-size:15px;font-weight:bold;color:#e6e9eb">API Summing</div>
<div class="a" style="left:1452.0px;top:217px;width:140px;height:67px;background:#111"></div>
<svg class="a" style="left:1453.0px;top:218px;" width="138" height="65" viewBox="0 0 138 65"><rect width="138" height="65" fill="url(#vug)"/><ellipse cx="18" cy="60" rx="22" ry="12" fill="url(#vuy)"/><ellipse cx="120" cy="60" rx="22" ry="12" fill="url(#vuy)"/><rect width="138" height="65" fill="none" stroke="#e88a20" stroke-width="1.5" opacity="0.7"/><path d="M22.35 40.33A106.6 106.6 0 0 1 94.54 32.87" fill="none" stroke="#23232e" stroke-width="2.8"/><path d="M94.66 32.38A107.1 107.1 0 0 1 115.36 39.88" fill="none" stroke="#d8202a" stroke-width="3.8"/><line x1="32.82" y1="35.94" x2="29.78" y2="27.47" stroke="#2a2a36" stroke-width="1.3"/><line x1="43.14" y1="32.82" x2="40.98" y2="24.09" stroke="#2a2a36" stroke-width="1.3"/><line x1="47.86" y1="31.77" x2="46.10" y2="22.94" stroke="#2a2a36" stroke-width="1.3"/><line x1="52.44" y1="30.95" x2="51.06" y2="22.06" stroke="#2a2a36" stroke-width="1.3"/><line x1="58.90" y1="30.16" x2="58.07" y2="21.19" stroke="#2a2a36" stroke-width="1.3"/><line x1="66.70" y1="29.72" x2="66.53" y2="20.72" stroke="#2a2a36" stroke-width="1.3"/><line x1="75.07" y1="29.89" x2="75.61" y2="20.90" stroke="#2a2a36" stroke-width="1.3"/><line x1="83.77" y1="30.76" x2="85.04" y2="21.85" stroke="#2a2a36" stroke-width="1.3"/><line x1="94.36" y1="32.82" x2="96.76" y2="23.11" stroke="#2a2a36" stroke-width="1.3"/><line x1="101.69" y1="34.92" x2="104.47" y2="26.36" stroke="#d8202a" stroke-width="1.3"/><line x1="109.03" y1="37.60" x2="112.43" y2="29.27" stroke="#d8202a" stroke-width="1.3"/><line x1="22.35" y1="40.33" x2="15.35" y2="32.83" stroke="#23232e" stroke-width="1.5"/><line x1="115.36" y1="39.88" x2="122.36" y2="31.88" stroke="#d8202a" stroke-width="1.5"/><text x="12" y="29.5" font-size="10" font-family="Liberation Sans" font-weight="bold" fill="#3a3a4a" text-anchor="middle">20</text><text x="49.7" y="19" font-size="10" font-family="Liberation Sans" font-weight="bold" fill="#3a3a4a" text-anchor="middle">5</text><text x="99" y="19" font-size="10" font-family="Liberation Sans" font-weight="bold" fill="#3a3a4a" text-anchor="middle">0</text><text x="124" y="29.5" font-size="10" font-family="Liberation Sans" font-weight="bold" fill="#d8202a" text-anchor="middle">3</text><rect x="4" y="37.5" width="6" height="1.6" fill="#3a3a4a"/><path d="M125.5 38h7M129 34.5v7" stroke="#d8202a" stroke-width="1.6"/><line x1="65.4" y1="64" x2="59.4" y2="11.5" stroke="#1a1a1a" stroke-width="1.6"/></svg>
<svg class="a" style="left:1454.0px;top:298px;" width="64" height="64" viewBox="0 0 64 64"><circle cx="43.08" cy="6.28" r="2.1" fill="#f4f4f4"/><circle cx="20.92" cy="6.28" r="2.1" fill="#f4f4f4"/><circle cx="52.87" cy="13.34" r="2.1" fill="#f4f4f4"/><circle cx="11.13" cy="13.34" r="2.1" fill="#f4f4f4"/><circle cx="58.72" cy="23.63" r="2.1" fill="#f4f4f4"/><circle cx="5.28" cy="23.63" r="2.1" fill="#f4f4f4"/><circle cx="59.80" cy="35.36" r="2.1" fill="#f4f4f4"/><circle cx="4.20" cy="35.36" r="2.1" fill="#f4f4f4"/><circle cx="55.64" cy="47.00" r="2.1" fill="#f4f4f4"/><circle cx="8.36" cy="47.00" r="2.1" fill="#f4f4f4"/><circle cx="47.25" cy="55.48" r="2.1" fill="#f4f4f4"/><circle cx="16.75" cy="55.48" r="2.1" fill="#f4f4f4"/><circle cx="33" cy="34" r="22" fill="#1a1a1a" opacity="0.6"/><path d="M32.00 0.70L33.61 1.25L35.08 2.73L36.31 4.79L37.32 6.98L38.17 8.98L38.94 10.65L39.68 11.98L40.43 13.07L41.17 14.01L41.90 14.86L42.61 15.67L43.30 16.44L43.99 17.20L44.67 17.93L45.36 18.64L46.07 19.33L46.80 20.01L47.55 20.70L48.32 21.40L49.10 22.12L49.89 22.89L50.66 23.69L51.40 24.55L52.09 25.47L52.72 26.45L53.26 27.48L53.70 28.56L54.03 29.68L54.23 30.83L54.30 32.00L54.23 33.17L54.03 34.32L53.70 35.44L53.26 36.52L52.72 37.55L52.09 38.53L51.40 39.45L50.66 40.31L49.89 41.11L49.10 41.88L48.32 42.60L47.55 43.30L46.80 43.99L46.07 44.67L45.36 45.36L44.67 46.07L43.99 46.80L43.30 47.55L42.60 48.32L41.88 49.10L41.11 49.89L40.31 50.66L39.45 51.40L38.53 52.09L37.55 52.72L36.52 53.26L35.44 53.70L34.32 54.03L33.17 54.23L32.00 54.30L30.83 54.23L29.68 54.03L28.56 53.70L27.48 53.26L26.45 52.72L25.47 52.09L24.55 51.40L23.69 50.66L22.89 49.89L22.13 49.10L21.40 48.32L20.70 47.55L20.01 46.80L19.33 46.07L18.64 45.36L17.93 44.67L17.20 43.99L16.45 43.30L15.68 42.60L14.90 41.88L14.11 41.11L13.34 40.31L12.60 39.45L11.91 38.53L11.28 37.55L10.74 36.52L10.30 35.44L9.97 34.32L9.77 33.17L9.70 32.00L9.77 30.83L9.97 29.68L10.30 28.56L10.74 27.48L11.28 26.45L11.91 25.47L12.60 24.55L13.34 23.69L14.11 22.89L14.90 22.12L15.68 21.40L16.45 20.70L17.20 20.01L17.93 19.33L18.64 18.64L19.33 17.93L20.01 17.20L20.70 16.44L21.39 15.67L22.10 14.86L22.83 14.01L23.57 13.07L24.32 11.98L25.06 10.65L25.83 8.98L26.68 6.98L27.69 4.79L28.92 2.73L30.39 1.25Z" fill="url(#kb)" stroke="#0a3f70" stroke-width="0.8"/><circle cx="32" cy="32" r="16.4" fill="#0c3f6e"/><circle cx="32" cy="32" r="15.4" fill="url(#kg)"/></svg>
<svg class="a" style="left:1523.0px;top:298px;" width="64" height="64" viewBox="0 0 64 64"><circle cx="43.08" cy="6.28" r="2.1" fill="#f4f4f4"/><circle cx="20.92" cy="6.28" r="2.1" fill="#f4f4f4"/><circle cx="52.87" cy="13.34" r="2.1" fill="#f4f4f4"/><circle cx="11.13" cy="13.34" r="2.1" fill="#f4f4f4"/><circle cx="58.72" cy="23.63" r="2.1" fill="#f4f4f4"/><circle cx="5.28" cy="23.63" r="2.1" fill="#f4f4f4"/><circle cx="59.80" cy="35.36" r="2.1" fill="#f4f4f4"/><circle cx="4.20" cy="35.36" r="2.1" fill="#f4f4f4"/><circle cx="55.64" cy="47.00" r="2.1" fill="#f4f4f4"/><circle cx="8.36" cy="47.00" r="2.1" fill="#f4f4f4"/><circle cx="47.25" cy="55.48" r="2.1" fill="#f4f4f4"/><circle cx="16.75" cy="55.48" r="2.1" fill="#f4f4f4"/><circle cx="33" cy="34" r="22" fill="#1a1a1a" opacity="0.6"/><path d="M32.00 0.70L33.61 1.25L35.08 2.73L36.31 4.79L37.32 6.98L38.17 8.98L38.94 10.65L39.68 11.98L40.43 13.07L41.17 14.01L41.90 14.86L42.61 15.67L43.30 16.44L43.99 17.20L44.67 17.93L45.36 18.64L46.07 19.33L46.80 20.01L47.55 20.70L48.32 21.40L49.10 22.12L49.89 22.89L50.66 23.69L51.40 24.55L52.09 25.47L52.72 26.45L53.26 27.48L53.70 28.56L54.03 29.68L54.23 30.83L54.30 32.00L54.23 33.17L54.03 34.32L53.70 35.44L53.26 36.52L52.72 37.55L52.09 38.53L51.40 39.45L50.66 40.31L49.89 41.11L49.10 41.88L48.32 42.60L47.55 43.30L46.80 43.99L46.07 44.67L45.36 45.36L44.67 46.07L43.99 46.80L43.30 47.55L42.60 48.32L41.88 49.10L41.11 49.89L40.31 50.66L39.45 51.40L38.53 52.09L37.55 52.72L36.52 53.26L35.44 53.70L34.32 54.03L33.17 54.23L32.00 54.30L30.83 54.23L29.68 54.03L28.56 53.70L27.48 53.26L26.45 52.72L25.47 52.09L24.55 51.40L23.69 50.66L22.89 49.89L22.13 49.10L21.40 48.32L20.70 47.55L20.01 46.80L19.33 46.07L18.64 45.36L17.93 44.67L17.20 43.99L16.45 43.30L15.68 42.60L14.90 41.88L14.11 41.11L13.34 40.31L12.60 39.45L11.91 38.53L11.28 37.55L10.74 36.52L10.30 35.44L9.97 34.32L9.77 33.17L9.70 32.00L9.77 30.83L9.97 29.68L10.30 28.56L10.74 27.48L11.28 26.45L11.91 25.47L12.60 24.55L13.34 23.69L14.11 22.89L14.90 22.12L15.68 21.40L16.45 20.70L17.20 20.01L17.93 19.33L18.64 18.64L19.33 17.93L20.01 17.20L20.70 16.44L21.39 15.67L22.10 14.86L22.83 14.01L23.57 13.07L24.32 11.98L25.06 10.65L25.83 8.98L26.68 6.98L27.69 4.79L28.92 2.73L30.39 1.25Z" fill="url(#kb)" stroke="#0a3f70" stroke-width="0.8"/><circle cx="32" cy="32" r="16.4" fill="#0c3f6e"/><circle cx="32" cy="32" r="15.4" fill="url(#kg)"/></svg>
<div class="a t" style="left:1469.0px;top:361px;width:40px;height:18px;line-height:18px;font-size:13px;color:#e8e8e8">HR</div>
<div class="a t" style="left:1535.0px;top:361px;width:40px;height:18px;line-height:18px;font-size:13px;color:#e8e8e8">TRIM</div>
<div class="a" style="left:1492.0px;top:416px;width:56px;height:33px;background:#0c0c0c;border-radius:6px"></div>
<div class="a" style="left:1496.0px;top:420px;width:48px;height:25px;background:#0a4e71;border-radius:3px;box-shadow:inset 0 0 0 1px #1a76a6"></div>
<div class="a t" style="left:1496.0px;top:421.5px;width:48px;height:25px;line-height:25px;font-size:14px;font-weight:bold;color:#eaf2f6">IN</div>
<svg class="a" style="left:1509.0px;top:474px;" width="26" height="27" viewBox="0 0 26 27"><path d="M5.2 3.2L17.6 9.7L5.2 16Z" fill="#17a2ea"/><path d="M1.6 10H19.3" stroke="#17a2ea" stroke-width="1.8" stroke-linecap="round"/><path d="M7.6 13.8L19 18.3L7.6 24.6Z" fill="#17a2ea"/><path d="M4.8 18.3H22.7" stroke="#17a2ea" stroke-width="1.8" stroke-linecap="round"/></svg>
<div class="a" style="left:1444.0px;top:614px;width:156.0px;height:35px;background:#595959"></div>
<div class="a t" style="left:1444.0px;top:621px;width:155px;height:22px;line-height:22px;font-size:15px;font-weight:bold;color:#f2f2f2">UTILITY</div>
<div class="a" style="left:1444.0px;top:649px;width:156.0px;height:1px;background:#3a3a3a"></div>
<div class="a" style="left:1444.0px;top:650px;width:156.0px;height:34px;background:#595959"></div>
<div class="a t" style="left:1444.0px;top:656px;width:155px;height:22px;line-height:22px;font-size:15px;font-weight:bold;color:#f2f2f2">MASTER TAPE</div>
<div class="a" style="left:1444.0px;top:684px;width:156.0px;height:24px;background:#2e2e2e"></div>
<div class="a" style="left:1454.0px;top:695px;width:135px;height:16px;background:#262626;border:2px solid #0e0e0e;border-radius:6px;box-shadow:inset 0 0 0 2px #333"></div>
<div class="a" style="left:1444.0px;top:715.5px;width:156.0px;height:451.5px;background:linear-gradient(#bdbdbd,#a4a4a4 30%,#969696 65%,#868686);box-shadow:inset 1.5px 0 0 #b4b4b4,inset 3px 0 0 #8f8f8f,inset -1.5px 0 0 #808080"></div>
<div class="a" style="left:1455.0px;top:724px;width:135px;height:43px;background:#9c9c9c;border-radius:8px;box-shadow:0 0 0 1px #b0b0b0"></div>
<div class="a" style="left:1457.0px;top:726px;width:131px;height:39px;background:linear-gradient(#1c1c1c,#111);border:2px solid #050505;border-radius:6px"></div>
<div class="a t" style="left:1457.0px;top:734px;width:131px;height:22px;line-height:22px;font-size:15px;font-weight:bold;color:#7ddf55">READ</div>
<svg class="a" style="left:1568.0px;top:745px;" width="14" height="14" viewBox="0 0 14 14"><path d="M1 13L13 1V13Z" fill="#b4c6d0"/></svg>
<div class="a" style="left:1466.0px;top:855px;width:50px;height:29px;background:#c7cdd0;border:2px solid #111;border-radius:4px;box-shadow:inset 0 2px 0 #a0a6a9,inset 0 -2px 0 #a0a6a9"></div>
<div class="a t" style="left:1466.0px;top:855px;width:50px;height:29px;line-height:29px;font-size:14px;letter-spacing:-0.4px;font-weight:bold;color:#111">SPILL</div>
<div class="a" style="left:1466.0px;top:896px;width:50px;height:29px;background:#c7cdd0;border:2px solid #111;border-radius:4px;box-shadow:inset 0 2px 0 #a0a6a9,inset 0 -2px 0 #a0a6a9"></div>
<div class="a t" style="left:1466.0px;top:896px;width:50px;height:29px;line-height:29px;font-size:15px;font-weight:bold;color:#111">M</div>
<div class="a" style="left:1482.3px;top:980px;width:7.4px;height:137px;background:#0c0c0c;border-radius:4px"></div>
<div class="a t" style="left:1500.0px;top:983.7px;width:28px;height:18px;line-height:18px;font-size:14px;color:#111">10</div>
<div class="a t" style="left:1500.0px;top:1027.6px;width:28px;height:18px;line-height:18px;font-size:14px;color:#111">0</div>
<div class="a t" style="left:1500.0px;top:1056.3px;width:28px;height:18px;line-height:18px;font-size:14px;color:#111">10</div>
<div class="a t" style="left:1500.0px;top:1088.6px;width:28px;height:18px;line-height:18px;font-size:14px;color:#111">30</div>
<div class="a t" style="left:1499.0px;top:1105px;width:28px;height:18px;line-height:18px;font-size:17px;font-weight:bold;color:#111">&#8734;</div>
<div class="a" style="left:1483.5px;top:1121.5px;width:2px;height:14.5px;background:#111"></div>
<div class="a" style="left:1483.5px;top:1134px;width:40px;height:2px;background:#111"></div>
<svg class="a" style="left:1468.5px;top:995.4px;" width="40" height="82" viewBox="0 0 40 82"><path d="M3 4H38L35 13Q36 44 37 66L35 73L38 81H3L6 73L4 66Q5 44 6 13Z" fill="#000" opacity="0.16"/><path d="M0 0H35L32.5 8.5Q33.5 40 34.5 62L32.5 69L35 77H0L2.5 69L0.5 62Q1.5 40 2.5 8.5Z" fill="url(#fc)" stroke="#707070" stroke-width="0.8"/><path d="M0 0H35L32.5 8.5Q33.5 40 34.5 62L32.5 69L35 77H0L2.5 69L0.5 62Q1.5 40 2.5 8.5Z" fill="url(#fcx)"/><rect x="2" y="37.5" width="31" height="2.4" fill="#111"/></svg>
<div class="a" style="left:1528.0px;top:940px;width:56px;height:209px;background:#2a2a2a;border-radius:7px;box-shadow:0 0 0 1px #9a9a9a"></div>
<div class="a" style="left:1530.0px;top:942px;width:52px;height:205px;background:linear-gradient(90deg,#1c1c1c,#262626 50%,#1e1e1e);border:2px solid #0b0b0b;border-radius:6px"></div>
<svg class="a" style="left:1528.0px;top:940px;" width="56" height="209" viewBox="0 0 56 209"><rect x="9" y="9" width="12" height="126" rx="3" fill="#0e0e0e"/><rect x="10" y="10" width="5" height="124" fill="#23261a"/><rect x="10" y="10" width="5" height="8" fill="#2e1a14"/><rect x="10" y="51" width="5" height="83" fill="url(#bg)"/><rect x="10" y="33" width="5" height="2" fill="#f5b020"/><rect x="15.5" y="10" width="5" height="124" fill="#23261a"/><rect x="15.5" y="10" width="5" height="8" fill="#2e1a14"/><rect x="15.5" y="56" width="5" height="78" fill="url(#bg)"/><rect x="15.5" y="23" width="5" height="2" fill="#f5b020"/><rect x="23" y="17.3" width="4" height="1.5" fill="#8a9296"/><text x="39.5" y="23" font-size="14" font-family="Liberation Sans" fill="#8c9498" text-anchor="middle">0</text><rect x="23" y="47.8" width="4" height="1.5" fill="#8a9296"/><text x="39.5" y="53.5" font-size="14" font-family="Liberation Sans" fill="#8c9498" text-anchor="middle">9</text><rect x="23" y="80.8" width="4" height="1.5" fill="#8a9296"/><text x="39.5" y="86.5" font-size="14" font-family="Liberation Sans" fill="#8c9498" text-anchor="middle">18</text><rect x="23" y="107.3" width="4" height="1.5" fill="#8a9296"/><text x="39.5" y="113" font-size="14" font-family="Liberation Sans" fill="#8c9498" text-anchor="middle">32</text><rect x="23" y="133.70000000000002" width="4" height="1.5" fill="#8a9296"/><text x="39.5" y="139.4" font-size="14" font-family="Liberation Sans" fill="#8c9498" text-anchor="middle">60</text><rect x="23" y="33.3" width="1.5" height="1.5" fill="#8a9296"/><rect x="23" y="64.3" width="1.5" height="1.5" fill="#8a9296"/><rect x="23" y="94.3" width="1.5" height="1.5" fill="#8a9296"/><rect x="23" y="120.8" width="1.5" height="1.5" fill="#8a9296"/></svg>
<div class="a" style="left:1536.0px;top:1085px;width:40px;height:28px;background:#2b2d2f;border-radius:3px;box-shadow:inset 0 0 0 1px #323436"></div>
<svg class="a" style="left:1545.0px;top:1089px;" width="22" height="22" viewBox="0 0 22 22"><circle cx="11" cy="11" r="7.2" fill="none" stroke="#a5adb2" stroke-width="1.6"/><line x1="4" y1="18.5" x2="18" y2="3.5" stroke="#a5adb2" stroke-width="1.6"/></svg>
<div class="a t" style="left:1528.0px;top:1120px;width:56px;height:20px;line-height:20px;font-size:15px;font-weight:bold;color:#c9cbcd">0.0</div>
<div class="a" style="left:1444.0px;top:1169.5px;width:156.0px;height:32.5px;background:#ff9a3c"></div>
<div class="a t" style="left:1444.0px;top:1175px;width:155px;height:22px;line-height:22px;font-size:16.4px;font-weight:bold;color:#111">MAIN</div>
<div class="a" style="left:1444.0px;top:1204px;width:156.0px;height:11.5px;background:#ff9a3c"></div>
<div class="a" style="left:422px;top:1216px;width:1178px;height:2px;background:#0a0a0a"></div>
<div class="a" style="left:2px;top:2px;width:420px;height:1217px;border:5px solid #ff2200;border-bottom-width:4px"></div>
<svg class="a" style="left:415px;top:1025px;" width="100" height="85" viewBox="0 0 100 85"><line x1="5" y1="8" x2="92" y2="76" stroke="#ff2200" stroke-width="4.2"/></svg>
<svg class="a" style="left:455px;top:1114px;" width="26" height="26" viewBox="0 0 100 100"><path d="M8 18H84Q80 70 22 92" fill="none" stroke="#ff2200" stroke-width="18.5" stroke-linecap="butt" stroke-linejoin="miter"/></svg>
<svg class="a" style="left:482px;top:1114px;" width="26" height="26" viewBox="0 0 100 100"><path d="M12 48H82" fill="none" stroke="#ff2200" stroke-width="18.5" stroke-linecap="butt" stroke-linejoin="miter"/><path d="M56 30V96" fill="none" stroke="#ff2200" stroke-width="18.5" stroke-linecap="butt" stroke-linejoin="miter"/><path d="M56 52Q40 78 12 88" fill="none" stroke="#ff2200" stroke-width="18.5" stroke-linecap="butt" stroke-linejoin="miter"/></svg>
<svg class="a" style="left:508px;top:1114px;" width="26" height="26" viewBox="0 0 100 100"><path d="M6 52H94" fill="none" stroke="#ff2200" stroke-width="18.5" stroke-linecap="butt" stroke-linejoin="miter"/></svg>
<svg class="a" style="left:534px;top:1114px;" width="26" height="26" viewBox="0 0 100 100"><path d="M6 32H82Q82 92 56 90" fill="none" stroke="#ff2200" stroke-width="18.5" stroke-linecap="butt" stroke-linejoin="miter"/><path d="M46 4Q44 70 10 94" fill="none" stroke="#ff2200" stroke-width="18.5" stroke-linecap="butt" stroke-linejoin="miter"/></svg>
<svg class="a" style="left:560px;top:1114px;" width="26" height="26" viewBox="0 0 100 100"><path d="M14 14H80Q60 72 8 94" fill="none" stroke="#ff2200" stroke-width="18.5" stroke-linecap="butt" stroke-linejoin="miter"/><path d="M50 58L94 92" fill="none" stroke="#ff2200" stroke-width="18.5" stroke-linecap="butt" stroke-linejoin="miter"/></svg>
<svg class="a" style="left:467px;top:1155px;" width="26" height="26" viewBox="0 0 100 100"><path d="M10 30H82Q80 76 24 94" fill="none" stroke="#ff2200" stroke-width="18.5" stroke-linecap="butt" stroke-linejoin="miter"/><path d="M76 2L84 18" fill="none" stroke="#ff2200" stroke-width="18.5" stroke-linecap="butt" stroke-linejoin="miter"/><path d="M92 0L100 16" fill="none" stroke="#ff2200" stroke-width="18.5" stroke-linecap="butt" stroke-linejoin="miter"/></svg>
<svg class="a" style="left:496px;top:1155px;" width="26" height="26" viewBox="0 0 100 100"><path d="M20 10H78" fill="none" stroke="#ff2200" stroke-width="18.5" stroke-linecap="butt" stroke-linejoin="miter"/><path d="M8 38H84Q84 80 30 94" fill="none" stroke="#ff2200" stroke-width="18.5" stroke-linecap="butt" stroke-linejoin="miter"/></svg>
<svg class="a" style="left:522px;top:1155px;" width="26" height="26" viewBox="0 0 100 100"><path d="M50 0V22" fill="none" stroke="#ff2200" stroke-width="18.5" stroke-linecap="butt" stroke-linejoin="miter"/><path d="M16 48V26H84Q84 80 34 94" fill="none" stroke="#ff2200" stroke-width="18.5" stroke-linecap="butt" stroke-linejoin="miter"/></svg>
<svg class="a" style="left:548px;top:1155px;" width="26" height="26" viewBox="0 0 100 100"><path d="M4 34H96" fill="none" stroke="#ff2200" stroke-width="18.5" stroke-linecap="butt" stroke-linejoin="miter"/><path d="M30 8V60" fill="none" stroke="#ff2200" stroke-width="18.5" stroke-linecap="butt" stroke-linejoin="miter"/><path d="M70 6V48Q68 84 36 94" fill="none" stroke="#ff2200" stroke-width="18.5" stroke-linecap="butt" stroke-linejoin="miter"/><path d="M84 0L90 14" fill="none" stroke="#ff2200" stroke-width="18.5" stroke-linecap="butt" stroke-linejoin="miter"/><path d="M96 -2L102 12" fill="none" stroke="#ff2200" stroke-width="18.5" stroke-linecap="butt" stroke-linejoin="miter"/></svg>
</body></html>
